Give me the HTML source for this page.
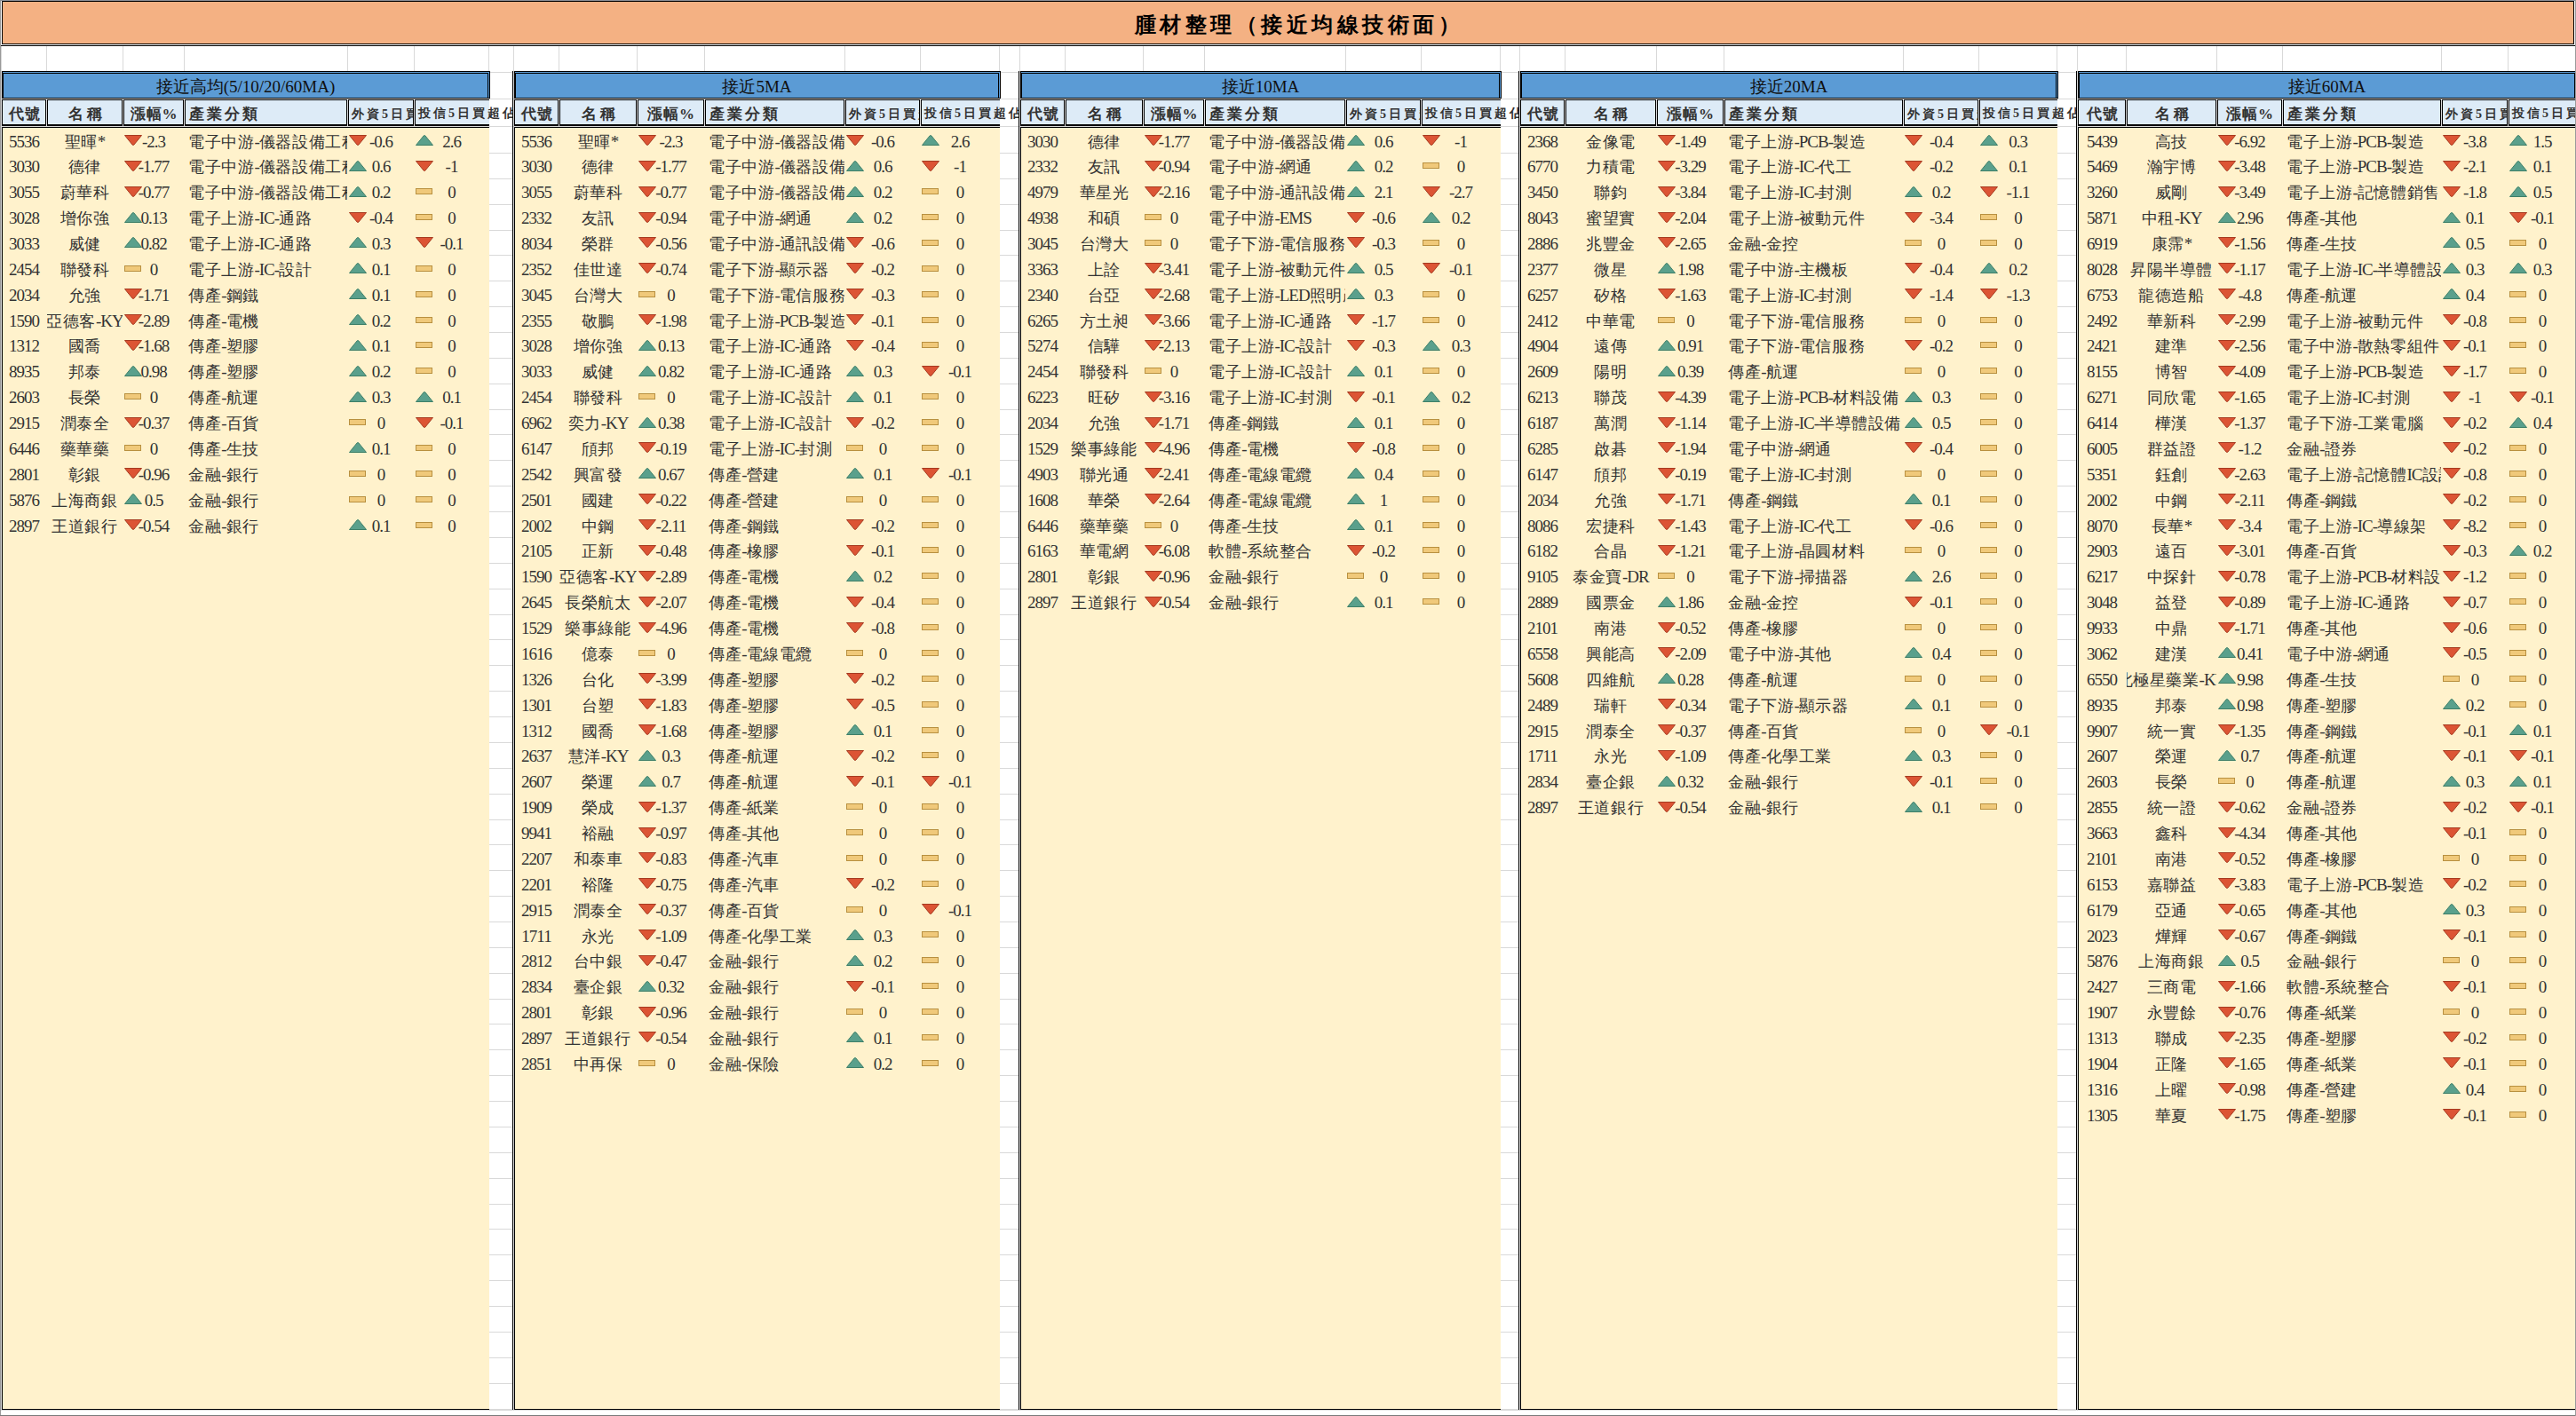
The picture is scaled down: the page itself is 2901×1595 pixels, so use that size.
<!DOCTYPE html><html><head><meta charset="utf-8"><style>

html,body{margin:0;padding:0;}
body{width:2901px;height:1595px;position:relative;overflow:hidden;background:#fff;font-family:"Liberation Serif",serif;color:#333;}
div{position:absolute;box-sizing:border-box;}
.g{background:#d9d9d9;}
.k{background:#000;}
.c{white-space:nowrap;overflow:hidden;display:flex;justify-content:center;font-size:19px;line-height:28px;height:28px;letter-spacing:-1px;}
.l{white-space:nowrap;overflow:hidden;font-size:19px;line-height:28px;height:28px;letter-spacing:-1px;padding-left:4px;}
.c span{flex:none;}
i{font-style:normal;font-size:18px;letter-spacing:0.6px;}
.hd{background:#ddebf7;border:1px solid #000;border-bottom-width:2px;font-weight:bold;font-size:17px;line-height:31px;white-space:nowrap;overflow:hidden;}
.bh{background:#5b9bd5;font-size:19px;line-height:29px;text-align:center;white-space:nowrap;color:#111;}
.body{background:#fff2cc;}
svg{position:absolute;}

</style></head><body>
<div class="g" style="left:1px;top:52px;width:1px;height:1537px"></div>
<div class="g" style="left:52px;top:52px;width:1px;height:1537px"></div>
<div class="g" style="left:138px;top:52px;width:1px;height:1537px"></div>
<div class="g" style="left:207px;top:52px;width:1px;height:1537px"></div>
<div class="g" style="left:391px;top:52px;width:1px;height:1537px"></div>
<div class="g" style="left:466px;top:52px;width:1px;height:1537px"></div>
<div class="g" style="left:550px;top:52px;width:1px;height:1537px"></div>
<div class="g" style="left:578px;top:52px;width:1px;height:1537px"></div>
<div class="g" style="left:629px;top:52px;width:1px;height:1537px"></div>
<div class="g" style="left:717px;top:52px;width:1px;height:1537px"></div>
<div class="g" style="left:793px;top:52px;width:1px;height:1537px"></div>
<div class="g" style="left:951px;top:52px;width:1px;height:1537px"></div>
<div class="g" style="left:1036px;top:52px;width:1px;height:1537px"></div>
<div class="g" style="left:1125px;top:52px;width:1px;height:1537px"></div>
<div class="g" style="left:1148px;top:52px;width:1px;height:1537px"></div>
<div class="g" style="left:1199px;top:52px;width:1px;height:1537px"></div>
<div class="g" style="left:1287px;top:52px;width:1px;height:1537px"></div>
<div class="g" style="left:1356px;top:52px;width:1px;height:1537px"></div>
<div class="g" style="left:1515px;top:52px;width:1px;height:1537px"></div>
<div class="g" style="left:1600px;top:52px;width:1px;height:1537px"></div>
<div class="g" style="left:1689px;top:52px;width:1px;height:1537px"></div>
<div class="g" style="left:1711px;top:52px;width:1px;height:1537px"></div>
<div class="g" style="left:1762px;top:52px;width:1px;height:1537px"></div>
<div class="g" style="left:1865px;top:52px;width:1px;height:1537px"></div>
<div class="g" style="left:1941px;top:52px;width:1px;height:1537px"></div>
<div class="g" style="left:2143px;top:52px;width:1px;height:1537px"></div>
<div class="g" style="left:2228px;top:52px;width:1px;height:1537px"></div>
<div class="g" style="left:2316px;top:52px;width:1px;height:1537px"></div>
<div class="g" style="left:2339px;top:52px;width:1px;height:1537px"></div>
<div class="g" style="left:2394px;top:52px;width:1px;height:1537px"></div>
<div class="g" style="left:2496px;top:52px;width:1px;height:1537px"></div>
<div class="g" style="left:2570px;top:52px;width:1px;height:1537px"></div>
<div class="g" style="left:2749px;top:52px;width:1px;height:1537px"></div>
<div class="g" style="left:2824px;top:52px;width:1px;height:1537px"></div>
<div class="g" style="left:1px;top:81px;width:2899px;height:1px"></div>
<div class="g" style="left:1px;top:111px;width:2899px;height:1px"></div>
<div class="g" style="left:1px;top:142px;width:2899px;height:1px"></div>
<div class="g" style="left:1px;top:172px;width:2899px;height:1px"></div>
<div class="g" style="left:1px;top:201px;width:2899px;height:1px"></div>
<div class="g" style="left:1px;top:230px;width:2899px;height:1px"></div>
<div class="g" style="left:1px;top:259px;width:2899px;height:1px"></div>
<div class="g" style="left:1px;top:287px;width:2899px;height:1px"></div>
<div class="g" style="left:1px;top:316px;width:2899px;height:1px"></div>
<div class="g" style="left:1px;top:345px;width:2899px;height:1px"></div>
<div class="g" style="left:1px;top:374px;width:2899px;height:1px"></div>
<div class="g" style="left:1px;top:403px;width:2899px;height:1px"></div>
<div class="g" style="left:1px;top:432px;width:2899px;height:1px"></div>
<div class="g" style="left:1px;top:461px;width:2899px;height:1px"></div>
<div class="g" style="left:1px;top:489px;width:2899px;height:1px"></div>
<div class="g" style="left:1px;top:518px;width:2899px;height:1px"></div>
<div class="g" style="left:1px;top:547px;width:2899px;height:1px"></div>
<div class="g" style="left:1px;top:576px;width:2899px;height:1px"></div>
<div class="g" style="left:1px;top:605px;width:2899px;height:1px"></div>
<div class="g" style="left:1px;top:634px;width:2899px;height:1px"></div>
<div class="g" style="left:1px;top:663px;width:2899px;height:1px"></div>
<div class="g" style="left:1px;top:692px;width:2899px;height:1px"></div>
<div class="g" style="left:1px;top:720px;width:2899px;height:1px"></div>
<div class="g" style="left:1px;top:749px;width:2899px;height:1px"></div>
<div class="g" style="left:1px;top:778px;width:2899px;height:1px"></div>
<div class="g" style="left:1px;top:807px;width:2899px;height:1px"></div>
<div class="g" style="left:1px;top:836px;width:2899px;height:1px"></div>
<div class="g" style="left:1px;top:865px;width:2899px;height:1px"></div>
<div class="g" style="left:1px;top:894px;width:2899px;height:1px"></div>
<div class="g" style="left:1px;top:923px;width:2899px;height:1px"></div>
<div class="g" style="left:1px;top:951px;width:2899px;height:1px"></div>
<div class="g" style="left:1px;top:980px;width:2899px;height:1px"></div>
<div class="g" style="left:1px;top:1009px;width:2899px;height:1px"></div>
<div class="g" style="left:1px;top:1038px;width:2899px;height:1px"></div>
<div class="g" style="left:1px;top:1067px;width:2899px;height:1px"></div>
<div class="g" style="left:1px;top:1096px;width:2899px;height:1px"></div>
<div class="g" style="left:1px;top:1125px;width:2899px;height:1px"></div>
<div class="g" style="left:1px;top:1153px;width:2899px;height:1px"></div>
<div class="g" style="left:1px;top:1182px;width:2899px;height:1px"></div>
<div class="g" style="left:1px;top:1211px;width:2899px;height:1px"></div>
<div class="g" style="left:1px;top:1240px;width:2899px;height:1px"></div>
<div class="g" style="left:1px;top:1269px;width:2899px;height:1px"></div>
<div class="g" style="left:1px;top:1298px;width:2899px;height:1px"></div>
<div class="g" style="left:1px;top:1327px;width:2899px;height:1px"></div>
<div class="g" style="left:1px;top:1356px;width:2899px;height:1px"></div>
<div class="g" style="left:1px;top:1384px;width:2899px;height:1px"></div>
<div class="g" style="left:1px;top:1413px;width:2899px;height:1px"></div>
<div class="g" style="left:1px;top:1442px;width:2899px;height:1px"></div>
<div class="g" style="left:1px;top:1471px;width:2899px;height:1px"></div>
<div class="g" style="left:1px;top:1500px;width:2899px;height:1px"></div>
<div class="g" style="left:1px;top:1529px;width:2899px;height:1px"></div>
<div class="g" style="left:1px;top:1558px;width:2899px;height:1px"></div>
<div class="g" style="left:1px;top:1587px;width:2899px;height:1px"></div>
<div class="g" style="left:1px;top:1588px;width:2899px;height:1px"></div>
<div style="left:2px;top:1px;width:2897px;height:49px;background:#f4b183;border:1px solid #000;"></div>
<div class="k" style="left:1px;top:51px;width:2899px;height:1px"></div>
<div style="left:0;top:8px;width:2901px;height:40px;text-align:center;font-weight:bold;font-size:24px;line-height:40px;letter-spacing:4.5px;padding-left:25px;color:#000;white-space:nowrap">腫材整理（接近均線技術面）</div>
<div class="bh" style="left:2px;top:80px;width:550px;height:31px;border-top:3px double #000;border-right:3px double #000;border-left:2px solid #000;border-bottom:1px solid #000">接近高均(5/10/20/60MA)</div>
<div class="hd" style="left:2px;top:112px;width:50px;height:30px;text-align:center;letter-spacing:1px;padding-left:2px;">代號</div>
<div class="hd" style="left:53px;top:112px;width:85px;height:30px;text-align:center;letter-spacing:4px;padding-left:4px;">名稱</div>
<div class="hd" style="left:139px;top:112px;width:68px;height:30px;text-align:center;letter-spacing:1px;padding-left:1px;">漲幅%</div>
<div class="hd" style="left:208px;top:112px;width:183px;height:30px;padding-left:4px;letter-spacing:3px;">產業分類</div>
<div class="hd" style="left:392px;top:112px;width:74px;height:30px;padding-left:3px;letter-spacing:3px;font-size:14px;">外資5日買超佔股本比</div>
<div class="hd" style="left:467px;top:112px;width:84px;height:30px;padding-left:3px;letter-spacing:3px;font-size:14px;border-right:none;"></div>
<div class="hd" style="left:467px;top:112px;width:110px;height:30px;border:none;background:none;padding-left:4px;letter-spacing:3px;font-size:14px;">投信5日買超佔股本比</div>
<div class="body" style="left:2px;top:143px;width:549px;height:1445px;border-left:1px solid #000;border-top:1px solid #000;border-bottom:1px solid #000"></div>
<div class="c" style="left:2px;top:145.5px;width:50px"><span>5536</span></div>
<div class="c" style="left:53px;top:145.5px;width:85px"><span><i>聖暉</i>*</span></div>
<div class="c" style="left:139px;top:145.5px;width:68px"><span>-2.3</span></div>
<svg style="left:139.5px;top:152.1px" width="20" height="12" viewBox="0 0 20 12"><polygon points="0.5,0.5 19.5,0.5 10.7,11.3 9.3,11.3" fill="#dc5434" stroke="#a63a20" stroke-width="1"/></svg>
<div class="l" style="left:208px;top:145.5px;width:183px"><span><i>電子中游</i>-<i>儀器設備工程</i></span></div>
<div class="c" style="left:392px;top:145.5px;width:74px"><span>-0.6</span></div>
<svg style="left:392.5px;top:152.1px" width="20" height="12" viewBox="0 0 20 12"><polygon points="0.5,0.5 19.5,0.5 10.7,11.3 9.3,11.3" fill="#dc5434" stroke="#a63a20" stroke-width="1"/></svg>
<div class="c" style="left:467px;top:145.5px;width:83px"><span>2.6</span></div>
<svg style="left:467.5px;top:152.1px" width="20" height="12" viewBox="0 0 20 12"><polygon points="0.5,11.5 19.5,11.5 10.7,0.7 9.3,0.7" fill="#5aa08c" stroke="#3d7f68" stroke-width="1"/></svg>
<div class="c" style="left:2px;top:174.4px;width:50px"><span>3030</span></div>
<div class="c" style="left:53px;top:174.4px;width:85px"><span><i>德律</i></span></div>
<div class="c" style="left:139px;top:174.4px;width:68px"><span>-1.77</span></div>
<svg style="left:139.5px;top:180.8px" width="20" height="12" viewBox="0 0 20 12"><polygon points="0.5,0.5 19.5,0.5 10.7,11.3 9.3,11.3" fill="#dc5434" stroke="#a63a20" stroke-width="1"/></svg>
<div class="l" style="left:208px;top:174.4px;width:183px"><span><i>電子中游</i>-<i>儀器設備工程</i></span></div>
<div class="c" style="left:392px;top:174.4px;width:74px"><span>0.6</span></div>
<svg style="left:392.5px;top:180.8px" width="20" height="12" viewBox="0 0 20 12"><polygon points="0.5,11.5 19.5,11.5 10.7,0.7 9.3,0.7" fill="#5aa08c" stroke="#3d7f68" stroke-width="1"/></svg>
<div class="c" style="left:467px;top:174.4px;width:83px"><span>-1</span></div>
<svg style="left:467.5px;top:180.8px" width="20" height="12" viewBox="0 0 20 12"><polygon points="0.5,0.5 19.5,0.5 10.7,11.3 9.3,11.3" fill="#dc5434" stroke="#a63a20" stroke-width="1"/></svg>
<div class="c" style="left:2px;top:203.2px;width:50px"><span>3055</span></div>
<div class="c" style="left:53px;top:203.2px;width:85px"><span><i>蔚華科</i></span></div>
<div class="c" style="left:139px;top:203.2px;width:68px"><span>-0.77</span></div>
<svg style="left:139.5px;top:209.7px" width="20" height="12" viewBox="0 0 20 12"><polygon points="0.5,0.5 19.5,0.5 10.7,11.3 9.3,11.3" fill="#dc5434" stroke="#a63a20" stroke-width="1"/></svg>
<div class="l" style="left:208px;top:203.2px;width:183px"><span><i>電子中游</i>-<i>儀器設備工程</i></span></div>
<div class="c" style="left:392px;top:203.2px;width:74px"><span>0.2</span></div>
<svg style="left:392.5px;top:209.7px" width="20" height="12" viewBox="0 0 20 12"><polygon points="0.5,11.5 19.5,11.5 10.7,0.7 9.3,0.7" fill="#5aa08c" stroke="#3d7f68" stroke-width="1"/></svg>
<div class="c" style="left:467px;top:203.2px;width:83px"><span>0</span></div>
<svg style="left:467.5px;top:212.2px" width="19" height="7" viewBox="0 0 19 7"><rect x="0.5" y="0.5" width="18" height="6" fill="#f0c97a" stroke="#b89040" stroke-width="1"/></svg>
<div class="c" style="left:2px;top:232.1px;width:50px"><span>3028</span></div>
<div class="c" style="left:53px;top:232.1px;width:85px"><span><i>增你強</i></span></div>
<div class="c" style="left:139px;top:232.1px;width:68px"><span>0.13</span></div>
<svg style="left:139.5px;top:238.6px" width="20" height="12" viewBox="0 0 20 12"><polygon points="0.5,11.5 19.5,11.5 10.7,0.7 9.3,0.7" fill="#5aa08c" stroke="#3d7f68" stroke-width="1"/></svg>
<div class="l" style="left:208px;top:232.1px;width:183px"><span><i>電子上游</i>-IC-<i>通路</i></span></div>
<div class="c" style="left:392px;top:232.1px;width:74px"><span>-0.4</span></div>
<svg style="left:392.5px;top:238.6px" width="20" height="12" viewBox="0 0 20 12"><polygon points="0.5,0.5 19.5,0.5 10.7,11.3 9.3,11.3" fill="#dc5434" stroke="#a63a20" stroke-width="1"/></svg>
<div class="c" style="left:467px;top:232.1px;width:83px"><span>0</span></div>
<svg style="left:467.5px;top:241.1px" width="19" height="7" viewBox="0 0 19 7"><rect x="0.5" y="0.5" width="18" height="6" fill="#f0c97a" stroke="#b89040" stroke-width="1"/></svg>
<div class="c" style="left:2px;top:261.0px;width:50px"><span>3033</span></div>
<div class="c" style="left:53px;top:261.0px;width:85px"><span><i>威健</i></span></div>
<div class="c" style="left:139px;top:261.0px;width:68px"><span>0.82</span></div>
<svg style="left:139.5px;top:267.4px" width="20" height="12" viewBox="0 0 20 12"><polygon points="0.5,11.5 19.5,11.5 10.7,0.7 9.3,0.7" fill="#5aa08c" stroke="#3d7f68" stroke-width="1"/></svg>
<div class="l" style="left:208px;top:261.0px;width:183px"><span><i>電子上游</i>-IC-<i>通路</i></span></div>
<div class="c" style="left:392px;top:261.0px;width:74px"><span>0.3</span></div>
<svg style="left:392.5px;top:267.4px" width="20" height="12" viewBox="0 0 20 12"><polygon points="0.5,11.5 19.5,11.5 10.7,0.7 9.3,0.7" fill="#5aa08c" stroke="#3d7f68" stroke-width="1"/></svg>
<div class="c" style="left:467px;top:261.0px;width:83px"><span>-0.1</span></div>
<svg style="left:467.5px;top:267.4px" width="20" height="12" viewBox="0 0 20 12"><polygon points="0.5,0.5 19.5,0.5 10.7,11.3 9.3,11.3" fill="#dc5434" stroke="#a63a20" stroke-width="1"/></svg>
<div class="c" style="left:2px;top:289.8px;width:50px"><span>2454</span></div>
<div class="c" style="left:53px;top:289.8px;width:85px"><span><i>聯發科</i></span></div>
<div class="c" style="left:139px;top:289.8px;width:68px"><span>0</span></div>
<svg style="left:139.5px;top:298.8px" width="19" height="7" viewBox="0 0 19 7"><rect x="0.5" y="0.5" width="18" height="6" fill="#f0c97a" stroke="#b89040" stroke-width="1"/></svg>
<div class="l" style="left:208px;top:289.8px;width:183px"><span><i>電子上游</i>-IC-<i>設計</i></span></div>
<div class="c" style="left:392px;top:289.8px;width:74px"><span>0.1</span></div>
<svg style="left:392.5px;top:296.3px" width="20" height="12" viewBox="0 0 20 12"><polygon points="0.5,11.5 19.5,11.5 10.7,0.7 9.3,0.7" fill="#5aa08c" stroke="#3d7f68" stroke-width="1"/></svg>
<div class="c" style="left:467px;top:289.8px;width:83px"><span>0</span></div>
<svg style="left:467.5px;top:298.8px" width="19" height="7" viewBox="0 0 19 7"><rect x="0.5" y="0.5" width="18" height="6" fill="#f0c97a" stroke="#b89040" stroke-width="1"/></svg>
<div class="c" style="left:2px;top:318.7px;width:50px"><span>2034</span></div>
<div class="c" style="left:53px;top:318.7px;width:85px"><span><i>允強</i></span></div>
<div class="c" style="left:139px;top:318.7px;width:68px"><span>-1.71</span></div>
<svg style="left:139.5px;top:325.2px" width="20" height="12" viewBox="0 0 20 12"><polygon points="0.5,0.5 19.5,0.5 10.7,11.3 9.3,11.3" fill="#dc5434" stroke="#a63a20" stroke-width="1"/></svg>
<div class="l" style="left:208px;top:318.7px;width:183px"><span><i>傳產</i>-<i>鋼鐵</i></span></div>
<div class="c" style="left:392px;top:318.7px;width:74px"><span>0.1</span></div>
<svg style="left:392.5px;top:325.2px" width="20" height="12" viewBox="0 0 20 12"><polygon points="0.5,11.5 19.5,11.5 10.7,0.7 9.3,0.7" fill="#5aa08c" stroke="#3d7f68" stroke-width="1"/></svg>
<div class="c" style="left:467px;top:318.7px;width:83px"><span>0</span></div>
<svg style="left:467.5px;top:327.7px" width="19" height="7" viewBox="0 0 19 7"><rect x="0.5" y="0.5" width="18" height="6" fill="#f0c97a" stroke="#b89040" stroke-width="1"/></svg>
<div class="c" style="left:2px;top:347.6px;width:50px"><span>1590</span></div>
<div class="c" style="left:53px;top:347.6px;width:85px"><span><i>亞德客</i>-KY</span></div>
<div class="c" style="left:139px;top:347.6px;width:68px"><span>-2.89</span></div>
<svg style="left:139.5px;top:354.1px" width="20" height="12" viewBox="0 0 20 12"><polygon points="0.5,0.5 19.5,0.5 10.7,11.3 9.3,11.3" fill="#dc5434" stroke="#a63a20" stroke-width="1"/></svg>
<div class="l" style="left:208px;top:347.6px;width:183px"><span><i>傳產</i>-<i>電機</i></span></div>
<div class="c" style="left:392px;top:347.6px;width:74px"><span>0.2</span></div>
<svg style="left:392.5px;top:354.1px" width="20" height="12" viewBox="0 0 20 12"><polygon points="0.5,11.5 19.5,11.5 10.7,0.7 9.3,0.7" fill="#5aa08c" stroke="#3d7f68" stroke-width="1"/></svg>
<div class="c" style="left:467px;top:347.6px;width:83px"><span>0</span></div>
<svg style="left:467.5px;top:356.6px" width="19" height="7" viewBox="0 0 19 7"><rect x="0.5" y="0.5" width="18" height="6" fill="#f0c97a" stroke="#b89040" stroke-width="1"/></svg>
<div class="c" style="left:2px;top:376.4px;width:50px"><span>1312</span></div>
<div class="c" style="left:53px;top:376.4px;width:85px"><span><i>國喬</i></span></div>
<div class="c" style="left:139px;top:376.4px;width:68px"><span>-1.68</span></div>
<svg style="left:139.5px;top:382.9px" width="20" height="12" viewBox="0 0 20 12"><polygon points="0.5,0.5 19.5,0.5 10.7,11.3 9.3,11.3" fill="#dc5434" stroke="#a63a20" stroke-width="1"/></svg>
<div class="l" style="left:208px;top:376.4px;width:183px"><span><i>傳產</i>-<i>塑膠</i></span></div>
<div class="c" style="left:392px;top:376.4px;width:74px"><span>0.1</span></div>
<svg style="left:392.5px;top:382.9px" width="20" height="12" viewBox="0 0 20 12"><polygon points="0.5,11.5 19.5,11.5 10.7,0.7 9.3,0.7" fill="#5aa08c" stroke="#3d7f68" stroke-width="1"/></svg>
<div class="c" style="left:467px;top:376.4px;width:83px"><span>0</span></div>
<svg style="left:467.5px;top:385.4px" width="19" height="7" viewBox="0 0 19 7"><rect x="0.5" y="0.5" width="18" height="6" fill="#f0c97a" stroke="#b89040" stroke-width="1"/></svg>
<div class="c" style="left:2px;top:405.3px;width:50px"><span>8935</span></div>
<div class="c" style="left:53px;top:405.3px;width:85px"><span><i>邦泰</i></span></div>
<div class="c" style="left:139px;top:405.3px;width:68px"><span>0.98</span></div>
<svg style="left:139.5px;top:411.8px" width="20" height="12" viewBox="0 0 20 12"><polygon points="0.5,11.5 19.5,11.5 10.7,0.7 9.3,0.7" fill="#5aa08c" stroke="#3d7f68" stroke-width="1"/></svg>
<div class="l" style="left:208px;top:405.3px;width:183px"><span><i>傳產</i>-<i>塑膠</i></span></div>
<div class="c" style="left:392px;top:405.3px;width:74px"><span>0.2</span></div>
<svg style="left:392.5px;top:411.8px" width="20" height="12" viewBox="0 0 20 12"><polygon points="0.5,11.5 19.5,11.5 10.7,0.7 9.3,0.7" fill="#5aa08c" stroke="#3d7f68" stroke-width="1"/></svg>
<div class="c" style="left:467px;top:405.3px;width:83px"><span>0</span></div>
<svg style="left:467.5px;top:414.3px" width="19" height="7" viewBox="0 0 19 7"><rect x="0.5" y="0.5" width="18" height="6" fill="#f0c97a" stroke="#b89040" stroke-width="1"/></svg>
<div class="c" style="left:2px;top:434.2px;width:50px"><span>2603</span></div>
<div class="c" style="left:53px;top:434.2px;width:85px"><span><i>長榮</i></span></div>
<div class="c" style="left:139px;top:434.2px;width:68px"><span>0</span></div>
<svg style="left:139.5px;top:443.2px" width="19" height="7" viewBox="0 0 19 7"><rect x="0.5" y="0.5" width="18" height="6" fill="#f0c97a" stroke="#b89040" stroke-width="1"/></svg>
<div class="l" style="left:208px;top:434.2px;width:183px"><span><i>傳產</i>-<i>航運</i></span></div>
<div class="c" style="left:392px;top:434.2px;width:74px"><span>0.3</span></div>
<svg style="left:392.5px;top:440.7px" width="20" height="12" viewBox="0 0 20 12"><polygon points="0.5,11.5 19.5,11.5 10.7,0.7 9.3,0.7" fill="#5aa08c" stroke="#3d7f68" stroke-width="1"/></svg>
<div class="c" style="left:467px;top:434.2px;width:83px"><span>0.1</span></div>
<svg style="left:467.5px;top:440.7px" width="20" height="12" viewBox="0 0 20 12"><polygon points="0.5,11.5 19.5,11.5 10.7,0.7 9.3,0.7" fill="#5aa08c" stroke="#3d7f68" stroke-width="1"/></svg>
<div class="c" style="left:2px;top:463.1px;width:50px"><span>2915</span></div>
<div class="c" style="left:53px;top:463.1px;width:85px"><span><i>潤泰全</i></span></div>
<div class="c" style="left:139px;top:463.1px;width:68px"><span>-0.37</span></div>
<svg style="left:139.5px;top:469.5px" width="20" height="12" viewBox="0 0 20 12"><polygon points="0.5,0.5 19.5,0.5 10.7,11.3 9.3,11.3" fill="#dc5434" stroke="#a63a20" stroke-width="1"/></svg>
<div class="l" style="left:208px;top:463.1px;width:183px"><span><i>傳產</i>-<i>百貨</i></span></div>
<div class="c" style="left:392px;top:463.1px;width:74px"><span>0</span></div>
<svg style="left:392.5px;top:472.0px" width="19" height="7" viewBox="0 0 19 7"><rect x="0.5" y="0.5" width="18" height="6" fill="#f0c97a" stroke="#b89040" stroke-width="1"/></svg>
<div class="c" style="left:467px;top:463.1px;width:83px"><span>-0.1</span></div>
<svg style="left:467.5px;top:469.5px" width="20" height="12" viewBox="0 0 20 12"><polygon points="0.5,0.5 19.5,0.5 10.7,11.3 9.3,11.3" fill="#dc5434" stroke="#a63a20" stroke-width="1"/></svg>
<div class="c" style="left:2px;top:491.9px;width:50px"><span>6446</span></div>
<div class="c" style="left:53px;top:491.9px;width:85px"><span><i>藥華藥</i></span></div>
<div class="c" style="left:139px;top:491.9px;width:68px"><span>0</span></div>
<svg style="left:139.5px;top:500.9px" width="19" height="7" viewBox="0 0 19 7"><rect x="0.5" y="0.5" width="18" height="6" fill="#f0c97a" stroke="#b89040" stroke-width="1"/></svg>
<div class="l" style="left:208px;top:491.9px;width:183px"><span><i>傳產</i>-<i>生技</i></span></div>
<div class="c" style="left:392px;top:491.9px;width:74px"><span>0.1</span></div>
<svg style="left:392.5px;top:498.4px" width="20" height="12" viewBox="0 0 20 12"><polygon points="0.5,11.5 19.5,11.5 10.7,0.7 9.3,0.7" fill="#5aa08c" stroke="#3d7f68" stroke-width="1"/></svg>
<div class="c" style="left:467px;top:491.9px;width:83px"><span>0</span></div>
<svg style="left:467.5px;top:500.9px" width="19" height="7" viewBox="0 0 19 7"><rect x="0.5" y="0.5" width="18" height="6" fill="#f0c97a" stroke="#b89040" stroke-width="1"/></svg>
<div class="c" style="left:2px;top:520.8px;width:50px"><span>2801</span></div>
<div class="c" style="left:53px;top:520.8px;width:85px"><span><i>彰銀</i></span></div>
<div class="c" style="left:139px;top:520.8px;width:68px"><span>-0.96</span></div>
<svg style="left:139.5px;top:527.3px" width="20" height="12" viewBox="0 0 20 12"><polygon points="0.5,0.5 19.5,0.5 10.7,11.3 9.3,11.3" fill="#dc5434" stroke="#a63a20" stroke-width="1"/></svg>
<div class="l" style="left:208px;top:520.8px;width:183px"><span><i>金融</i>-<i>銀行</i></span></div>
<div class="c" style="left:392px;top:520.8px;width:74px"><span>0</span></div>
<svg style="left:392.5px;top:529.8px" width="19" height="7" viewBox="0 0 19 7"><rect x="0.5" y="0.5" width="18" height="6" fill="#f0c97a" stroke="#b89040" stroke-width="1"/></svg>
<div class="c" style="left:467px;top:520.8px;width:83px"><span>0</span></div>
<svg style="left:467.5px;top:529.8px" width="19" height="7" viewBox="0 0 19 7"><rect x="0.5" y="0.5" width="18" height="6" fill="#f0c97a" stroke="#b89040" stroke-width="1"/></svg>
<div class="c" style="left:2px;top:549.7px;width:50px"><span>5876</span></div>
<div class="c" style="left:53px;top:549.7px;width:85px"><span><i>上海商銀</i></span></div>
<div class="c" style="left:139px;top:549.7px;width:68px"><span>0.5</span></div>
<svg style="left:139.5px;top:556.1px" width="20" height="12" viewBox="0 0 20 12"><polygon points="0.5,11.5 19.5,11.5 10.7,0.7 9.3,0.7" fill="#5aa08c" stroke="#3d7f68" stroke-width="1"/></svg>
<div class="l" style="left:208px;top:549.7px;width:183px"><span><i>金融</i>-<i>銀行</i></span></div>
<div class="c" style="left:392px;top:549.7px;width:74px"><span>0</span></div>
<svg style="left:392.5px;top:558.6px" width="19" height="7" viewBox="0 0 19 7"><rect x="0.5" y="0.5" width="18" height="6" fill="#f0c97a" stroke="#b89040" stroke-width="1"/></svg>
<div class="c" style="left:467px;top:549.7px;width:83px"><span>0</span></div>
<svg style="left:467.5px;top:558.6px" width="19" height="7" viewBox="0 0 19 7"><rect x="0.5" y="0.5" width="18" height="6" fill="#f0c97a" stroke="#b89040" stroke-width="1"/></svg>
<div class="c" style="left:2px;top:578.5px;width:50px"><span>2897</span></div>
<div class="c" style="left:53px;top:578.5px;width:85px"><span><i>王道銀行</i></span></div>
<div class="c" style="left:139px;top:578.5px;width:68px"><span>-0.54</span></div>
<svg style="left:139.5px;top:585.0px" width="20" height="12" viewBox="0 0 20 12"><polygon points="0.5,0.5 19.5,0.5 10.7,11.3 9.3,11.3" fill="#dc5434" stroke="#a63a20" stroke-width="1"/></svg>
<div class="l" style="left:208px;top:578.5px;width:183px"><span><i>金融</i>-<i>銀行</i></span></div>
<div class="c" style="left:392px;top:578.5px;width:74px"><span>0.1</span></div>
<svg style="left:392.5px;top:585.0px" width="20" height="12" viewBox="0 0 20 12"><polygon points="0.5,11.5 19.5,11.5 10.7,0.7 9.3,0.7" fill="#5aa08c" stroke="#3d7f68" stroke-width="1"/></svg>
<div class="c" style="left:467px;top:578.5px;width:83px"><span>0</span></div>
<svg style="left:467.5px;top:587.5px" width="19" height="7" viewBox="0 0 19 7"><rect x="0.5" y="0.5" width="18" height="6" fill="#f0c97a" stroke="#b89040" stroke-width="1"/></svg>
<div class="k" style="left:577px;top:80px;width:1px;height:1508px"></div>
<div class="bh" style="left:579px;top:80px;width:548px;height:31px;border-top:3px double #000;border-right:3px double #000;border-left:2px solid #000;border-bottom:1px solid #000">接近5MA</div>
<div class="hd" style="left:579px;top:112px;width:50px;height:30px;text-align:center;letter-spacing:1px;padding-left:2px;">代號</div>
<div class="hd" style="left:630px;top:112px;width:87px;height:30px;text-align:center;letter-spacing:4px;padding-left:4px;">名稱</div>
<div class="hd" style="left:718px;top:112px;width:75px;height:30px;text-align:center;letter-spacing:1px;padding-left:1px;">漲幅%</div>
<div class="hd" style="left:794px;top:112px;width:157px;height:30px;padding-left:4px;letter-spacing:3px;">產業分類</div>
<div class="hd" style="left:952px;top:112px;width:84px;height:30px;padding-left:3px;letter-spacing:3px;font-size:14px;">外資5日買超佔股本比</div>
<div class="hd" style="left:1037px;top:112px;width:89px;height:30px;padding-left:3px;letter-spacing:3px;font-size:14px;border-right:none;"></div>
<div class="hd" style="left:1037px;top:112px;width:110px;height:30px;border:none;background:none;padding-left:4px;letter-spacing:3px;font-size:14px;">投信5日買超佔股本比</div>
<div class="body" style="left:579px;top:143px;width:547px;height:1445px;border-left:1px solid #000;border-top:1px solid #000;border-bottom:1px solid #000"></div>
<div class="c" style="left:579px;top:145.5px;width:50px"><span>5536</span></div>
<div class="c" style="left:630px;top:145.5px;width:87px"><span><i>聖暉</i>*</span></div>
<div class="c" style="left:718px;top:145.5px;width:75px"><span>-2.3</span></div>
<svg style="left:718.5px;top:152.1px" width="20" height="12" viewBox="0 0 20 12"><polygon points="0.5,0.5 19.5,0.5 10.7,11.3 9.3,11.3" fill="#dc5434" stroke="#a63a20" stroke-width="1"/></svg>
<div class="l" style="left:794px;top:145.5px;width:157px"><span><i>電子中游</i>-<i>儀器設備工程</i></span></div>
<div class="c" style="left:952px;top:145.5px;width:84px"><span>-0.6</span></div>
<svg style="left:952.5px;top:152.1px" width="20" height="12" viewBox="0 0 20 12"><polygon points="0.5,0.5 19.5,0.5 10.7,11.3 9.3,11.3" fill="#dc5434" stroke="#a63a20" stroke-width="1"/></svg>
<div class="c" style="left:1037px;top:145.5px;width:88px"><span>2.6</span></div>
<svg style="left:1037.5px;top:152.1px" width="20" height="12" viewBox="0 0 20 12"><polygon points="0.5,11.5 19.5,11.5 10.7,0.7 9.3,0.7" fill="#5aa08c" stroke="#3d7f68" stroke-width="1"/></svg>
<div class="c" style="left:579px;top:174.4px;width:50px"><span>3030</span></div>
<div class="c" style="left:630px;top:174.4px;width:87px"><span><i>德律</i></span></div>
<div class="c" style="left:718px;top:174.4px;width:75px"><span>-1.77</span></div>
<svg style="left:718.5px;top:180.8px" width="20" height="12" viewBox="0 0 20 12"><polygon points="0.5,0.5 19.5,0.5 10.7,11.3 9.3,11.3" fill="#dc5434" stroke="#a63a20" stroke-width="1"/></svg>
<div class="l" style="left:794px;top:174.4px;width:157px"><span><i>電子中游</i>-<i>儀器設備工程</i></span></div>
<div class="c" style="left:952px;top:174.4px;width:84px"><span>0.6</span></div>
<svg style="left:952.5px;top:180.8px" width="20" height="12" viewBox="0 0 20 12"><polygon points="0.5,11.5 19.5,11.5 10.7,0.7 9.3,0.7" fill="#5aa08c" stroke="#3d7f68" stroke-width="1"/></svg>
<div class="c" style="left:1037px;top:174.4px;width:88px"><span>-1</span></div>
<svg style="left:1037.5px;top:180.8px" width="20" height="12" viewBox="0 0 20 12"><polygon points="0.5,0.5 19.5,0.5 10.7,11.3 9.3,11.3" fill="#dc5434" stroke="#a63a20" stroke-width="1"/></svg>
<div class="c" style="left:579px;top:203.2px;width:50px"><span>3055</span></div>
<div class="c" style="left:630px;top:203.2px;width:87px"><span><i>蔚華科</i></span></div>
<div class="c" style="left:718px;top:203.2px;width:75px"><span>-0.77</span></div>
<svg style="left:718.5px;top:209.7px" width="20" height="12" viewBox="0 0 20 12"><polygon points="0.5,0.5 19.5,0.5 10.7,11.3 9.3,11.3" fill="#dc5434" stroke="#a63a20" stroke-width="1"/></svg>
<div class="l" style="left:794px;top:203.2px;width:157px"><span><i>電子中游</i>-<i>儀器設備工程</i></span></div>
<div class="c" style="left:952px;top:203.2px;width:84px"><span>0.2</span></div>
<svg style="left:952.5px;top:209.7px" width="20" height="12" viewBox="0 0 20 12"><polygon points="0.5,11.5 19.5,11.5 10.7,0.7 9.3,0.7" fill="#5aa08c" stroke="#3d7f68" stroke-width="1"/></svg>
<div class="c" style="left:1037px;top:203.2px;width:88px"><span>0</span></div>
<svg style="left:1037.5px;top:212.2px" width="19" height="7" viewBox="0 0 19 7"><rect x="0.5" y="0.5" width="18" height="6" fill="#f0c97a" stroke="#b89040" stroke-width="1"/></svg>
<div class="c" style="left:579px;top:232.1px;width:50px"><span>2332</span></div>
<div class="c" style="left:630px;top:232.1px;width:87px"><span><i>友訊</i></span></div>
<div class="c" style="left:718px;top:232.1px;width:75px"><span>-0.94</span></div>
<svg style="left:718.5px;top:238.6px" width="20" height="12" viewBox="0 0 20 12"><polygon points="0.5,0.5 19.5,0.5 10.7,11.3 9.3,11.3" fill="#dc5434" stroke="#a63a20" stroke-width="1"/></svg>
<div class="l" style="left:794px;top:232.1px;width:157px"><span><i>電子中游</i>-<i>網通</i></span></div>
<div class="c" style="left:952px;top:232.1px;width:84px"><span>0.2</span></div>
<svg style="left:952.5px;top:238.6px" width="20" height="12" viewBox="0 0 20 12"><polygon points="0.5,11.5 19.5,11.5 10.7,0.7 9.3,0.7" fill="#5aa08c" stroke="#3d7f68" stroke-width="1"/></svg>
<div class="c" style="left:1037px;top:232.1px;width:88px"><span>0</span></div>
<svg style="left:1037.5px;top:241.1px" width="19" height="7" viewBox="0 0 19 7"><rect x="0.5" y="0.5" width="18" height="6" fill="#f0c97a" stroke="#b89040" stroke-width="1"/></svg>
<div class="c" style="left:579px;top:261.0px;width:50px"><span>8034</span></div>
<div class="c" style="left:630px;top:261.0px;width:87px"><span><i>榮群</i></span></div>
<div class="c" style="left:718px;top:261.0px;width:75px"><span>-0.56</span></div>
<svg style="left:718.5px;top:267.4px" width="20" height="12" viewBox="0 0 20 12"><polygon points="0.5,0.5 19.5,0.5 10.7,11.3 9.3,11.3" fill="#dc5434" stroke="#a63a20" stroke-width="1"/></svg>
<div class="l" style="left:794px;top:261.0px;width:157px"><span><i>電子中游</i>-<i>通訊設備</i></span></div>
<div class="c" style="left:952px;top:261.0px;width:84px"><span>-0.6</span></div>
<svg style="left:952.5px;top:267.4px" width="20" height="12" viewBox="0 0 20 12"><polygon points="0.5,0.5 19.5,0.5 10.7,11.3 9.3,11.3" fill="#dc5434" stroke="#a63a20" stroke-width="1"/></svg>
<div class="c" style="left:1037px;top:261.0px;width:88px"><span>0</span></div>
<svg style="left:1037.5px;top:269.9px" width="19" height="7" viewBox="0 0 19 7"><rect x="0.5" y="0.5" width="18" height="6" fill="#f0c97a" stroke="#b89040" stroke-width="1"/></svg>
<div class="c" style="left:579px;top:289.8px;width:50px"><span>2352</span></div>
<div class="c" style="left:630px;top:289.8px;width:87px"><span><i>佳世達</i></span></div>
<div class="c" style="left:718px;top:289.8px;width:75px"><span>-0.74</span></div>
<svg style="left:718.5px;top:296.3px" width="20" height="12" viewBox="0 0 20 12"><polygon points="0.5,0.5 19.5,0.5 10.7,11.3 9.3,11.3" fill="#dc5434" stroke="#a63a20" stroke-width="1"/></svg>
<div class="l" style="left:794px;top:289.8px;width:157px"><span><i>電子下游</i>-<i>顯示器</i></span></div>
<div class="c" style="left:952px;top:289.8px;width:84px"><span>-0.2</span></div>
<svg style="left:952.5px;top:296.3px" width="20" height="12" viewBox="0 0 20 12"><polygon points="0.5,0.5 19.5,0.5 10.7,11.3 9.3,11.3" fill="#dc5434" stroke="#a63a20" stroke-width="1"/></svg>
<div class="c" style="left:1037px;top:289.8px;width:88px"><span>0</span></div>
<svg style="left:1037.5px;top:298.8px" width="19" height="7" viewBox="0 0 19 7"><rect x="0.5" y="0.5" width="18" height="6" fill="#f0c97a" stroke="#b89040" stroke-width="1"/></svg>
<div class="c" style="left:579px;top:318.7px;width:50px"><span>3045</span></div>
<div class="c" style="left:630px;top:318.7px;width:87px"><span><i>台灣大</i></span></div>
<div class="c" style="left:718px;top:318.7px;width:75px"><span>0</span></div>
<svg style="left:718.5px;top:327.7px" width="19" height="7" viewBox="0 0 19 7"><rect x="0.5" y="0.5" width="18" height="6" fill="#f0c97a" stroke="#b89040" stroke-width="1"/></svg>
<div class="l" style="left:794px;top:318.7px;width:157px"><span><i>電子下游</i>-<i>電信服務</i></span></div>
<div class="c" style="left:952px;top:318.7px;width:84px"><span>-0.3</span></div>
<svg style="left:952.5px;top:325.2px" width="20" height="12" viewBox="0 0 20 12"><polygon points="0.5,0.5 19.5,0.5 10.7,11.3 9.3,11.3" fill="#dc5434" stroke="#a63a20" stroke-width="1"/></svg>
<div class="c" style="left:1037px;top:318.7px;width:88px"><span>0</span></div>
<svg style="left:1037.5px;top:327.7px" width="19" height="7" viewBox="0 0 19 7"><rect x="0.5" y="0.5" width="18" height="6" fill="#f0c97a" stroke="#b89040" stroke-width="1"/></svg>
<div class="c" style="left:579px;top:347.6px;width:50px"><span>2355</span></div>
<div class="c" style="left:630px;top:347.6px;width:87px"><span><i>敬鵬</i></span></div>
<div class="c" style="left:718px;top:347.6px;width:75px"><span>-1.98</span></div>
<svg style="left:718.5px;top:354.1px" width="20" height="12" viewBox="0 0 20 12"><polygon points="0.5,0.5 19.5,0.5 10.7,11.3 9.3,11.3" fill="#dc5434" stroke="#a63a20" stroke-width="1"/></svg>
<div class="l" style="left:794px;top:347.6px;width:157px"><span><i>電子上游</i>-PCB-<i>製造</i></span></div>
<div class="c" style="left:952px;top:347.6px;width:84px"><span>-0.1</span></div>
<svg style="left:952.5px;top:354.1px" width="20" height="12" viewBox="0 0 20 12"><polygon points="0.5,0.5 19.5,0.5 10.7,11.3 9.3,11.3" fill="#dc5434" stroke="#a63a20" stroke-width="1"/></svg>
<div class="c" style="left:1037px;top:347.6px;width:88px"><span>0</span></div>
<svg style="left:1037.5px;top:356.6px" width="19" height="7" viewBox="0 0 19 7"><rect x="0.5" y="0.5" width="18" height="6" fill="#f0c97a" stroke="#b89040" stroke-width="1"/></svg>
<div class="c" style="left:579px;top:376.4px;width:50px"><span>3028</span></div>
<div class="c" style="left:630px;top:376.4px;width:87px"><span><i>增你強</i></span></div>
<div class="c" style="left:718px;top:376.4px;width:75px"><span>0.13</span></div>
<svg style="left:718.5px;top:382.9px" width="20" height="12" viewBox="0 0 20 12"><polygon points="0.5,11.5 19.5,11.5 10.7,0.7 9.3,0.7" fill="#5aa08c" stroke="#3d7f68" stroke-width="1"/></svg>
<div class="l" style="left:794px;top:376.4px;width:157px"><span><i>電子上游</i>-IC-<i>通路</i></span></div>
<div class="c" style="left:952px;top:376.4px;width:84px"><span>-0.4</span></div>
<svg style="left:952.5px;top:382.9px" width="20" height="12" viewBox="0 0 20 12"><polygon points="0.5,0.5 19.5,0.5 10.7,11.3 9.3,11.3" fill="#dc5434" stroke="#a63a20" stroke-width="1"/></svg>
<div class="c" style="left:1037px;top:376.4px;width:88px"><span>0</span></div>
<svg style="left:1037.5px;top:385.4px" width="19" height="7" viewBox="0 0 19 7"><rect x="0.5" y="0.5" width="18" height="6" fill="#f0c97a" stroke="#b89040" stroke-width="1"/></svg>
<div class="c" style="left:579px;top:405.3px;width:50px"><span>3033</span></div>
<div class="c" style="left:630px;top:405.3px;width:87px"><span><i>威健</i></span></div>
<div class="c" style="left:718px;top:405.3px;width:75px"><span>0.82</span></div>
<svg style="left:718.5px;top:411.8px" width="20" height="12" viewBox="0 0 20 12"><polygon points="0.5,11.5 19.5,11.5 10.7,0.7 9.3,0.7" fill="#5aa08c" stroke="#3d7f68" stroke-width="1"/></svg>
<div class="l" style="left:794px;top:405.3px;width:157px"><span><i>電子上游</i>-IC-<i>通路</i></span></div>
<div class="c" style="left:952px;top:405.3px;width:84px"><span>0.3</span></div>
<svg style="left:952.5px;top:411.8px" width="20" height="12" viewBox="0 0 20 12"><polygon points="0.5,11.5 19.5,11.5 10.7,0.7 9.3,0.7" fill="#5aa08c" stroke="#3d7f68" stroke-width="1"/></svg>
<div class="c" style="left:1037px;top:405.3px;width:88px"><span>-0.1</span></div>
<svg style="left:1037.5px;top:411.8px" width="20" height="12" viewBox="0 0 20 12"><polygon points="0.5,0.5 19.5,0.5 10.7,11.3 9.3,11.3" fill="#dc5434" stroke="#a63a20" stroke-width="1"/></svg>
<div class="c" style="left:579px;top:434.2px;width:50px"><span>2454</span></div>
<div class="c" style="left:630px;top:434.2px;width:87px"><span><i>聯發科</i></span></div>
<div class="c" style="left:718px;top:434.2px;width:75px"><span>0</span></div>
<svg style="left:718.5px;top:443.2px" width="19" height="7" viewBox="0 0 19 7"><rect x="0.5" y="0.5" width="18" height="6" fill="#f0c97a" stroke="#b89040" stroke-width="1"/></svg>
<div class="l" style="left:794px;top:434.2px;width:157px"><span><i>電子上游</i>-IC-<i>設計</i></span></div>
<div class="c" style="left:952px;top:434.2px;width:84px"><span>0.1</span></div>
<svg style="left:952.5px;top:440.7px" width="20" height="12" viewBox="0 0 20 12"><polygon points="0.5,11.5 19.5,11.5 10.7,0.7 9.3,0.7" fill="#5aa08c" stroke="#3d7f68" stroke-width="1"/></svg>
<div class="c" style="left:1037px;top:434.2px;width:88px"><span>0</span></div>
<svg style="left:1037.5px;top:443.2px" width="19" height="7" viewBox="0 0 19 7"><rect x="0.5" y="0.5" width="18" height="6" fill="#f0c97a" stroke="#b89040" stroke-width="1"/></svg>
<div class="c" style="left:579px;top:463.1px;width:50px"><span>6962</span></div>
<div class="c" style="left:630px;top:463.1px;width:87px"><span><i>奕力</i>-KY</span></div>
<div class="c" style="left:718px;top:463.1px;width:75px"><span>0.38</span></div>
<svg style="left:718.5px;top:469.5px" width="20" height="12" viewBox="0 0 20 12"><polygon points="0.5,11.5 19.5,11.5 10.7,0.7 9.3,0.7" fill="#5aa08c" stroke="#3d7f68" stroke-width="1"/></svg>
<div class="l" style="left:794px;top:463.1px;width:157px"><span><i>電子上游</i>-IC-<i>設計</i></span></div>
<div class="c" style="left:952px;top:463.1px;width:84px"><span>-0.2</span></div>
<svg style="left:952.5px;top:469.5px" width="20" height="12" viewBox="0 0 20 12"><polygon points="0.5,0.5 19.5,0.5 10.7,11.3 9.3,11.3" fill="#dc5434" stroke="#a63a20" stroke-width="1"/></svg>
<div class="c" style="left:1037px;top:463.1px;width:88px"><span>0</span></div>
<svg style="left:1037.5px;top:472.0px" width="19" height="7" viewBox="0 0 19 7"><rect x="0.5" y="0.5" width="18" height="6" fill="#f0c97a" stroke="#b89040" stroke-width="1"/></svg>
<div class="c" style="left:579px;top:491.9px;width:50px"><span>6147</span></div>
<div class="c" style="left:630px;top:491.9px;width:87px"><span><i>頎邦</i></span></div>
<div class="c" style="left:718px;top:491.9px;width:75px"><span>-0.19</span></div>
<svg style="left:718.5px;top:498.4px" width="20" height="12" viewBox="0 0 20 12"><polygon points="0.5,0.5 19.5,0.5 10.7,11.3 9.3,11.3" fill="#dc5434" stroke="#a63a20" stroke-width="1"/></svg>
<div class="l" style="left:794px;top:491.9px;width:157px"><span><i>電子上游</i>-IC-<i>封測</i></span></div>
<div class="c" style="left:952px;top:491.9px;width:84px"><span>0</span></div>
<svg style="left:952.5px;top:500.9px" width="19" height="7" viewBox="0 0 19 7"><rect x="0.5" y="0.5" width="18" height="6" fill="#f0c97a" stroke="#b89040" stroke-width="1"/></svg>
<div class="c" style="left:1037px;top:491.9px;width:88px"><span>0</span></div>
<svg style="left:1037.5px;top:500.9px" width="19" height="7" viewBox="0 0 19 7"><rect x="0.5" y="0.5" width="18" height="6" fill="#f0c97a" stroke="#b89040" stroke-width="1"/></svg>
<div class="c" style="left:579px;top:520.8px;width:50px"><span>2542</span></div>
<div class="c" style="left:630px;top:520.8px;width:87px"><span><i>興富發</i></span></div>
<div class="c" style="left:718px;top:520.8px;width:75px"><span>0.67</span></div>
<svg style="left:718.5px;top:527.3px" width="20" height="12" viewBox="0 0 20 12"><polygon points="0.5,11.5 19.5,11.5 10.7,0.7 9.3,0.7" fill="#5aa08c" stroke="#3d7f68" stroke-width="1"/></svg>
<div class="l" style="left:794px;top:520.8px;width:157px"><span><i>傳產</i>-<i>營建</i></span></div>
<div class="c" style="left:952px;top:520.8px;width:84px"><span>0.1</span></div>
<svg style="left:952.5px;top:527.3px" width="20" height="12" viewBox="0 0 20 12"><polygon points="0.5,11.5 19.5,11.5 10.7,0.7 9.3,0.7" fill="#5aa08c" stroke="#3d7f68" stroke-width="1"/></svg>
<div class="c" style="left:1037px;top:520.8px;width:88px"><span>-0.1</span></div>
<svg style="left:1037.5px;top:527.3px" width="20" height="12" viewBox="0 0 20 12"><polygon points="0.5,0.5 19.5,0.5 10.7,11.3 9.3,11.3" fill="#dc5434" stroke="#a63a20" stroke-width="1"/></svg>
<div class="c" style="left:579px;top:549.7px;width:50px"><span>2501</span></div>
<div class="c" style="left:630px;top:549.7px;width:87px"><span><i>國建</i></span></div>
<div class="c" style="left:718px;top:549.7px;width:75px"><span>-0.22</span></div>
<svg style="left:718.5px;top:556.1px" width="20" height="12" viewBox="0 0 20 12"><polygon points="0.5,0.5 19.5,0.5 10.7,11.3 9.3,11.3" fill="#dc5434" stroke="#a63a20" stroke-width="1"/></svg>
<div class="l" style="left:794px;top:549.7px;width:157px"><span><i>傳產</i>-<i>營建</i></span></div>
<div class="c" style="left:952px;top:549.7px;width:84px"><span>0</span></div>
<svg style="left:952.5px;top:558.6px" width="19" height="7" viewBox="0 0 19 7"><rect x="0.5" y="0.5" width="18" height="6" fill="#f0c97a" stroke="#b89040" stroke-width="1"/></svg>
<div class="c" style="left:1037px;top:549.7px;width:88px"><span>0</span></div>
<svg style="left:1037.5px;top:558.6px" width="19" height="7" viewBox="0 0 19 7"><rect x="0.5" y="0.5" width="18" height="6" fill="#f0c97a" stroke="#b89040" stroke-width="1"/></svg>
<div class="c" style="left:579px;top:578.5px;width:50px"><span>2002</span></div>
<div class="c" style="left:630px;top:578.5px;width:87px"><span><i>中鋼</i></span></div>
<div class="c" style="left:718px;top:578.5px;width:75px"><span>-2.11</span></div>
<svg style="left:718.5px;top:585.0px" width="20" height="12" viewBox="0 0 20 12"><polygon points="0.5,0.5 19.5,0.5 10.7,11.3 9.3,11.3" fill="#dc5434" stroke="#a63a20" stroke-width="1"/></svg>
<div class="l" style="left:794px;top:578.5px;width:157px"><span><i>傳產</i>-<i>鋼鐵</i></span></div>
<div class="c" style="left:952px;top:578.5px;width:84px"><span>-0.2</span></div>
<svg style="left:952.5px;top:585.0px" width="20" height="12" viewBox="0 0 20 12"><polygon points="0.5,0.5 19.5,0.5 10.7,11.3 9.3,11.3" fill="#dc5434" stroke="#a63a20" stroke-width="1"/></svg>
<div class="c" style="left:1037px;top:578.5px;width:88px"><span>0</span></div>
<svg style="left:1037.5px;top:587.5px" width="19" height="7" viewBox="0 0 19 7"><rect x="0.5" y="0.5" width="18" height="6" fill="#f0c97a" stroke="#b89040" stroke-width="1"/></svg>
<div class="c" style="left:579px;top:607.4px;width:50px"><span>2105</span></div>
<div class="c" style="left:630px;top:607.4px;width:87px"><span><i>正新</i></span></div>
<div class="c" style="left:718px;top:607.4px;width:75px"><span>-0.48</span></div>
<svg style="left:718.5px;top:613.9px" width="20" height="12" viewBox="0 0 20 12"><polygon points="0.5,0.5 19.5,0.5 10.7,11.3 9.3,11.3" fill="#dc5434" stroke="#a63a20" stroke-width="1"/></svg>
<div class="l" style="left:794px;top:607.4px;width:157px"><span><i>傳產</i>-<i>橡膠</i></span></div>
<div class="c" style="left:952px;top:607.4px;width:84px"><span>-0.1</span></div>
<svg style="left:952.5px;top:613.9px" width="20" height="12" viewBox="0 0 20 12"><polygon points="0.5,0.5 19.5,0.5 10.7,11.3 9.3,11.3" fill="#dc5434" stroke="#a63a20" stroke-width="1"/></svg>
<div class="c" style="left:1037px;top:607.4px;width:88px"><span>0</span></div>
<svg style="left:1037.5px;top:616.4px" width="19" height="7" viewBox="0 0 19 7"><rect x="0.5" y="0.5" width="18" height="6" fill="#f0c97a" stroke="#b89040" stroke-width="1"/></svg>
<div class="c" style="left:579px;top:636.3px;width:50px"><span>1590</span></div>
<div class="c" style="left:630px;top:636.3px;width:87px"><span><i>亞德客</i>-KY</span></div>
<div class="c" style="left:718px;top:636.3px;width:75px"><span>-2.89</span></div>
<svg style="left:718.5px;top:642.8px" width="20" height="12" viewBox="0 0 20 12"><polygon points="0.5,0.5 19.5,0.5 10.7,11.3 9.3,11.3" fill="#dc5434" stroke="#a63a20" stroke-width="1"/></svg>
<div class="l" style="left:794px;top:636.3px;width:157px"><span><i>傳產</i>-<i>電機</i></span></div>
<div class="c" style="left:952px;top:636.3px;width:84px"><span>0.2</span></div>
<svg style="left:952.5px;top:642.8px" width="20" height="12" viewBox="0 0 20 12"><polygon points="0.5,11.5 19.5,11.5 10.7,0.7 9.3,0.7" fill="#5aa08c" stroke="#3d7f68" stroke-width="1"/></svg>
<div class="c" style="left:1037px;top:636.3px;width:88px"><span>0</span></div>
<svg style="left:1037.5px;top:645.3px" width="19" height="7" viewBox="0 0 19 7"><rect x="0.5" y="0.5" width="18" height="6" fill="#f0c97a" stroke="#b89040" stroke-width="1"/></svg>
<div class="c" style="left:579px;top:665.1px;width:50px"><span>2645</span></div>
<div class="c" style="left:630px;top:665.1px;width:87px"><span><i>長榮航太</i></span></div>
<div class="c" style="left:718px;top:665.1px;width:75px"><span>-2.07</span></div>
<svg style="left:718.5px;top:671.6px" width="20" height="12" viewBox="0 0 20 12"><polygon points="0.5,0.5 19.5,0.5 10.7,11.3 9.3,11.3" fill="#dc5434" stroke="#a63a20" stroke-width="1"/></svg>
<div class="l" style="left:794px;top:665.1px;width:157px"><span><i>傳產</i>-<i>電機</i></span></div>
<div class="c" style="left:952px;top:665.1px;width:84px"><span>-0.4</span></div>
<svg style="left:952.5px;top:671.6px" width="20" height="12" viewBox="0 0 20 12"><polygon points="0.5,0.5 19.5,0.5 10.7,11.3 9.3,11.3" fill="#dc5434" stroke="#a63a20" stroke-width="1"/></svg>
<div class="c" style="left:1037px;top:665.1px;width:88px"><span>0</span></div>
<svg style="left:1037.5px;top:674.1px" width="19" height="7" viewBox="0 0 19 7"><rect x="0.5" y="0.5" width="18" height="6" fill="#f0c97a" stroke="#b89040" stroke-width="1"/></svg>
<div class="c" style="left:579px;top:694.0px;width:50px"><span>1529</span></div>
<div class="c" style="left:630px;top:694.0px;width:87px"><span><i>樂事綠能</i></span></div>
<div class="c" style="left:718px;top:694.0px;width:75px"><span>-4.96</span></div>
<svg style="left:718.5px;top:700.5px" width="20" height="12" viewBox="0 0 20 12"><polygon points="0.5,0.5 19.5,0.5 10.7,11.3 9.3,11.3" fill="#dc5434" stroke="#a63a20" stroke-width="1"/></svg>
<div class="l" style="left:794px;top:694.0px;width:157px"><span><i>傳產</i>-<i>電機</i></span></div>
<div class="c" style="left:952px;top:694.0px;width:84px"><span>-0.8</span></div>
<svg style="left:952.5px;top:700.5px" width="20" height="12" viewBox="0 0 20 12"><polygon points="0.5,0.5 19.5,0.5 10.7,11.3 9.3,11.3" fill="#dc5434" stroke="#a63a20" stroke-width="1"/></svg>
<div class="c" style="left:1037px;top:694.0px;width:88px"><span>0</span></div>
<svg style="left:1037.5px;top:703.0px" width="19" height="7" viewBox="0 0 19 7"><rect x="0.5" y="0.5" width="18" height="6" fill="#f0c97a" stroke="#b89040" stroke-width="1"/></svg>
<div class="c" style="left:579px;top:722.9px;width:50px"><span>1616</span></div>
<div class="c" style="left:630px;top:722.9px;width:87px"><span><i>億泰</i></span></div>
<div class="c" style="left:718px;top:722.9px;width:75px"><span>0</span></div>
<svg style="left:718.5px;top:731.9px" width="19" height="7" viewBox="0 0 19 7"><rect x="0.5" y="0.5" width="18" height="6" fill="#f0c97a" stroke="#b89040" stroke-width="1"/></svg>
<div class="l" style="left:794px;top:722.9px;width:157px"><span><i>傳產</i>-<i>電線電纜</i></span></div>
<div class="c" style="left:952px;top:722.9px;width:84px"><span>0</span></div>
<svg style="left:952.5px;top:731.9px" width="19" height="7" viewBox="0 0 19 7"><rect x="0.5" y="0.5" width="18" height="6" fill="#f0c97a" stroke="#b89040" stroke-width="1"/></svg>
<div class="c" style="left:1037px;top:722.9px;width:88px"><span>0</span></div>
<svg style="left:1037.5px;top:731.9px" width="19" height="7" viewBox="0 0 19 7"><rect x="0.5" y="0.5" width="18" height="6" fill="#f0c97a" stroke="#b89040" stroke-width="1"/></svg>
<div class="c" style="left:579px;top:751.8px;width:50px"><span>1326</span></div>
<div class="c" style="left:630px;top:751.8px;width:87px"><span><i>台化</i></span></div>
<div class="c" style="left:718px;top:751.8px;width:75px"><span>-3.99</span></div>
<svg style="left:718.5px;top:758.2px" width="20" height="12" viewBox="0 0 20 12"><polygon points="0.5,0.5 19.5,0.5 10.7,11.3 9.3,11.3" fill="#dc5434" stroke="#a63a20" stroke-width="1"/></svg>
<div class="l" style="left:794px;top:751.8px;width:157px"><span><i>傳產</i>-<i>塑膠</i></span></div>
<div class="c" style="left:952px;top:751.8px;width:84px"><span>-0.2</span></div>
<svg style="left:952.5px;top:758.2px" width="20" height="12" viewBox="0 0 20 12"><polygon points="0.5,0.5 19.5,0.5 10.7,11.3 9.3,11.3" fill="#dc5434" stroke="#a63a20" stroke-width="1"/></svg>
<div class="c" style="left:1037px;top:751.8px;width:88px"><span>0</span></div>
<svg style="left:1037.5px;top:760.7px" width="19" height="7" viewBox="0 0 19 7"><rect x="0.5" y="0.5" width="18" height="6" fill="#f0c97a" stroke="#b89040" stroke-width="1"/></svg>
<div class="c" style="left:579px;top:780.6px;width:50px"><span>1301</span></div>
<div class="c" style="left:630px;top:780.6px;width:87px"><span><i>台塑</i></span></div>
<div class="c" style="left:718px;top:780.6px;width:75px"><span>-1.83</span></div>
<svg style="left:718.5px;top:787.1px" width="20" height="12" viewBox="0 0 20 12"><polygon points="0.5,0.5 19.5,0.5 10.7,11.3 9.3,11.3" fill="#dc5434" stroke="#a63a20" stroke-width="1"/></svg>
<div class="l" style="left:794px;top:780.6px;width:157px"><span><i>傳產</i>-<i>塑膠</i></span></div>
<div class="c" style="left:952px;top:780.6px;width:84px"><span>-0.5</span></div>
<svg style="left:952.5px;top:787.1px" width="20" height="12" viewBox="0 0 20 12"><polygon points="0.5,0.5 19.5,0.5 10.7,11.3 9.3,11.3" fill="#dc5434" stroke="#a63a20" stroke-width="1"/></svg>
<div class="c" style="left:1037px;top:780.6px;width:88px"><span>0</span></div>
<svg style="left:1037.5px;top:789.6px" width="19" height="7" viewBox="0 0 19 7"><rect x="0.5" y="0.5" width="18" height="6" fill="#f0c97a" stroke="#b89040" stroke-width="1"/></svg>
<div class="c" style="left:579px;top:809.5px;width:50px"><span>1312</span></div>
<div class="c" style="left:630px;top:809.5px;width:87px"><span><i>國喬</i></span></div>
<div class="c" style="left:718px;top:809.5px;width:75px"><span>-1.68</span></div>
<svg style="left:718.5px;top:816.0px" width="20" height="12" viewBox="0 0 20 12"><polygon points="0.5,0.5 19.5,0.5 10.7,11.3 9.3,11.3" fill="#dc5434" stroke="#a63a20" stroke-width="1"/></svg>
<div class="l" style="left:794px;top:809.5px;width:157px"><span><i>傳產</i>-<i>塑膠</i></span></div>
<div class="c" style="left:952px;top:809.5px;width:84px"><span>0.1</span></div>
<svg style="left:952.5px;top:816.0px" width="20" height="12" viewBox="0 0 20 12"><polygon points="0.5,11.5 19.5,11.5 10.7,0.7 9.3,0.7" fill="#5aa08c" stroke="#3d7f68" stroke-width="1"/></svg>
<div class="c" style="left:1037px;top:809.5px;width:88px"><span>0</span></div>
<svg style="left:1037.5px;top:818.5px" width="19" height="7" viewBox="0 0 19 7"><rect x="0.5" y="0.5" width="18" height="6" fill="#f0c97a" stroke="#b89040" stroke-width="1"/></svg>
<div class="c" style="left:579px;top:838.4px;width:50px"><span>2637</span></div>
<div class="c" style="left:630px;top:838.4px;width:87px"><span><i>慧洋</i>-KY</span></div>
<div class="c" style="left:718px;top:838.4px;width:75px"><span>0.3</span></div>
<svg style="left:718.5px;top:844.8px" width="20" height="12" viewBox="0 0 20 12"><polygon points="0.5,11.5 19.5,11.5 10.7,0.7 9.3,0.7" fill="#5aa08c" stroke="#3d7f68" stroke-width="1"/></svg>
<div class="l" style="left:794px;top:838.4px;width:157px"><span><i>傳產</i>-<i>航運</i></span></div>
<div class="c" style="left:952px;top:838.4px;width:84px"><span>-0.2</span></div>
<svg style="left:952.5px;top:844.8px" width="20" height="12" viewBox="0 0 20 12"><polygon points="0.5,0.5 19.5,0.5 10.7,11.3 9.3,11.3" fill="#dc5434" stroke="#a63a20" stroke-width="1"/></svg>
<div class="c" style="left:1037px;top:838.4px;width:88px"><span>0</span></div>
<svg style="left:1037.5px;top:847.3px" width="19" height="7" viewBox="0 0 19 7"><rect x="0.5" y="0.5" width="18" height="6" fill="#f0c97a" stroke="#b89040" stroke-width="1"/></svg>
<div class="c" style="left:579px;top:867.2px;width:50px"><span>2607</span></div>
<div class="c" style="left:630px;top:867.2px;width:87px"><span><i>榮運</i></span></div>
<div class="c" style="left:718px;top:867.2px;width:75px"><span>0.7</span></div>
<svg style="left:718.5px;top:873.7px" width="20" height="12" viewBox="0 0 20 12"><polygon points="0.5,11.5 19.5,11.5 10.7,0.7 9.3,0.7" fill="#5aa08c" stroke="#3d7f68" stroke-width="1"/></svg>
<div class="l" style="left:794px;top:867.2px;width:157px"><span><i>傳產</i>-<i>航運</i></span></div>
<div class="c" style="left:952px;top:867.2px;width:84px"><span>-0.1</span></div>
<svg style="left:952.5px;top:873.7px" width="20" height="12" viewBox="0 0 20 12"><polygon points="0.5,0.5 19.5,0.5 10.7,11.3 9.3,11.3" fill="#dc5434" stroke="#a63a20" stroke-width="1"/></svg>
<div class="c" style="left:1037px;top:867.2px;width:88px"><span>-0.1</span></div>
<svg style="left:1037.5px;top:873.7px" width="20" height="12" viewBox="0 0 20 12"><polygon points="0.5,0.5 19.5,0.5 10.7,11.3 9.3,11.3" fill="#dc5434" stroke="#a63a20" stroke-width="1"/></svg>
<div class="c" style="left:579px;top:896.1px;width:50px"><span>1909</span></div>
<div class="c" style="left:630px;top:896.1px;width:87px"><span><i>榮成</i></span></div>
<div class="c" style="left:718px;top:896.1px;width:75px"><span>-1.37</span></div>
<svg style="left:718.5px;top:902.6px" width="20" height="12" viewBox="0 0 20 12"><polygon points="0.5,0.5 19.5,0.5 10.7,11.3 9.3,11.3" fill="#dc5434" stroke="#a63a20" stroke-width="1"/></svg>
<div class="l" style="left:794px;top:896.1px;width:157px"><span><i>傳產</i>-<i>紙業</i></span></div>
<div class="c" style="left:952px;top:896.1px;width:84px"><span>0</span></div>
<svg style="left:952.5px;top:905.1px" width="19" height="7" viewBox="0 0 19 7"><rect x="0.5" y="0.5" width="18" height="6" fill="#f0c97a" stroke="#b89040" stroke-width="1"/></svg>
<div class="c" style="left:1037px;top:896.1px;width:88px"><span>0</span></div>
<svg style="left:1037.5px;top:905.1px" width="19" height="7" viewBox="0 0 19 7"><rect x="0.5" y="0.5" width="18" height="6" fill="#f0c97a" stroke="#b89040" stroke-width="1"/></svg>
<div class="c" style="left:579px;top:925.0px;width:50px"><span>9941</span></div>
<div class="c" style="left:630px;top:925.0px;width:87px"><span><i>裕融</i></span></div>
<div class="c" style="left:718px;top:925.0px;width:75px"><span>-0.97</span></div>
<svg style="left:718.5px;top:931.5px" width="20" height="12" viewBox="0 0 20 12"><polygon points="0.5,0.5 19.5,0.5 10.7,11.3 9.3,11.3" fill="#dc5434" stroke="#a63a20" stroke-width="1"/></svg>
<div class="l" style="left:794px;top:925.0px;width:157px"><span><i>傳產</i>-<i>其他</i></span></div>
<div class="c" style="left:952px;top:925.0px;width:84px"><span>0</span></div>
<svg style="left:952.5px;top:934.0px" width="19" height="7" viewBox="0 0 19 7"><rect x="0.5" y="0.5" width="18" height="6" fill="#f0c97a" stroke="#b89040" stroke-width="1"/></svg>
<div class="c" style="left:1037px;top:925.0px;width:88px"><span>0</span></div>
<svg style="left:1037.5px;top:934.0px" width="19" height="7" viewBox="0 0 19 7"><rect x="0.5" y="0.5" width="18" height="6" fill="#f0c97a" stroke="#b89040" stroke-width="1"/></svg>
<div class="c" style="left:579px;top:953.8px;width:50px"><span>2207</span></div>
<div class="c" style="left:630px;top:953.8px;width:87px"><span><i>和泰車</i></span></div>
<div class="c" style="left:718px;top:953.8px;width:75px"><span>-0.83</span></div>
<svg style="left:718.5px;top:960.3px" width="20" height="12" viewBox="0 0 20 12"><polygon points="0.5,0.5 19.5,0.5 10.7,11.3 9.3,11.3" fill="#dc5434" stroke="#a63a20" stroke-width="1"/></svg>
<div class="l" style="left:794px;top:953.8px;width:157px"><span><i>傳產</i>-<i>汽車</i></span></div>
<div class="c" style="left:952px;top:953.8px;width:84px"><span>0</span></div>
<svg style="left:952.5px;top:962.8px" width="19" height="7" viewBox="0 0 19 7"><rect x="0.5" y="0.5" width="18" height="6" fill="#f0c97a" stroke="#b89040" stroke-width="1"/></svg>
<div class="c" style="left:1037px;top:953.8px;width:88px"><span>0</span></div>
<svg style="left:1037.5px;top:962.8px" width="19" height="7" viewBox="0 0 19 7"><rect x="0.5" y="0.5" width="18" height="6" fill="#f0c97a" stroke="#b89040" stroke-width="1"/></svg>
<div class="c" style="left:579px;top:982.7px;width:50px"><span>2201</span></div>
<div class="c" style="left:630px;top:982.7px;width:87px"><span><i>裕隆</i></span></div>
<div class="c" style="left:718px;top:982.7px;width:75px"><span>-0.75</span></div>
<svg style="left:718.5px;top:989.2px" width="20" height="12" viewBox="0 0 20 12"><polygon points="0.5,0.5 19.5,0.5 10.7,11.3 9.3,11.3" fill="#dc5434" stroke="#a63a20" stroke-width="1"/></svg>
<div class="l" style="left:794px;top:982.7px;width:157px"><span><i>傳產</i>-<i>汽車</i></span></div>
<div class="c" style="left:952px;top:982.7px;width:84px"><span>-0.2</span></div>
<svg style="left:952.5px;top:989.2px" width="20" height="12" viewBox="0 0 20 12"><polygon points="0.5,0.5 19.5,0.5 10.7,11.3 9.3,11.3" fill="#dc5434" stroke="#a63a20" stroke-width="1"/></svg>
<div class="c" style="left:1037px;top:982.7px;width:88px"><span>0</span></div>
<svg style="left:1037.5px;top:991.7px" width="19" height="7" viewBox="0 0 19 7"><rect x="0.5" y="0.5" width="18" height="6" fill="#f0c97a" stroke="#b89040" stroke-width="1"/></svg>
<div class="c" style="left:579px;top:1011.6px;width:50px"><span>2915</span></div>
<div class="c" style="left:630px;top:1011.6px;width:87px"><span><i>潤泰全</i></span></div>
<div class="c" style="left:718px;top:1011.6px;width:75px"><span>-0.37</span></div>
<svg style="left:718.5px;top:1018.1px" width="20" height="12" viewBox="0 0 20 12"><polygon points="0.5,0.5 19.5,0.5 10.7,11.3 9.3,11.3" fill="#dc5434" stroke="#a63a20" stroke-width="1"/></svg>
<div class="l" style="left:794px;top:1011.6px;width:157px"><span><i>傳產</i>-<i>百貨</i></span></div>
<div class="c" style="left:952px;top:1011.6px;width:84px"><span>0</span></div>
<svg style="left:952.5px;top:1020.6px" width="19" height="7" viewBox="0 0 19 7"><rect x="0.5" y="0.5" width="18" height="6" fill="#f0c97a" stroke="#b89040" stroke-width="1"/></svg>
<div class="c" style="left:1037px;top:1011.6px;width:88px"><span>-0.1</span></div>
<svg style="left:1037.5px;top:1018.1px" width="20" height="12" viewBox="0 0 20 12"><polygon points="0.5,0.5 19.5,0.5 10.7,11.3 9.3,11.3" fill="#dc5434" stroke="#a63a20" stroke-width="1"/></svg>
<div class="c" style="left:579px;top:1040.5px;width:50px"><span>1711</span></div>
<div class="c" style="left:630px;top:1040.5px;width:87px"><span><i>永光</i></span></div>
<div class="c" style="left:718px;top:1040.5px;width:75px"><span>-1.09</span></div>
<svg style="left:718.5px;top:1046.9px" width="20" height="12" viewBox="0 0 20 12"><polygon points="0.5,0.5 19.5,0.5 10.7,11.3 9.3,11.3" fill="#dc5434" stroke="#a63a20" stroke-width="1"/></svg>
<div class="l" style="left:794px;top:1040.5px;width:157px"><span><i>傳產</i>-<i>化學工業</i></span></div>
<div class="c" style="left:952px;top:1040.5px;width:84px"><span>0.3</span></div>
<svg style="left:952.5px;top:1046.9px" width="20" height="12" viewBox="0 0 20 12"><polygon points="0.5,11.5 19.5,11.5 10.7,0.7 9.3,0.7" fill="#5aa08c" stroke="#3d7f68" stroke-width="1"/></svg>
<div class="c" style="left:1037px;top:1040.5px;width:88px"><span>0</span></div>
<svg style="left:1037.5px;top:1049.4px" width="19" height="7" viewBox="0 0 19 7"><rect x="0.5" y="0.5" width="18" height="6" fill="#f0c97a" stroke="#b89040" stroke-width="1"/></svg>
<div class="c" style="left:579px;top:1069.3px;width:50px"><span>2812</span></div>
<div class="c" style="left:630px;top:1069.3px;width:87px"><span><i>台中銀</i></span></div>
<div class="c" style="left:718px;top:1069.3px;width:75px"><span>-0.47</span></div>
<svg style="left:718.5px;top:1075.8px" width="20" height="12" viewBox="0 0 20 12"><polygon points="0.5,0.5 19.5,0.5 10.7,11.3 9.3,11.3" fill="#dc5434" stroke="#a63a20" stroke-width="1"/></svg>
<div class="l" style="left:794px;top:1069.3px;width:157px"><span><i>金融</i>-<i>銀行</i></span></div>
<div class="c" style="left:952px;top:1069.3px;width:84px"><span>0.2</span></div>
<svg style="left:952.5px;top:1075.8px" width="20" height="12" viewBox="0 0 20 12"><polygon points="0.5,11.5 19.5,11.5 10.7,0.7 9.3,0.7" fill="#5aa08c" stroke="#3d7f68" stroke-width="1"/></svg>
<div class="c" style="left:1037px;top:1069.3px;width:88px"><span>0</span></div>
<svg style="left:1037.5px;top:1078.3px" width="19" height="7" viewBox="0 0 19 7"><rect x="0.5" y="0.5" width="18" height="6" fill="#f0c97a" stroke="#b89040" stroke-width="1"/></svg>
<div class="c" style="left:579px;top:1098.2px;width:50px"><span>2834</span></div>
<div class="c" style="left:630px;top:1098.2px;width:87px"><span><i>臺企銀</i></span></div>
<div class="c" style="left:718px;top:1098.2px;width:75px"><span>0.32</span></div>
<svg style="left:718.5px;top:1104.7px" width="20" height="12" viewBox="0 0 20 12"><polygon points="0.5,11.5 19.5,11.5 10.7,0.7 9.3,0.7" fill="#5aa08c" stroke="#3d7f68" stroke-width="1"/></svg>
<div class="l" style="left:794px;top:1098.2px;width:157px"><span><i>金融</i>-<i>銀行</i></span></div>
<div class="c" style="left:952px;top:1098.2px;width:84px"><span>-0.1</span></div>
<svg style="left:952.5px;top:1104.7px" width="20" height="12" viewBox="0 0 20 12"><polygon points="0.5,0.5 19.5,0.5 10.7,11.3 9.3,11.3" fill="#dc5434" stroke="#a63a20" stroke-width="1"/></svg>
<div class="c" style="left:1037px;top:1098.2px;width:88px"><span>0</span></div>
<svg style="left:1037.5px;top:1107.2px" width="19" height="7" viewBox="0 0 19 7"><rect x="0.5" y="0.5" width="18" height="6" fill="#f0c97a" stroke="#b89040" stroke-width="1"/></svg>
<div class="c" style="left:579px;top:1127.1px;width:50px"><span>2801</span></div>
<div class="c" style="left:630px;top:1127.1px;width:87px"><span><i>彰銀</i></span></div>
<div class="c" style="left:718px;top:1127.1px;width:75px"><span>-0.96</span></div>
<svg style="left:718.5px;top:1133.5px" width="20" height="12" viewBox="0 0 20 12"><polygon points="0.5,0.5 19.5,0.5 10.7,11.3 9.3,11.3" fill="#dc5434" stroke="#a63a20" stroke-width="1"/></svg>
<div class="l" style="left:794px;top:1127.1px;width:157px"><span><i>金融</i>-<i>銀行</i></span></div>
<div class="c" style="left:952px;top:1127.1px;width:84px"><span>0</span></div>
<svg style="left:952.5px;top:1136.0px" width="19" height="7" viewBox="0 0 19 7"><rect x="0.5" y="0.5" width="18" height="6" fill="#f0c97a" stroke="#b89040" stroke-width="1"/></svg>
<div class="c" style="left:1037px;top:1127.1px;width:88px"><span>0</span></div>
<svg style="left:1037.5px;top:1136.0px" width="19" height="7" viewBox="0 0 19 7"><rect x="0.5" y="0.5" width="18" height="6" fill="#f0c97a" stroke="#b89040" stroke-width="1"/></svg>
<div class="c" style="left:579px;top:1155.9px;width:50px"><span>2897</span></div>
<div class="c" style="left:630px;top:1155.9px;width:87px"><span><i>王道銀行</i></span></div>
<div class="c" style="left:718px;top:1155.9px;width:75px"><span>-0.54</span></div>
<svg style="left:718.5px;top:1162.4px" width="20" height="12" viewBox="0 0 20 12"><polygon points="0.5,0.5 19.5,0.5 10.7,11.3 9.3,11.3" fill="#dc5434" stroke="#a63a20" stroke-width="1"/></svg>
<div class="l" style="left:794px;top:1155.9px;width:157px"><span><i>金融</i>-<i>銀行</i></span></div>
<div class="c" style="left:952px;top:1155.9px;width:84px"><span>0.1</span></div>
<svg style="left:952.5px;top:1162.4px" width="20" height="12" viewBox="0 0 20 12"><polygon points="0.5,11.5 19.5,11.5 10.7,0.7 9.3,0.7" fill="#5aa08c" stroke="#3d7f68" stroke-width="1"/></svg>
<div class="c" style="left:1037px;top:1155.9px;width:88px"><span>0</span></div>
<svg style="left:1037.5px;top:1164.9px" width="19" height="7" viewBox="0 0 19 7"><rect x="0.5" y="0.5" width="18" height="6" fill="#f0c97a" stroke="#b89040" stroke-width="1"/></svg>
<div class="c" style="left:579px;top:1184.8px;width:50px"><span>2851</span></div>
<div class="c" style="left:630px;top:1184.8px;width:87px"><span><i>中再保</i></span></div>
<div class="c" style="left:718px;top:1184.8px;width:75px"><span>0</span></div>
<svg style="left:718.5px;top:1193.8px" width="19" height="7" viewBox="0 0 19 7"><rect x="0.5" y="0.5" width="18" height="6" fill="#f0c97a" stroke="#b89040" stroke-width="1"/></svg>
<div class="l" style="left:794px;top:1184.8px;width:157px"><span><i>金融</i>-<i>保險</i></span></div>
<div class="c" style="left:952px;top:1184.8px;width:84px"><span>0.2</span></div>
<svg style="left:952.5px;top:1191.3px" width="20" height="12" viewBox="0 0 20 12"><polygon points="0.5,11.5 19.5,11.5 10.7,0.7 9.3,0.7" fill="#5aa08c" stroke="#3d7f68" stroke-width="1"/></svg>
<div class="c" style="left:1037px;top:1184.8px;width:88px"><span>0</span></div>
<svg style="left:1037.5px;top:1193.8px" width="19" height="7" viewBox="0 0 19 7"><rect x="0.5" y="0.5" width="18" height="6" fill="#f0c97a" stroke="#b89040" stroke-width="1"/></svg>
<div class="k" style="left:1147px;top:80px;width:1px;height:1508px"></div>
<div class="bh" style="left:1149px;top:80px;width:542px;height:31px;border-top:3px double #000;border-right:3px double #000;border-left:2px solid #000;border-bottom:1px solid #000">接近10MA</div>
<div class="hd" style="left:1149px;top:112px;width:50px;height:30px;text-align:center;letter-spacing:1px;padding-left:2px;">代號</div>
<div class="hd" style="left:1200px;top:112px;width:87px;height:30px;text-align:center;letter-spacing:4px;padding-left:4px;">名稱</div>
<div class="hd" style="left:1288px;top:112px;width:68px;height:30px;text-align:center;letter-spacing:1px;padding-left:1px;">漲幅%</div>
<div class="hd" style="left:1357px;top:112px;width:158px;height:30px;padding-left:4px;letter-spacing:3px;">產業分類</div>
<div class="hd" style="left:1516px;top:112px;width:84px;height:30px;padding-left:3px;letter-spacing:3px;font-size:14px;">外資5日買超佔股本比</div>
<div class="hd" style="left:1601px;top:112px;width:89px;height:30px;padding-left:3px;letter-spacing:3px;font-size:14px;border-right:none;"></div>
<div class="hd" style="left:1601px;top:112px;width:109px;height:30px;border:none;background:none;padding-left:4px;letter-spacing:3px;font-size:14px;">投信5日買超佔股本比</div>
<div class="body" style="left:1149px;top:143px;width:541px;height:1445px;border-left:1px solid #000;border-top:1px solid #000;border-bottom:1px solid #000"></div>
<div class="c" style="left:1149px;top:145.5px;width:50px"><span>3030</span></div>
<div class="c" style="left:1200px;top:145.5px;width:87px"><span><i>德律</i></span></div>
<div class="c" style="left:1288px;top:145.5px;width:68px"><span>-1.77</span></div>
<svg style="left:1288.5px;top:152.1px" width="20" height="12" viewBox="0 0 20 12"><polygon points="0.5,0.5 19.5,0.5 10.7,11.3 9.3,11.3" fill="#dc5434" stroke="#a63a20" stroke-width="1"/></svg>
<div class="l" style="left:1357px;top:145.5px;width:158px"><span><i>電子中游</i>-<i>儀器設備工程</i></span></div>
<div class="c" style="left:1516px;top:145.5px;width:84px"><span>0.6</span></div>
<svg style="left:1516.5px;top:152.1px" width="20" height="12" viewBox="0 0 20 12"><polygon points="0.5,11.5 19.5,11.5 10.7,0.7 9.3,0.7" fill="#5aa08c" stroke="#3d7f68" stroke-width="1"/></svg>
<div class="c" style="left:1601px;top:145.5px;width:88px"><span>-1</span></div>
<svg style="left:1601.5px;top:152.1px" width="20" height="12" viewBox="0 0 20 12"><polygon points="0.5,0.5 19.5,0.5 10.7,11.3 9.3,11.3" fill="#dc5434" stroke="#a63a20" stroke-width="1"/></svg>
<div class="c" style="left:1149px;top:174.4px;width:50px"><span>2332</span></div>
<div class="c" style="left:1200px;top:174.4px;width:87px"><span><i>友訊</i></span></div>
<div class="c" style="left:1288px;top:174.4px;width:68px"><span>-0.94</span></div>
<svg style="left:1288.5px;top:180.8px" width="20" height="12" viewBox="0 0 20 12"><polygon points="0.5,0.5 19.5,0.5 10.7,11.3 9.3,11.3" fill="#dc5434" stroke="#a63a20" stroke-width="1"/></svg>
<div class="l" style="left:1357px;top:174.4px;width:158px"><span><i>電子中游</i>-<i>網通</i></span></div>
<div class="c" style="left:1516px;top:174.4px;width:84px"><span>0.2</span></div>
<svg style="left:1516.5px;top:180.8px" width="20" height="12" viewBox="0 0 20 12"><polygon points="0.5,11.5 19.5,11.5 10.7,0.7 9.3,0.7" fill="#5aa08c" stroke="#3d7f68" stroke-width="1"/></svg>
<div class="c" style="left:1601px;top:174.4px;width:88px"><span>0</span></div>
<svg style="left:1601.5px;top:183.3px" width="19" height="7" viewBox="0 0 19 7"><rect x="0.5" y="0.5" width="18" height="6" fill="#f0c97a" stroke="#b89040" stroke-width="1"/></svg>
<div class="c" style="left:1149px;top:203.2px;width:50px"><span>4979</span></div>
<div class="c" style="left:1200px;top:203.2px;width:87px"><span><i>華星光</i></span></div>
<div class="c" style="left:1288px;top:203.2px;width:68px"><span>-2.16</span></div>
<svg style="left:1288.5px;top:209.7px" width="20" height="12" viewBox="0 0 20 12"><polygon points="0.5,0.5 19.5,0.5 10.7,11.3 9.3,11.3" fill="#dc5434" stroke="#a63a20" stroke-width="1"/></svg>
<div class="l" style="left:1357px;top:203.2px;width:158px"><span><i>電子中游</i>-<i>通訊設備</i></span></div>
<div class="c" style="left:1516px;top:203.2px;width:84px"><span>2.1</span></div>
<svg style="left:1516.5px;top:209.7px" width="20" height="12" viewBox="0 0 20 12"><polygon points="0.5,11.5 19.5,11.5 10.7,0.7 9.3,0.7" fill="#5aa08c" stroke="#3d7f68" stroke-width="1"/></svg>
<div class="c" style="left:1601px;top:203.2px;width:88px"><span>-2.7</span></div>
<svg style="left:1601.5px;top:209.7px" width="20" height="12" viewBox="0 0 20 12"><polygon points="0.5,0.5 19.5,0.5 10.7,11.3 9.3,11.3" fill="#dc5434" stroke="#a63a20" stroke-width="1"/></svg>
<div class="c" style="left:1149px;top:232.1px;width:50px"><span>4938</span></div>
<div class="c" style="left:1200px;top:232.1px;width:87px"><span><i>和碩</i></span></div>
<div class="c" style="left:1288px;top:232.1px;width:68px"><span>0</span></div>
<svg style="left:1288.5px;top:241.1px" width="19" height="7" viewBox="0 0 19 7"><rect x="0.5" y="0.5" width="18" height="6" fill="#f0c97a" stroke="#b89040" stroke-width="1"/></svg>
<div class="l" style="left:1357px;top:232.1px;width:158px"><span><i>電子中游</i>-EMS</span></div>
<div class="c" style="left:1516px;top:232.1px;width:84px"><span>-0.6</span></div>
<svg style="left:1516.5px;top:238.6px" width="20" height="12" viewBox="0 0 20 12"><polygon points="0.5,0.5 19.5,0.5 10.7,11.3 9.3,11.3" fill="#dc5434" stroke="#a63a20" stroke-width="1"/></svg>
<div class="c" style="left:1601px;top:232.1px;width:88px"><span>0.2</span></div>
<svg style="left:1601.5px;top:238.6px" width="20" height="12" viewBox="0 0 20 12"><polygon points="0.5,11.5 19.5,11.5 10.7,0.7 9.3,0.7" fill="#5aa08c" stroke="#3d7f68" stroke-width="1"/></svg>
<div class="c" style="left:1149px;top:261.0px;width:50px"><span>3045</span></div>
<div class="c" style="left:1200px;top:261.0px;width:87px"><span><i>台灣大</i></span></div>
<div class="c" style="left:1288px;top:261.0px;width:68px"><span>0</span></div>
<svg style="left:1288.5px;top:269.9px" width="19" height="7" viewBox="0 0 19 7"><rect x="0.5" y="0.5" width="18" height="6" fill="#f0c97a" stroke="#b89040" stroke-width="1"/></svg>
<div class="l" style="left:1357px;top:261.0px;width:158px"><span><i>電子下游</i>-<i>電信服務</i></span></div>
<div class="c" style="left:1516px;top:261.0px;width:84px"><span>-0.3</span></div>
<svg style="left:1516.5px;top:267.4px" width="20" height="12" viewBox="0 0 20 12"><polygon points="0.5,0.5 19.5,0.5 10.7,11.3 9.3,11.3" fill="#dc5434" stroke="#a63a20" stroke-width="1"/></svg>
<div class="c" style="left:1601px;top:261.0px;width:88px"><span>0</span></div>
<svg style="left:1601.5px;top:269.9px" width="19" height="7" viewBox="0 0 19 7"><rect x="0.5" y="0.5" width="18" height="6" fill="#f0c97a" stroke="#b89040" stroke-width="1"/></svg>
<div class="c" style="left:1149px;top:289.8px;width:50px"><span>3363</span></div>
<div class="c" style="left:1200px;top:289.8px;width:87px"><span><i>上詮</i></span></div>
<div class="c" style="left:1288px;top:289.8px;width:68px"><span>-3.41</span></div>
<svg style="left:1288.5px;top:296.3px" width="20" height="12" viewBox="0 0 20 12"><polygon points="0.5,0.5 19.5,0.5 10.7,11.3 9.3,11.3" fill="#dc5434" stroke="#a63a20" stroke-width="1"/></svg>
<div class="l" style="left:1357px;top:289.8px;width:158px"><span><i>電子上游</i>-<i>被動元件</i></span></div>
<div class="c" style="left:1516px;top:289.8px;width:84px"><span>0.5</span></div>
<svg style="left:1516.5px;top:296.3px" width="20" height="12" viewBox="0 0 20 12"><polygon points="0.5,11.5 19.5,11.5 10.7,0.7 9.3,0.7" fill="#5aa08c" stroke="#3d7f68" stroke-width="1"/></svg>
<div class="c" style="left:1601px;top:289.8px;width:88px"><span>-0.1</span></div>
<svg style="left:1601.5px;top:296.3px" width="20" height="12" viewBox="0 0 20 12"><polygon points="0.5,0.5 19.5,0.5 10.7,11.3 9.3,11.3" fill="#dc5434" stroke="#a63a20" stroke-width="1"/></svg>
<div class="c" style="left:1149px;top:318.7px;width:50px"><span>2340</span></div>
<div class="c" style="left:1200px;top:318.7px;width:87px"><span><i>台亞</i></span></div>
<div class="c" style="left:1288px;top:318.7px;width:68px"><span>-2.68</span></div>
<svg style="left:1288.5px;top:325.2px" width="20" height="12" viewBox="0 0 20 12"><polygon points="0.5,0.5 19.5,0.5 10.7,11.3 9.3,11.3" fill="#dc5434" stroke="#a63a20" stroke-width="1"/></svg>
<div class="l" style="left:1357px;top:318.7px;width:158px"><span><i>電子上游</i>-LED<i>照明產業</i></span></div>
<div class="c" style="left:1516px;top:318.7px;width:84px"><span>0.3</span></div>
<svg style="left:1516.5px;top:325.2px" width="20" height="12" viewBox="0 0 20 12"><polygon points="0.5,11.5 19.5,11.5 10.7,0.7 9.3,0.7" fill="#5aa08c" stroke="#3d7f68" stroke-width="1"/></svg>
<div class="c" style="left:1601px;top:318.7px;width:88px"><span>0</span></div>
<svg style="left:1601.5px;top:327.7px" width="19" height="7" viewBox="0 0 19 7"><rect x="0.5" y="0.5" width="18" height="6" fill="#f0c97a" stroke="#b89040" stroke-width="1"/></svg>
<div class="c" style="left:1149px;top:347.6px;width:50px"><span>6265</span></div>
<div class="c" style="left:1200px;top:347.6px;width:87px"><span><i>方土昶</i></span></div>
<div class="c" style="left:1288px;top:347.6px;width:68px"><span>-3.66</span></div>
<svg style="left:1288.5px;top:354.1px" width="20" height="12" viewBox="0 0 20 12"><polygon points="0.5,0.5 19.5,0.5 10.7,11.3 9.3,11.3" fill="#dc5434" stroke="#a63a20" stroke-width="1"/></svg>
<div class="l" style="left:1357px;top:347.6px;width:158px"><span><i>電子上游</i>-IC-<i>通路</i></span></div>
<div class="c" style="left:1516px;top:347.6px;width:84px"><span>-1.7</span></div>
<svg style="left:1516.5px;top:354.1px" width="20" height="12" viewBox="0 0 20 12"><polygon points="0.5,0.5 19.5,0.5 10.7,11.3 9.3,11.3" fill="#dc5434" stroke="#a63a20" stroke-width="1"/></svg>
<div class="c" style="left:1601px;top:347.6px;width:88px"><span>0</span></div>
<svg style="left:1601.5px;top:356.6px" width="19" height="7" viewBox="0 0 19 7"><rect x="0.5" y="0.5" width="18" height="6" fill="#f0c97a" stroke="#b89040" stroke-width="1"/></svg>
<div class="c" style="left:1149px;top:376.4px;width:50px"><span>5274</span></div>
<div class="c" style="left:1200px;top:376.4px;width:87px"><span><i>信驊</i></span></div>
<div class="c" style="left:1288px;top:376.4px;width:68px"><span>-2.13</span></div>
<svg style="left:1288.5px;top:382.9px" width="20" height="12" viewBox="0 0 20 12"><polygon points="0.5,0.5 19.5,0.5 10.7,11.3 9.3,11.3" fill="#dc5434" stroke="#a63a20" stroke-width="1"/></svg>
<div class="l" style="left:1357px;top:376.4px;width:158px"><span><i>電子上游</i>-IC-<i>設計</i></span></div>
<div class="c" style="left:1516px;top:376.4px;width:84px"><span>-0.3</span></div>
<svg style="left:1516.5px;top:382.9px" width="20" height="12" viewBox="0 0 20 12"><polygon points="0.5,0.5 19.5,0.5 10.7,11.3 9.3,11.3" fill="#dc5434" stroke="#a63a20" stroke-width="1"/></svg>
<div class="c" style="left:1601px;top:376.4px;width:88px"><span>0.3</span></div>
<svg style="left:1601.5px;top:382.9px" width="20" height="12" viewBox="0 0 20 12"><polygon points="0.5,11.5 19.5,11.5 10.7,0.7 9.3,0.7" fill="#5aa08c" stroke="#3d7f68" stroke-width="1"/></svg>
<div class="c" style="left:1149px;top:405.3px;width:50px"><span>2454</span></div>
<div class="c" style="left:1200px;top:405.3px;width:87px"><span><i>聯發科</i></span></div>
<div class="c" style="left:1288px;top:405.3px;width:68px"><span>0</span></div>
<svg style="left:1288.5px;top:414.3px" width="19" height="7" viewBox="0 0 19 7"><rect x="0.5" y="0.5" width="18" height="6" fill="#f0c97a" stroke="#b89040" stroke-width="1"/></svg>
<div class="l" style="left:1357px;top:405.3px;width:158px"><span><i>電子上游</i>-IC-<i>設計</i></span></div>
<div class="c" style="left:1516px;top:405.3px;width:84px"><span>0.1</span></div>
<svg style="left:1516.5px;top:411.8px" width="20" height="12" viewBox="0 0 20 12"><polygon points="0.5,11.5 19.5,11.5 10.7,0.7 9.3,0.7" fill="#5aa08c" stroke="#3d7f68" stroke-width="1"/></svg>
<div class="c" style="left:1601px;top:405.3px;width:88px"><span>0</span></div>
<svg style="left:1601.5px;top:414.3px" width="19" height="7" viewBox="0 0 19 7"><rect x="0.5" y="0.5" width="18" height="6" fill="#f0c97a" stroke="#b89040" stroke-width="1"/></svg>
<div class="c" style="left:1149px;top:434.2px;width:50px"><span>6223</span></div>
<div class="c" style="left:1200px;top:434.2px;width:87px"><span><i>旺矽</i></span></div>
<div class="c" style="left:1288px;top:434.2px;width:68px"><span>-3.16</span></div>
<svg style="left:1288.5px;top:440.7px" width="20" height="12" viewBox="0 0 20 12"><polygon points="0.5,0.5 19.5,0.5 10.7,11.3 9.3,11.3" fill="#dc5434" stroke="#a63a20" stroke-width="1"/></svg>
<div class="l" style="left:1357px;top:434.2px;width:158px"><span><i>電子上游</i>-IC-<i>封測</i></span></div>
<div class="c" style="left:1516px;top:434.2px;width:84px"><span>-0.1</span></div>
<svg style="left:1516.5px;top:440.7px" width="20" height="12" viewBox="0 0 20 12"><polygon points="0.5,0.5 19.5,0.5 10.7,11.3 9.3,11.3" fill="#dc5434" stroke="#a63a20" stroke-width="1"/></svg>
<div class="c" style="left:1601px;top:434.2px;width:88px"><span>0.2</span></div>
<svg style="left:1601.5px;top:440.7px" width="20" height="12" viewBox="0 0 20 12"><polygon points="0.5,11.5 19.5,11.5 10.7,0.7 9.3,0.7" fill="#5aa08c" stroke="#3d7f68" stroke-width="1"/></svg>
<div class="c" style="left:1149px;top:463.1px;width:50px"><span>2034</span></div>
<div class="c" style="left:1200px;top:463.1px;width:87px"><span><i>允強</i></span></div>
<div class="c" style="left:1288px;top:463.1px;width:68px"><span>-1.71</span></div>
<svg style="left:1288.5px;top:469.5px" width="20" height="12" viewBox="0 0 20 12"><polygon points="0.5,0.5 19.5,0.5 10.7,11.3 9.3,11.3" fill="#dc5434" stroke="#a63a20" stroke-width="1"/></svg>
<div class="l" style="left:1357px;top:463.1px;width:158px"><span><i>傳產</i>-<i>鋼鐵</i></span></div>
<div class="c" style="left:1516px;top:463.1px;width:84px"><span>0.1</span></div>
<svg style="left:1516.5px;top:469.5px" width="20" height="12" viewBox="0 0 20 12"><polygon points="0.5,11.5 19.5,11.5 10.7,0.7 9.3,0.7" fill="#5aa08c" stroke="#3d7f68" stroke-width="1"/></svg>
<div class="c" style="left:1601px;top:463.1px;width:88px"><span>0</span></div>
<svg style="left:1601.5px;top:472.0px" width="19" height="7" viewBox="0 0 19 7"><rect x="0.5" y="0.5" width="18" height="6" fill="#f0c97a" stroke="#b89040" stroke-width="1"/></svg>
<div class="c" style="left:1149px;top:491.9px;width:50px"><span>1529</span></div>
<div class="c" style="left:1200px;top:491.9px;width:87px"><span><i>樂事綠能</i></span></div>
<div class="c" style="left:1288px;top:491.9px;width:68px"><span>-4.96</span></div>
<svg style="left:1288.5px;top:498.4px" width="20" height="12" viewBox="0 0 20 12"><polygon points="0.5,0.5 19.5,0.5 10.7,11.3 9.3,11.3" fill="#dc5434" stroke="#a63a20" stroke-width="1"/></svg>
<div class="l" style="left:1357px;top:491.9px;width:158px"><span><i>傳產</i>-<i>電機</i></span></div>
<div class="c" style="left:1516px;top:491.9px;width:84px"><span>-0.8</span></div>
<svg style="left:1516.5px;top:498.4px" width="20" height="12" viewBox="0 0 20 12"><polygon points="0.5,0.5 19.5,0.5 10.7,11.3 9.3,11.3" fill="#dc5434" stroke="#a63a20" stroke-width="1"/></svg>
<div class="c" style="left:1601px;top:491.9px;width:88px"><span>0</span></div>
<svg style="left:1601.5px;top:500.9px" width="19" height="7" viewBox="0 0 19 7"><rect x="0.5" y="0.5" width="18" height="6" fill="#f0c97a" stroke="#b89040" stroke-width="1"/></svg>
<div class="c" style="left:1149px;top:520.8px;width:50px"><span>4903</span></div>
<div class="c" style="left:1200px;top:520.8px;width:87px"><span><i>聯光通</i></span></div>
<div class="c" style="left:1288px;top:520.8px;width:68px"><span>-2.41</span></div>
<svg style="left:1288.5px;top:527.3px" width="20" height="12" viewBox="0 0 20 12"><polygon points="0.5,0.5 19.5,0.5 10.7,11.3 9.3,11.3" fill="#dc5434" stroke="#a63a20" stroke-width="1"/></svg>
<div class="l" style="left:1357px;top:520.8px;width:158px"><span><i>傳產</i>-<i>電線電纜</i></span></div>
<div class="c" style="left:1516px;top:520.8px;width:84px"><span>0.4</span></div>
<svg style="left:1516.5px;top:527.3px" width="20" height="12" viewBox="0 0 20 12"><polygon points="0.5,11.5 19.5,11.5 10.7,0.7 9.3,0.7" fill="#5aa08c" stroke="#3d7f68" stroke-width="1"/></svg>
<div class="c" style="left:1601px;top:520.8px;width:88px"><span>0</span></div>
<svg style="left:1601.5px;top:529.8px" width="19" height="7" viewBox="0 0 19 7"><rect x="0.5" y="0.5" width="18" height="6" fill="#f0c97a" stroke="#b89040" stroke-width="1"/></svg>
<div class="c" style="left:1149px;top:549.7px;width:50px"><span>1608</span></div>
<div class="c" style="left:1200px;top:549.7px;width:87px"><span><i>華榮</i></span></div>
<div class="c" style="left:1288px;top:549.7px;width:68px"><span>-2.64</span></div>
<svg style="left:1288.5px;top:556.1px" width="20" height="12" viewBox="0 0 20 12"><polygon points="0.5,0.5 19.5,0.5 10.7,11.3 9.3,11.3" fill="#dc5434" stroke="#a63a20" stroke-width="1"/></svg>
<div class="l" style="left:1357px;top:549.7px;width:158px"><span><i>傳產</i>-<i>電線電纜</i></span></div>
<div class="c" style="left:1516px;top:549.7px;width:84px"><span>1</span></div>
<svg style="left:1516.5px;top:556.1px" width="20" height="12" viewBox="0 0 20 12"><polygon points="0.5,11.5 19.5,11.5 10.7,0.7 9.3,0.7" fill="#5aa08c" stroke="#3d7f68" stroke-width="1"/></svg>
<div class="c" style="left:1601px;top:549.7px;width:88px"><span>0</span></div>
<svg style="left:1601.5px;top:558.6px" width="19" height="7" viewBox="0 0 19 7"><rect x="0.5" y="0.5" width="18" height="6" fill="#f0c97a" stroke="#b89040" stroke-width="1"/></svg>
<div class="c" style="left:1149px;top:578.5px;width:50px"><span>6446</span></div>
<div class="c" style="left:1200px;top:578.5px;width:87px"><span><i>藥華藥</i></span></div>
<div class="c" style="left:1288px;top:578.5px;width:68px"><span>0</span></div>
<svg style="left:1288.5px;top:587.5px" width="19" height="7" viewBox="0 0 19 7"><rect x="0.5" y="0.5" width="18" height="6" fill="#f0c97a" stroke="#b89040" stroke-width="1"/></svg>
<div class="l" style="left:1357px;top:578.5px;width:158px"><span><i>傳產</i>-<i>生技</i></span></div>
<div class="c" style="left:1516px;top:578.5px;width:84px"><span>0.1</span></div>
<svg style="left:1516.5px;top:585.0px" width="20" height="12" viewBox="0 0 20 12"><polygon points="0.5,11.5 19.5,11.5 10.7,0.7 9.3,0.7" fill="#5aa08c" stroke="#3d7f68" stroke-width="1"/></svg>
<div class="c" style="left:1601px;top:578.5px;width:88px"><span>0</span></div>
<svg style="left:1601.5px;top:587.5px" width="19" height="7" viewBox="0 0 19 7"><rect x="0.5" y="0.5" width="18" height="6" fill="#f0c97a" stroke="#b89040" stroke-width="1"/></svg>
<div class="c" style="left:1149px;top:607.4px;width:50px"><span>6163</span></div>
<div class="c" style="left:1200px;top:607.4px;width:87px"><span><i>華電網</i></span></div>
<div class="c" style="left:1288px;top:607.4px;width:68px"><span>-6.08</span></div>
<svg style="left:1288.5px;top:613.9px" width="20" height="12" viewBox="0 0 20 12"><polygon points="0.5,0.5 19.5,0.5 10.7,11.3 9.3,11.3" fill="#dc5434" stroke="#a63a20" stroke-width="1"/></svg>
<div class="l" style="left:1357px;top:607.4px;width:158px"><span><i>軟體</i>-<i>系統整合</i></span></div>
<div class="c" style="left:1516px;top:607.4px;width:84px"><span>-0.2</span></div>
<svg style="left:1516.5px;top:613.9px" width="20" height="12" viewBox="0 0 20 12"><polygon points="0.5,0.5 19.5,0.5 10.7,11.3 9.3,11.3" fill="#dc5434" stroke="#a63a20" stroke-width="1"/></svg>
<div class="c" style="left:1601px;top:607.4px;width:88px"><span>0</span></div>
<svg style="left:1601.5px;top:616.4px" width="19" height="7" viewBox="0 0 19 7"><rect x="0.5" y="0.5" width="18" height="6" fill="#f0c97a" stroke="#b89040" stroke-width="1"/></svg>
<div class="c" style="left:1149px;top:636.3px;width:50px"><span>2801</span></div>
<div class="c" style="left:1200px;top:636.3px;width:87px"><span><i>彰銀</i></span></div>
<div class="c" style="left:1288px;top:636.3px;width:68px"><span>-0.96</span></div>
<svg style="left:1288.5px;top:642.8px" width="20" height="12" viewBox="0 0 20 12"><polygon points="0.5,0.5 19.5,0.5 10.7,11.3 9.3,11.3" fill="#dc5434" stroke="#a63a20" stroke-width="1"/></svg>
<div class="l" style="left:1357px;top:636.3px;width:158px"><span><i>金融</i>-<i>銀行</i></span></div>
<div class="c" style="left:1516px;top:636.3px;width:84px"><span>0</span></div>
<svg style="left:1516.5px;top:645.3px" width="19" height="7" viewBox="0 0 19 7"><rect x="0.5" y="0.5" width="18" height="6" fill="#f0c97a" stroke="#b89040" stroke-width="1"/></svg>
<div class="c" style="left:1601px;top:636.3px;width:88px"><span>0</span></div>
<svg style="left:1601.5px;top:645.3px" width="19" height="7" viewBox="0 0 19 7"><rect x="0.5" y="0.5" width="18" height="6" fill="#f0c97a" stroke="#b89040" stroke-width="1"/></svg>
<div class="c" style="left:1149px;top:665.1px;width:50px"><span>2897</span></div>
<div class="c" style="left:1200px;top:665.1px;width:87px"><span><i>王道銀行</i></span></div>
<div class="c" style="left:1288px;top:665.1px;width:68px"><span>-0.54</span></div>
<svg style="left:1288.5px;top:671.6px" width="20" height="12" viewBox="0 0 20 12"><polygon points="0.5,0.5 19.5,0.5 10.7,11.3 9.3,11.3" fill="#dc5434" stroke="#a63a20" stroke-width="1"/></svg>
<div class="l" style="left:1357px;top:665.1px;width:158px"><span><i>金融</i>-<i>銀行</i></span></div>
<div class="c" style="left:1516px;top:665.1px;width:84px"><span>0.1</span></div>
<svg style="left:1516.5px;top:671.6px" width="20" height="12" viewBox="0 0 20 12"><polygon points="0.5,11.5 19.5,11.5 10.7,0.7 9.3,0.7" fill="#5aa08c" stroke="#3d7f68" stroke-width="1"/></svg>
<div class="c" style="left:1601px;top:665.1px;width:88px"><span>0</span></div>
<svg style="left:1601.5px;top:674.1px" width="19" height="7" viewBox="0 0 19 7"><rect x="0.5" y="0.5" width="18" height="6" fill="#f0c97a" stroke="#b89040" stroke-width="1"/></svg>
<div class="k" style="left:1710px;top:80px;width:1px;height:1508px"></div>
<div class="bh" style="left:1712px;top:80px;width:606px;height:31px;border-top:3px double #000;border-right:3px double #000;border-left:2px solid #000;border-bottom:1px solid #000">接近20MA</div>
<div class="hd" style="left:1712px;top:112px;width:50px;height:30px;text-align:center;letter-spacing:1px;padding-left:2px;">代號</div>
<div class="hd" style="left:1763px;top:112px;width:102px;height:30px;text-align:center;letter-spacing:4px;padding-left:4px;">名稱</div>
<div class="hd" style="left:1866px;top:112px;width:75px;height:30px;text-align:center;letter-spacing:1px;padding-left:1px;">漲幅%</div>
<div class="hd" style="left:1942px;top:112px;width:201px;height:30px;padding-left:4px;letter-spacing:3px;">產業分類</div>
<div class="hd" style="left:2144px;top:112px;width:84px;height:30px;padding-left:3px;letter-spacing:3px;font-size:14px;">外資5日買超佔股本比</div>
<div class="hd" style="left:2229px;top:112px;width:88px;height:30px;padding-left:3px;letter-spacing:3px;font-size:14px;border-right:none;"></div>
<div class="hd" style="left:2229px;top:112px;width:109px;height:30px;border:none;background:none;padding-left:4px;letter-spacing:3px;font-size:14px;">投信5日買超佔股本比</div>
<div class="body" style="left:1712px;top:143px;width:605px;height:1445px;border-left:1px solid #000;border-top:1px solid #000;border-bottom:1px solid #000"></div>
<div class="c" style="left:1712px;top:145.5px;width:50px"><span>2368</span></div>
<div class="c" style="left:1763px;top:145.5px;width:102px"><span><i>金像電</i></span></div>
<div class="c" style="left:1866px;top:145.5px;width:75px"><span>-1.49</span></div>
<svg style="left:1866.5px;top:152.1px" width="20" height="12" viewBox="0 0 20 12"><polygon points="0.5,0.5 19.5,0.5 10.7,11.3 9.3,11.3" fill="#dc5434" stroke="#a63a20" stroke-width="1"/></svg>
<div class="l" style="left:1942px;top:145.5px;width:201px"><span><i>電子上游</i>-PCB-<i>製造</i></span></div>
<div class="c" style="left:2144px;top:145.5px;width:84px"><span>-0.4</span></div>
<svg style="left:2144.5px;top:152.1px" width="20" height="12" viewBox="0 0 20 12"><polygon points="0.5,0.5 19.5,0.5 10.7,11.3 9.3,11.3" fill="#dc5434" stroke="#a63a20" stroke-width="1"/></svg>
<div class="c" style="left:2229px;top:145.5px;width:87px"><span>0.3</span></div>
<svg style="left:2229.5px;top:152.1px" width="20" height="12" viewBox="0 0 20 12"><polygon points="0.5,11.5 19.5,11.5 10.7,0.7 9.3,0.7" fill="#5aa08c" stroke="#3d7f68" stroke-width="1"/></svg>
<div class="c" style="left:1712px;top:174.4px;width:50px"><span>6770</span></div>
<div class="c" style="left:1763px;top:174.4px;width:102px"><span><i>力積電</i></span></div>
<div class="c" style="left:1866px;top:174.4px;width:75px"><span>-3.29</span></div>
<svg style="left:1866.5px;top:180.8px" width="20" height="12" viewBox="0 0 20 12"><polygon points="0.5,0.5 19.5,0.5 10.7,11.3 9.3,11.3" fill="#dc5434" stroke="#a63a20" stroke-width="1"/></svg>
<div class="l" style="left:1942px;top:174.4px;width:201px"><span><i>電子上游</i>-IC-<i>代工</i></span></div>
<div class="c" style="left:2144px;top:174.4px;width:84px"><span>-0.2</span></div>
<svg style="left:2144.5px;top:180.8px" width="20" height="12" viewBox="0 0 20 12"><polygon points="0.5,0.5 19.5,0.5 10.7,11.3 9.3,11.3" fill="#dc5434" stroke="#a63a20" stroke-width="1"/></svg>
<div class="c" style="left:2229px;top:174.4px;width:87px"><span>0.1</span></div>
<svg style="left:2229.5px;top:180.8px" width="20" height="12" viewBox="0 0 20 12"><polygon points="0.5,11.5 19.5,11.5 10.7,0.7 9.3,0.7" fill="#5aa08c" stroke="#3d7f68" stroke-width="1"/></svg>
<div class="c" style="left:1712px;top:203.2px;width:50px"><span>3450</span></div>
<div class="c" style="left:1763px;top:203.2px;width:102px"><span><i>聯鈞</i></span></div>
<div class="c" style="left:1866px;top:203.2px;width:75px"><span>-3.84</span></div>
<svg style="left:1866.5px;top:209.7px" width="20" height="12" viewBox="0 0 20 12"><polygon points="0.5,0.5 19.5,0.5 10.7,11.3 9.3,11.3" fill="#dc5434" stroke="#a63a20" stroke-width="1"/></svg>
<div class="l" style="left:1942px;top:203.2px;width:201px"><span><i>電子上游</i>-IC-<i>封測</i></span></div>
<div class="c" style="left:2144px;top:203.2px;width:84px"><span>0.2</span></div>
<svg style="left:2144.5px;top:209.7px" width="20" height="12" viewBox="0 0 20 12"><polygon points="0.5,11.5 19.5,11.5 10.7,0.7 9.3,0.7" fill="#5aa08c" stroke="#3d7f68" stroke-width="1"/></svg>
<div class="c" style="left:2229px;top:203.2px;width:87px"><span>-1.1</span></div>
<svg style="left:2229.5px;top:209.7px" width="20" height="12" viewBox="0 0 20 12"><polygon points="0.5,0.5 19.5,0.5 10.7,11.3 9.3,11.3" fill="#dc5434" stroke="#a63a20" stroke-width="1"/></svg>
<div class="c" style="left:1712px;top:232.1px;width:50px"><span>8043</span></div>
<div class="c" style="left:1763px;top:232.1px;width:102px"><span><i>蜜望實</i></span></div>
<div class="c" style="left:1866px;top:232.1px;width:75px"><span>-2.04</span></div>
<svg style="left:1866.5px;top:238.6px" width="20" height="12" viewBox="0 0 20 12"><polygon points="0.5,0.5 19.5,0.5 10.7,11.3 9.3,11.3" fill="#dc5434" stroke="#a63a20" stroke-width="1"/></svg>
<div class="l" style="left:1942px;top:232.1px;width:201px"><span><i>電子上游</i>-<i>被動元件</i></span></div>
<div class="c" style="left:2144px;top:232.1px;width:84px"><span>-3.4</span></div>
<svg style="left:2144.5px;top:238.6px" width="20" height="12" viewBox="0 0 20 12"><polygon points="0.5,0.5 19.5,0.5 10.7,11.3 9.3,11.3" fill="#dc5434" stroke="#a63a20" stroke-width="1"/></svg>
<div class="c" style="left:2229px;top:232.1px;width:87px"><span>0</span></div>
<svg style="left:2229.5px;top:241.1px" width="19" height="7" viewBox="0 0 19 7"><rect x="0.5" y="0.5" width="18" height="6" fill="#f0c97a" stroke="#b89040" stroke-width="1"/></svg>
<div class="c" style="left:1712px;top:261.0px;width:50px"><span>2886</span></div>
<div class="c" style="left:1763px;top:261.0px;width:102px"><span><i>兆豐金</i></span></div>
<div class="c" style="left:1866px;top:261.0px;width:75px"><span>-2.65</span></div>
<svg style="left:1866.5px;top:267.4px" width="20" height="12" viewBox="0 0 20 12"><polygon points="0.5,0.5 19.5,0.5 10.7,11.3 9.3,11.3" fill="#dc5434" stroke="#a63a20" stroke-width="1"/></svg>
<div class="l" style="left:1942px;top:261.0px;width:201px"><span><i>金融</i>-<i>金控</i></span></div>
<div class="c" style="left:2144px;top:261.0px;width:84px"><span>0</span></div>
<svg style="left:2144.5px;top:269.9px" width="19" height="7" viewBox="0 0 19 7"><rect x="0.5" y="0.5" width="18" height="6" fill="#f0c97a" stroke="#b89040" stroke-width="1"/></svg>
<div class="c" style="left:2229px;top:261.0px;width:87px"><span>0</span></div>
<svg style="left:2229.5px;top:269.9px" width="19" height="7" viewBox="0 0 19 7"><rect x="0.5" y="0.5" width="18" height="6" fill="#f0c97a" stroke="#b89040" stroke-width="1"/></svg>
<div class="c" style="left:1712px;top:289.8px;width:50px"><span>2377</span></div>
<div class="c" style="left:1763px;top:289.8px;width:102px"><span><i>微星</i></span></div>
<div class="c" style="left:1866px;top:289.8px;width:75px"><span>1.98</span></div>
<svg style="left:1866.5px;top:296.3px" width="20" height="12" viewBox="0 0 20 12"><polygon points="0.5,11.5 19.5,11.5 10.7,0.7 9.3,0.7" fill="#5aa08c" stroke="#3d7f68" stroke-width="1"/></svg>
<div class="l" style="left:1942px;top:289.8px;width:201px"><span><i>電子中游</i>-<i>主機板</i></span></div>
<div class="c" style="left:2144px;top:289.8px;width:84px"><span>-0.4</span></div>
<svg style="left:2144.5px;top:296.3px" width="20" height="12" viewBox="0 0 20 12"><polygon points="0.5,0.5 19.5,0.5 10.7,11.3 9.3,11.3" fill="#dc5434" stroke="#a63a20" stroke-width="1"/></svg>
<div class="c" style="left:2229px;top:289.8px;width:87px"><span>0.2</span></div>
<svg style="left:2229.5px;top:296.3px" width="20" height="12" viewBox="0 0 20 12"><polygon points="0.5,11.5 19.5,11.5 10.7,0.7 9.3,0.7" fill="#5aa08c" stroke="#3d7f68" stroke-width="1"/></svg>
<div class="c" style="left:1712px;top:318.7px;width:50px"><span>6257</span></div>
<div class="c" style="left:1763px;top:318.7px;width:102px"><span><i>矽格</i></span></div>
<div class="c" style="left:1866px;top:318.7px;width:75px"><span>-1.63</span></div>
<svg style="left:1866.5px;top:325.2px" width="20" height="12" viewBox="0 0 20 12"><polygon points="0.5,0.5 19.5,0.5 10.7,11.3 9.3,11.3" fill="#dc5434" stroke="#a63a20" stroke-width="1"/></svg>
<div class="l" style="left:1942px;top:318.7px;width:201px"><span><i>電子上游</i>-IC-<i>封測</i></span></div>
<div class="c" style="left:2144px;top:318.7px;width:84px"><span>-1.4</span></div>
<svg style="left:2144.5px;top:325.2px" width="20" height="12" viewBox="0 0 20 12"><polygon points="0.5,0.5 19.5,0.5 10.7,11.3 9.3,11.3" fill="#dc5434" stroke="#a63a20" stroke-width="1"/></svg>
<div class="c" style="left:2229px;top:318.7px;width:87px"><span>-1.3</span></div>
<svg style="left:2229.5px;top:325.2px" width="20" height="12" viewBox="0 0 20 12"><polygon points="0.5,0.5 19.5,0.5 10.7,11.3 9.3,11.3" fill="#dc5434" stroke="#a63a20" stroke-width="1"/></svg>
<div class="c" style="left:1712px;top:347.6px;width:50px"><span>2412</span></div>
<div class="c" style="left:1763px;top:347.6px;width:102px"><span><i>中華電</i></span></div>
<div class="c" style="left:1866px;top:347.6px;width:75px"><span>0</span></div>
<svg style="left:1866.5px;top:356.6px" width="19" height="7" viewBox="0 0 19 7"><rect x="0.5" y="0.5" width="18" height="6" fill="#f0c97a" stroke="#b89040" stroke-width="1"/></svg>
<div class="l" style="left:1942px;top:347.6px;width:201px"><span><i>電子下游</i>-<i>電信服務</i></span></div>
<div class="c" style="left:2144px;top:347.6px;width:84px"><span>0</span></div>
<svg style="left:2144.5px;top:356.6px" width="19" height="7" viewBox="0 0 19 7"><rect x="0.5" y="0.5" width="18" height="6" fill="#f0c97a" stroke="#b89040" stroke-width="1"/></svg>
<div class="c" style="left:2229px;top:347.6px;width:87px"><span>0</span></div>
<svg style="left:2229.5px;top:356.6px" width="19" height="7" viewBox="0 0 19 7"><rect x="0.5" y="0.5" width="18" height="6" fill="#f0c97a" stroke="#b89040" stroke-width="1"/></svg>
<div class="c" style="left:1712px;top:376.4px;width:50px"><span>4904</span></div>
<div class="c" style="left:1763px;top:376.4px;width:102px"><span><i>遠傳</i></span></div>
<div class="c" style="left:1866px;top:376.4px;width:75px"><span>0.91</span></div>
<svg style="left:1866.5px;top:382.9px" width="20" height="12" viewBox="0 0 20 12"><polygon points="0.5,11.5 19.5,11.5 10.7,0.7 9.3,0.7" fill="#5aa08c" stroke="#3d7f68" stroke-width="1"/></svg>
<div class="l" style="left:1942px;top:376.4px;width:201px"><span><i>電子下游</i>-<i>電信服務</i></span></div>
<div class="c" style="left:2144px;top:376.4px;width:84px"><span>-0.2</span></div>
<svg style="left:2144.5px;top:382.9px" width="20" height="12" viewBox="0 0 20 12"><polygon points="0.5,0.5 19.5,0.5 10.7,11.3 9.3,11.3" fill="#dc5434" stroke="#a63a20" stroke-width="1"/></svg>
<div class="c" style="left:2229px;top:376.4px;width:87px"><span>0</span></div>
<svg style="left:2229.5px;top:385.4px" width="19" height="7" viewBox="0 0 19 7"><rect x="0.5" y="0.5" width="18" height="6" fill="#f0c97a" stroke="#b89040" stroke-width="1"/></svg>
<div class="c" style="left:1712px;top:405.3px;width:50px"><span>2609</span></div>
<div class="c" style="left:1763px;top:405.3px;width:102px"><span><i>陽明</i></span></div>
<div class="c" style="left:1866px;top:405.3px;width:75px"><span>0.39</span></div>
<svg style="left:1866.5px;top:411.8px" width="20" height="12" viewBox="0 0 20 12"><polygon points="0.5,11.5 19.5,11.5 10.7,0.7 9.3,0.7" fill="#5aa08c" stroke="#3d7f68" stroke-width="1"/></svg>
<div class="l" style="left:1942px;top:405.3px;width:201px"><span><i>傳產</i>-<i>航運</i></span></div>
<div class="c" style="left:2144px;top:405.3px;width:84px"><span>0</span></div>
<svg style="left:2144.5px;top:414.3px" width="19" height="7" viewBox="0 0 19 7"><rect x="0.5" y="0.5" width="18" height="6" fill="#f0c97a" stroke="#b89040" stroke-width="1"/></svg>
<div class="c" style="left:2229px;top:405.3px;width:87px"><span>0</span></div>
<svg style="left:2229.5px;top:414.3px" width="19" height="7" viewBox="0 0 19 7"><rect x="0.5" y="0.5" width="18" height="6" fill="#f0c97a" stroke="#b89040" stroke-width="1"/></svg>
<div class="c" style="left:1712px;top:434.2px;width:50px"><span>6213</span></div>
<div class="c" style="left:1763px;top:434.2px;width:102px"><span><i>聯茂</i></span></div>
<div class="c" style="left:1866px;top:434.2px;width:75px"><span>-4.39</span></div>
<svg style="left:1866.5px;top:440.7px" width="20" height="12" viewBox="0 0 20 12"><polygon points="0.5,0.5 19.5,0.5 10.7,11.3 9.3,11.3" fill="#dc5434" stroke="#a63a20" stroke-width="1"/></svg>
<div class="l" style="left:1942px;top:434.2px;width:201px"><span><i>電子上游</i>-PCB-<i>材料設備</i></span></div>
<div class="c" style="left:2144px;top:434.2px;width:84px"><span>0.3</span></div>
<svg style="left:2144.5px;top:440.7px" width="20" height="12" viewBox="0 0 20 12"><polygon points="0.5,11.5 19.5,11.5 10.7,0.7 9.3,0.7" fill="#5aa08c" stroke="#3d7f68" stroke-width="1"/></svg>
<div class="c" style="left:2229px;top:434.2px;width:87px"><span>0</span></div>
<svg style="left:2229.5px;top:443.2px" width="19" height="7" viewBox="0 0 19 7"><rect x="0.5" y="0.5" width="18" height="6" fill="#f0c97a" stroke="#b89040" stroke-width="1"/></svg>
<div class="c" style="left:1712px;top:463.1px;width:50px"><span>6187</span></div>
<div class="c" style="left:1763px;top:463.1px;width:102px"><span><i>萬潤</i></span></div>
<div class="c" style="left:1866px;top:463.1px;width:75px"><span>-1.14</span></div>
<svg style="left:1866.5px;top:469.5px" width="20" height="12" viewBox="0 0 20 12"><polygon points="0.5,0.5 19.5,0.5 10.7,11.3 9.3,11.3" fill="#dc5434" stroke="#a63a20" stroke-width="1"/></svg>
<div class="l" style="left:1942px;top:463.1px;width:201px"><span><i>電子上游</i>-IC-<i>半導體設備</i></span></div>
<div class="c" style="left:2144px;top:463.1px;width:84px"><span>0.5</span></div>
<svg style="left:2144.5px;top:469.5px" width="20" height="12" viewBox="0 0 20 12"><polygon points="0.5,11.5 19.5,11.5 10.7,0.7 9.3,0.7" fill="#5aa08c" stroke="#3d7f68" stroke-width="1"/></svg>
<div class="c" style="left:2229px;top:463.1px;width:87px"><span>0</span></div>
<svg style="left:2229.5px;top:472.0px" width="19" height="7" viewBox="0 0 19 7"><rect x="0.5" y="0.5" width="18" height="6" fill="#f0c97a" stroke="#b89040" stroke-width="1"/></svg>
<div class="c" style="left:1712px;top:491.9px;width:50px"><span>6285</span></div>
<div class="c" style="left:1763px;top:491.9px;width:102px"><span><i>啟碁</i></span></div>
<div class="c" style="left:1866px;top:491.9px;width:75px"><span>-1.94</span></div>
<svg style="left:1866.5px;top:498.4px" width="20" height="12" viewBox="0 0 20 12"><polygon points="0.5,0.5 19.5,0.5 10.7,11.3 9.3,11.3" fill="#dc5434" stroke="#a63a20" stroke-width="1"/></svg>
<div class="l" style="left:1942px;top:491.9px;width:201px"><span><i>電子中游</i>-<i>網通</i></span></div>
<div class="c" style="left:2144px;top:491.9px;width:84px"><span>-0.4</span></div>
<svg style="left:2144.5px;top:498.4px" width="20" height="12" viewBox="0 0 20 12"><polygon points="0.5,0.5 19.5,0.5 10.7,11.3 9.3,11.3" fill="#dc5434" stroke="#a63a20" stroke-width="1"/></svg>
<div class="c" style="left:2229px;top:491.9px;width:87px"><span>0</span></div>
<svg style="left:2229.5px;top:500.9px" width="19" height="7" viewBox="0 0 19 7"><rect x="0.5" y="0.5" width="18" height="6" fill="#f0c97a" stroke="#b89040" stroke-width="1"/></svg>
<div class="c" style="left:1712px;top:520.8px;width:50px"><span>6147</span></div>
<div class="c" style="left:1763px;top:520.8px;width:102px"><span><i>頎邦</i></span></div>
<div class="c" style="left:1866px;top:520.8px;width:75px"><span>-0.19</span></div>
<svg style="left:1866.5px;top:527.3px" width="20" height="12" viewBox="0 0 20 12"><polygon points="0.5,0.5 19.5,0.5 10.7,11.3 9.3,11.3" fill="#dc5434" stroke="#a63a20" stroke-width="1"/></svg>
<div class="l" style="left:1942px;top:520.8px;width:201px"><span><i>電子上游</i>-IC-<i>封測</i></span></div>
<div class="c" style="left:2144px;top:520.8px;width:84px"><span>0</span></div>
<svg style="left:2144.5px;top:529.8px" width="19" height="7" viewBox="0 0 19 7"><rect x="0.5" y="0.5" width="18" height="6" fill="#f0c97a" stroke="#b89040" stroke-width="1"/></svg>
<div class="c" style="left:2229px;top:520.8px;width:87px"><span>0</span></div>
<svg style="left:2229.5px;top:529.8px" width="19" height="7" viewBox="0 0 19 7"><rect x="0.5" y="0.5" width="18" height="6" fill="#f0c97a" stroke="#b89040" stroke-width="1"/></svg>
<div class="c" style="left:1712px;top:549.7px;width:50px"><span>2034</span></div>
<div class="c" style="left:1763px;top:549.7px;width:102px"><span><i>允強</i></span></div>
<div class="c" style="left:1866px;top:549.7px;width:75px"><span>-1.71</span></div>
<svg style="left:1866.5px;top:556.1px" width="20" height="12" viewBox="0 0 20 12"><polygon points="0.5,0.5 19.5,0.5 10.7,11.3 9.3,11.3" fill="#dc5434" stroke="#a63a20" stroke-width="1"/></svg>
<div class="l" style="left:1942px;top:549.7px;width:201px"><span><i>傳產</i>-<i>鋼鐵</i></span></div>
<div class="c" style="left:2144px;top:549.7px;width:84px"><span>0.1</span></div>
<svg style="left:2144.5px;top:556.1px" width="20" height="12" viewBox="0 0 20 12"><polygon points="0.5,11.5 19.5,11.5 10.7,0.7 9.3,0.7" fill="#5aa08c" stroke="#3d7f68" stroke-width="1"/></svg>
<div class="c" style="left:2229px;top:549.7px;width:87px"><span>0</span></div>
<svg style="left:2229.5px;top:558.6px" width="19" height="7" viewBox="0 0 19 7"><rect x="0.5" y="0.5" width="18" height="6" fill="#f0c97a" stroke="#b89040" stroke-width="1"/></svg>
<div class="c" style="left:1712px;top:578.5px;width:50px"><span>8086</span></div>
<div class="c" style="left:1763px;top:578.5px;width:102px"><span><i>宏捷科</i></span></div>
<div class="c" style="left:1866px;top:578.5px;width:75px"><span>-1.43</span></div>
<svg style="left:1866.5px;top:585.0px" width="20" height="12" viewBox="0 0 20 12"><polygon points="0.5,0.5 19.5,0.5 10.7,11.3 9.3,11.3" fill="#dc5434" stroke="#a63a20" stroke-width="1"/></svg>
<div class="l" style="left:1942px;top:578.5px;width:201px"><span><i>電子上游</i>-IC-<i>代工</i></span></div>
<div class="c" style="left:2144px;top:578.5px;width:84px"><span>-0.6</span></div>
<svg style="left:2144.5px;top:585.0px" width="20" height="12" viewBox="0 0 20 12"><polygon points="0.5,0.5 19.5,0.5 10.7,11.3 9.3,11.3" fill="#dc5434" stroke="#a63a20" stroke-width="1"/></svg>
<div class="c" style="left:2229px;top:578.5px;width:87px"><span>0</span></div>
<svg style="left:2229.5px;top:587.5px" width="19" height="7" viewBox="0 0 19 7"><rect x="0.5" y="0.5" width="18" height="6" fill="#f0c97a" stroke="#b89040" stroke-width="1"/></svg>
<div class="c" style="left:1712px;top:607.4px;width:50px"><span>6182</span></div>
<div class="c" style="left:1763px;top:607.4px;width:102px"><span><i>合晶</i></span></div>
<div class="c" style="left:1866px;top:607.4px;width:75px"><span>-1.21</span></div>
<svg style="left:1866.5px;top:613.9px" width="20" height="12" viewBox="0 0 20 12"><polygon points="0.5,0.5 19.5,0.5 10.7,11.3 9.3,11.3" fill="#dc5434" stroke="#a63a20" stroke-width="1"/></svg>
<div class="l" style="left:1942px;top:607.4px;width:201px"><span><i>電子上游</i>-<i>晶圓材料</i></span></div>
<div class="c" style="left:2144px;top:607.4px;width:84px"><span>0</span></div>
<svg style="left:2144.5px;top:616.4px" width="19" height="7" viewBox="0 0 19 7"><rect x="0.5" y="0.5" width="18" height="6" fill="#f0c97a" stroke="#b89040" stroke-width="1"/></svg>
<div class="c" style="left:2229px;top:607.4px;width:87px"><span>0</span></div>
<svg style="left:2229.5px;top:616.4px" width="19" height="7" viewBox="0 0 19 7"><rect x="0.5" y="0.5" width="18" height="6" fill="#f0c97a" stroke="#b89040" stroke-width="1"/></svg>
<div class="c" style="left:1712px;top:636.3px;width:50px"><span>9105</span></div>
<div class="c" style="left:1763px;top:636.3px;width:102px"><span><i>泰金寶</i>-DR</span></div>
<div class="c" style="left:1866px;top:636.3px;width:75px"><span>0</span></div>
<svg style="left:1866.5px;top:645.3px" width="19" height="7" viewBox="0 0 19 7"><rect x="0.5" y="0.5" width="18" height="6" fill="#f0c97a" stroke="#b89040" stroke-width="1"/></svg>
<div class="l" style="left:1942px;top:636.3px;width:201px"><span><i>電子下游</i>-<i>掃描器</i></span></div>
<div class="c" style="left:2144px;top:636.3px;width:84px"><span>2.6</span></div>
<svg style="left:2144.5px;top:642.8px" width="20" height="12" viewBox="0 0 20 12"><polygon points="0.5,11.5 19.5,11.5 10.7,0.7 9.3,0.7" fill="#5aa08c" stroke="#3d7f68" stroke-width="1"/></svg>
<div class="c" style="left:2229px;top:636.3px;width:87px"><span>0</span></div>
<svg style="left:2229.5px;top:645.3px" width="19" height="7" viewBox="0 0 19 7"><rect x="0.5" y="0.5" width="18" height="6" fill="#f0c97a" stroke="#b89040" stroke-width="1"/></svg>
<div class="c" style="left:1712px;top:665.1px;width:50px"><span>2889</span></div>
<div class="c" style="left:1763px;top:665.1px;width:102px"><span><i>國票金</i></span></div>
<div class="c" style="left:1866px;top:665.1px;width:75px"><span>1.86</span></div>
<svg style="left:1866.5px;top:671.6px" width="20" height="12" viewBox="0 0 20 12"><polygon points="0.5,11.5 19.5,11.5 10.7,0.7 9.3,0.7" fill="#5aa08c" stroke="#3d7f68" stroke-width="1"/></svg>
<div class="l" style="left:1942px;top:665.1px;width:201px"><span><i>金融</i>-<i>金控</i></span></div>
<div class="c" style="left:2144px;top:665.1px;width:84px"><span>-0.1</span></div>
<svg style="left:2144.5px;top:671.6px" width="20" height="12" viewBox="0 0 20 12"><polygon points="0.5,0.5 19.5,0.5 10.7,11.3 9.3,11.3" fill="#dc5434" stroke="#a63a20" stroke-width="1"/></svg>
<div class="c" style="left:2229px;top:665.1px;width:87px"><span>0</span></div>
<svg style="left:2229.5px;top:674.1px" width="19" height="7" viewBox="0 0 19 7"><rect x="0.5" y="0.5" width="18" height="6" fill="#f0c97a" stroke="#b89040" stroke-width="1"/></svg>
<div class="c" style="left:1712px;top:694.0px;width:50px"><span>2101</span></div>
<div class="c" style="left:1763px;top:694.0px;width:102px"><span><i>南港</i></span></div>
<div class="c" style="left:1866px;top:694.0px;width:75px"><span>-0.52</span></div>
<svg style="left:1866.5px;top:700.5px" width="20" height="12" viewBox="0 0 20 12"><polygon points="0.5,0.5 19.5,0.5 10.7,11.3 9.3,11.3" fill="#dc5434" stroke="#a63a20" stroke-width="1"/></svg>
<div class="l" style="left:1942px;top:694.0px;width:201px"><span><i>傳產</i>-<i>橡膠</i></span></div>
<div class="c" style="left:2144px;top:694.0px;width:84px"><span>0</span></div>
<svg style="left:2144.5px;top:703.0px" width="19" height="7" viewBox="0 0 19 7"><rect x="0.5" y="0.5" width="18" height="6" fill="#f0c97a" stroke="#b89040" stroke-width="1"/></svg>
<div class="c" style="left:2229px;top:694.0px;width:87px"><span>0</span></div>
<svg style="left:2229.5px;top:703.0px" width="19" height="7" viewBox="0 0 19 7"><rect x="0.5" y="0.5" width="18" height="6" fill="#f0c97a" stroke="#b89040" stroke-width="1"/></svg>
<div class="c" style="left:1712px;top:722.9px;width:50px"><span>6558</span></div>
<div class="c" style="left:1763px;top:722.9px;width:102px"><span><i>興能高</i></span></div>
<div class="c" style="left:1866px;top:722.9px;width:75px"><span>-2.09</span></div>
<svg style="left:1866.5px;top:729.4px" width="20" height="12" viewBox="0 0 20 12"><polygon points="0.5,0.5 19.5,0.5 10.7,11.3 9.3,11.3" fill="#dc5434" stroke="#a63a20" stroke-width="1"/></svg>
<div class="l" style="left:1942px;top:722.9px;width:201px"><span><i>電子中游</i>-<i>其他</i></span></div>
<div class="c" style="left:2144px;top:722.9px;width:84px"><span>0.4</span></div>
<svg style="left:2144.5px;top:729.4px" width="20" height="12" viewBox="0 0 20 12"><polygon points="0.5,11.5 19.5,11.5 10.7,0.7 9.3,0.7" fill="#5aa08c" stroke="#3d7f68" stroke-width="1"/></svg>
<div class="c" style="left:2229px;top:722.9px;width:87px"><span>0</span></div>
<svg style="left:2229.5px;top:731.9px" width="19" height="7" viewBox="0 0 19 7"><rect x="0.5" y="0.5" width="18" height="6" fill="#f0c97a" stroke="#b89040" stroke-width="1"/></svg>
<div class="c" style="left:1712px;top:751.8px;width:50px"><span>5608</span></div>
<div class="c" style="left:1763px;top:751.8px;width:102px"><span><i>四維航</i></span></div>
<div class="c" style="left:1866px;top:751.8px;width:75px"><span>0.28</span></div>
<svg style="left:1866.5px;top:758.2px" width="20" height="12" viewBox="0 0 20 12"><polygon points="0.5,11.5 19.5,11.5 10.7,0.7 9.3,0.7" fill="#5aa08c" stroke="#3d7f68" stroke-width="1"/></svg>
<div class="l" style="left:1942px;top:751.8px;width:201px"><span><i>傳產</i>-<i>航運</i></span></div>
<div class="c" style="left:2144px;top:751.8px;width:84px"><span>0</span></div>
<svg style="left:2144.5px;top:760.7px" width="19" height="7" viewBox="0 0 19 7"><rect x="0.5" y="0.5" width="18" height="6" fill="#f0c97a" stroke="#b89040" stroke-width="1"/></svg>
<div class="c" style="left:2229px;top:751.8px;width:87px"><span>0</span></div>
<svg style="left:2229.5px;top:760.7px" width="19" height="7" viewBox="0 0 19 7"><rect x="0.5" y="0.5" width="18" height="6" fill="#f0c97a" stroke="#b89040" stroke-width="1"/></svg>
<div class="c" style="left:1712px;top:780.6px;width:50px"><span>2489</span></div>
<div class="c" style="left:1763px;top:780.6px;width:102px"><span><i>瑞軒</i></span></div>
<div class="c" style="left:1866px;top:780.6px;width:75px"><span>-0.34</span></div>
<svg style="left:1866.5px;top:787.1px" width="20" height="12" viewBox="0 0 20 12"><polygon points="0.5,0.5 19.5,0.5 10.7,11.3 9.3,11.3" fill="#dc5434" stroke="#a63a20" stroke-width="1"/></svg>
<div class="l" style="left:1942px;top:780.6px;width:201px"><span><i>電子下游</i>-<i>顯示器</i></span></div>
<div class="c" style="left:2144px;top:780.6px;width:84px"><span>0.1</span></div>
<svg style="left:2144.5px;top:787.1px" width="20" height="12" viewBox="0 0 20 12"><polygon points="0.5,11.5 19.5,11.5 10.7,0.7 9.3,0.7" fill="#5aa08c" stroke="#3d7f68" stroke-width="1"/></svg>
<div class="c" style="left:2229px;top:780.6px;width:87px"><span>0</span></div>
<svg style="left:2229.5px;top:789.6px" width="19" height="7" viewBox="0 0 19 7"><rect x="0.5" y="0.5" width="18" height="6" fill="#f0c97a" stroke="#b89040" stroke-width="1"/></svg>
<div class="c" style="left:1712px;top:809.5px;width:50px"><span>2915</span></div>
<div class="c" style="left:1763px;top:809.5px;width:102px"><span><i>潤泰全</i></span></div>
<div class="c" style="left:1866px;top:809.5px;width:75px"><span>-0.37</span></div>
<svg style="left:1866.5px;top:816.0px" width="20" height="12" viewBox="0 0 20 12"><polygon points="0.5,0.5 19.5,0.5 10.7,11.3 9.3,11.3" fill="#dc5434" stroke="#a63a20" stroke-width="1"/></svg>
<div class="l" style="left:1942px;top:809.5px;width:201px"><span><i>傳產</i>-<i>百貨</i></span></div>
<div class="c" style="left:2144px;top:809.5px;width:84px"><span>0</span></div>
<svg style="left:2144.5px;top:818.5px" width="19" height="7" viewBox="0 0 19 7"><rect x="0.5" y="0.5" width="18" height="6" fill="#f0c97a" stroke="#b89040" stroke-width="1"/></svg>
<div class="c" style="left:2229px;top:809.5px;width:87px"><span>-0.1</span></div>
<svg style="left:2229.5px;top:816.0px" width="20" height="12" viewBox="0 0 20 12"><polygon points="0.5,0.5 19.5,0.5 10.7,11.3 9.3,11.3" fill="#dc5434" stroke="#a63a20" stroke-width="1"/></svg>
<div class="c" style="left:1712px;top:838.4px;width:50px"><span>1711</span></div>
<div class="c" style="left:1763px;top:838.4px;width:102px"><span><i>永光</i></span></div>
<div class="c" style="left:1866px;top:838.4px;width:75px"><span>-1.09</span></div>
<svg style="left:1866.5px;top:844.8px" width="20" height="12" viewBox="0 0 20 12"><polygon points="0.5,0.5 19.5,0.5 10.7,11.3 9.3,11.3" fill="#dc5434" stroke="#a63a20" stroke-width="1"/></svg>
<div class="l" style="left:1942px;top:838.4px;width:201px"><span><i>傳產</i>-<i>化學工業</i></span></div>
<div class="c" style="left:2144px;top:838.4px;width:84px"><span>0.3</span></div>
<svg style="left:2144.5px;top:844.8px" width="20" height="12" viewBox="0 0 20 12"><polygon points="0.5,11.5 19.5,11.5 10.7,0.7 9.3,0.7" fill="#5aa08c" stroke="#3d7f68" stroke-width="1"/></svg>
<div class="c" style="left:2229px;top:838.4px;width:87px"><span>0</span></div>
<svg style="left:2229.5px;top:847.3px" width="19" height="7" viewBox="0 0 19 7"><rect x="0.5" y="0.5" width="18" height="6" fill="#f0c97a" stroke="#b89040" stroke-width="1"/></svg>
<div class="c" style="left:1712px;top:867.2px;width:50px"><span>2834</span></div>
<div class="c" style="left:1763px;top:867.2px;width:102px"><span><i>臺企銀</i></span></div>
<div class="c" style="left:1866px;top:867.2px;width:75px"><span>0.32</span></div>
<svg style="left:1866.5px;top:873.7px" width="20" height="12" viewBox="0 0 20 12"><polygon points="0.5,11.5 19.5,11.5 10.7,0.7 9.3,0.7" fill="#5aa08c" stroke="#3d7f68" stroke-width="1"/></svg>
<div class="l" style="left:1942px;top:867.2px;width:201px"><span><i>金融</i>-<i>銀行</i></span></div>
<div class="c" style="left:2144px;top:867.2px;width:84px"><span>-0.1</span></div>
<svg style="left:2144.5px;top:873.7px" width="20" height="12" viewBox="0 0 20 12"><polygon points="0.5,0.5 19.5,0.5 10.7,11.3 9.3,11.3" fill="#dc5434" stroke="#a63a20" stroke-width="1"/></svg>
<div class="c" style="left:2229px;top:867.2px;width:87px"><span>0</span></div>
<svg style="left:2229.5px;top:876.2px" width="19" height="7" viewBox="0 0 19 7"><rect x="0.5" y="0.5" width="18" height="6" fill="#f0c97a" stroke="#b89040" stroke-width="1"/></svg>
<div class="c" style="left:1712px;top:896.1px;width:50px"><span>2897</span></div>
<div class="c" style="left:1763px;top:896.1px;width:102px"><span><i>王道銀行</i></span></div>
<div class="c" style="left:1866px;top:896.1px;width:75px"><span>-0.54</span></div>
<svg style="left:1866.5px;top:902.6px" width="20" height="12" viewBox="0 0 20 12"><polygon points="0.5,0.5 19.5,0.5 10.7,11.3 9.3,11.3" fill="#dc5434" stroke="#a63a20" stroke-width="1"/></svg>
<div class="l" style="left:1942px;top:896.1px;width:201px"><span><i>金融</i>-<i>銀行</i></span></div>
<div class="c" style="left:2144px;top:896.1px;width:84px"><span>0.1</span></div>
<svg style="left:2144.5px;top:902.6px" width="20" height="12" viewBox="0 0 20 12"><polygon points="0.5,11.5 19.5,11.5 10.7,0.7 9.3,0.7" fill="#5aa08c" stroke="#3d7f68" stroke-width="1"/></svg>
<div class="c" style="left:2229px;top:896.1px;width:87px"><span>0</span></div>
<svg style="left:2229.5px;top:905.1px" width="19" height="7" viewBox="0 0 19 7"><rect x="0.5" y="0.5" width="18" height="6" fill="#f0c97a" stroke="#b89040" stroke-width="1"/></svg>
<div class="k" style="left:2338px;top:80px;width:1px;height:1508px"></div>
<div class="bh" style="left:2340px;top:80px;width:562px;height:31px;border-top:3px double #000;border-right:3px double #000;border-left:2px solid #000;border-bottom:1px solid #000">接近60MA</div>
<div class="hd" style="left:2340px;top:112px;width:54px;height:30px;text-align:center;letter-spacing:1px;padding-left:2px;">代號</div>
<div class="hd" style="left:2395px;top:112px;width:101px;height:30px;text-align:center;letter-spacing:4px;padding-left:4px;">名稱</div>
<div class="hd" style="left:2497px;top:112px;width:73px;height:30px;text-align:center;letter-spacing:1px;padding-left:1px;">漲幅%</div>
<div class="hd" style="left:2571px;top:112px;width:178px;height:30px;padding-left:4px;letter-spacing:3px;">產業分類</div>
<div class="hd" style="left:2750px;top:112px;width:74px;height:30px;padding-left:3px;letter-spacing:3px;font-size:14px;">外資5日買超佔股本比</div>
<div class="hd" style="left:2825px;top:112px;width:76px;height:30px;padding-left:3px;letter-spacing:3px;font-size:14px;border-right:none;"></div>
<div class="hd" style="left:2825px;top:112px;width:76px;height:30px;border:none;background:none;padding-left:4px;letter-spacing:3px;font-size:14px;">投信5日買超佔股本比</div>
<div class="body" style="left:2340px;top:143px;width:561px;height:1445px;border-left:1px solid #000;border-top:1px solid #000;border-bottom:1px solid #000"></div>
<div class="c" style="left:2340px;top:145.5px;width:54px"><span>5439</span></div>
<div class="c" style="left:2395px;top:145.5px;width:101px"><span><i>高技</i></span></div>
<div class="c" style="left:2497px;top:145.5px;width:73px"><span>-6.92</span></div>
<svg style="left:2497.5px;top:152.1px" width="20" height="12" viewBox="0 0 20 12"><polygon points="0.5,0.5 19.5,0.5 10.7,11.3 9.3,11.3" fill="#dc5434" stroke="#a63a20" stroke-width="1"/></svg>
<div class="l" style="left:2571px;top:145.5px;width:178px"><span><i>電子上游</i>-PCB-<i>製造</i></span></div>
<div class="c" style="left:2750px;top:145.5px;width:74px"><span>-3.8</span></div>
<svg style="left:2750.5px;top:152.1px" width="20" height="12" viewBox="0 0 20 12"><polygon points="0.5,0.5 19.5,0.5 10.7,11.3 9.3,11.3" fill="#dc5434" stroke="#a63a20" stroke-width="1"/></svg>
<div class="c" style="left:2825px;top:145.5px;width:76px"><span>1.5</span></div>
<svg style="left:2825.5px;top:152.1px" width="20" height="12" viewBox="0 0 20 12"><polygon points="0.5,11.5 19.5,11.5 10.7,0.7 9.3,0.7" fill="#5aa08c" stroke="#3d7f68" stroke-width="1"/></svg>
<div class="c" style="left:2340px;top:174.4px;width:54px"><span>5469</span></div>
<div class="c" style="left:2395px;top:174.4px;width:101px"><span><i>瀚宇博</i></span></div>
<div class="c" style="left:2497px;top:174.4px;width:73px"><span>-3.48</span></div>
<svg style="left:2497.5px;top:180.8px" width="20" height="12" viewBox="0 0 20 12"><polygon points="0.5,0.5 19.5,0.5 10.7,11.3 9.3,11.3" fill="#dc5434" stroke="#a63a20" stroke-width="1"/></svg>
<div class="l" style="left:2571px;top:174.4px;width:178px"><span><i>電子上游</i>-PCB-<i>製造</i></span></div>
<div class="c" style="left:2750px;top:174.4px;width:74px"><span>-2.1</span></div>
<svg style="left:2750.5px;top:180.8px" width="20" height="12" viewBox="0 0 20 12"><polygon points="0.5,0.5 19.5,0.5 10.7,11.3 9.3,11.3" fill="#dc5434" stroke="#a63a20" stroke-width="1"/></svg>
<div class="c" style="left:2825px;top:174.4px;width:76px"><span>0.1</span></div>
<svg style="left:2825.5px;top:180.8px" width="20" height="12" viewBox="0 0 20 12"><polygon points="0.5,11.5 19.5,11.5 10.7,0.7 9.3,0.7" fill="#5aa08c" stroke="#3d7f68" stroke-width="1"/></svg>
<div class="c" style="left:2340px;top:203.2px;width:54px"><span>3260</span></div>
<div class="c" style="left:2395px;top:203.2px;width:101px"><span><i>威剛</i></span></div>
<div class="c" style="left:2497px;top:203.2px;width:73px"><span>-3.49</span></div>
<svg style="left:2497.5px;top:209.7px" width="20" height="12" viewBox="0 0 20 12"><polygon points="0.5,0.5 19.5,0.5 10.7,11.3 9.3,11.3" fill="#dc5434" stroke="#a63a20" stroke-width="1"/></svg>
<div class="l" style="left:2571px;top:203.2px;width:178px"><span><i>電子上游</i>-<i>記憶體銷售</i></span></div>
<div class="c" style="left:2750px;top:203.2px;width:74px"><span>-1.8</span></div>
<svg style="left:2750.5px;top:209.7px" width="20" height="12" viewBox="0 0 20 12"><polygon points="0.5,0.5 19.5,0.5 10.7,11.3 9.3,11.3" fill="#dc5434" stroke="#a63a20" stroke-width="1"/></svg>
<div class="c" style="left:2825px;top:203.2px;width:76px"><span>0.5</span></div>
<svg style="left:2825.5px;top:209.7px" width="20" height="12" viewBox="0 0 20 12"><polygon points="0.5,11.5 19.5,11.5 10.7,0.7 9.3,0.7" fill="#5aa08c" stroke="#3d7f68" stroke-width="1"/></svg>
<div class="c" style="left:2340px;top:232.1px;width:54px"><span>5871</span></div>
<div class="c" style="left:2395px;top:232.1px;width:101px"><span><i>中租</i>-KY</span></div>
<div class="c" style="left:2497px;top:232.1px;width:73px"><span>2.96</span></div>
<svg style="left:2497.5px;top:238.6px" width="20" height="12" viewBox="0 0 20 12"><polygon points="0.5,11.5 19.5,11.5 10.7,0.7 9.3,0.7" fill="#5aa08c" stroke="#3d7f68" stroke-width="1"/></svg>
<div class="l" style="left:2571px;top:232.1px;width:178px"><span><i>傳產</i>-<i>其他</i></span></div>
<div class="c" style="left:2750px;top:232.1px;width:74px"><span>0.1</span></div>
<svg style="left:2750.5px;top:238.6px" width="20" height="12" viewBox="0 0 20 12"><polygon points="0.5,11.5 19.5,11.5 10.7,0.7 9.3,0.7" fill="#5aa08c" stroke="#3d7f68" stroke-width="1"/></svg>
<div class="c" style="left:2825px;top:232.1px;width:76px"><span>-0.1</span></div>
<svg style="left:2825.5px;top:238.6px" width="20" height="12" viewBox="0 0 20 12"><polygon points="0.5,0.5 19.5,0.5 10.7,11.3 9.3,11.3" fill="#dc5434" stroke="#a63a20" stroke-width="1"/></svg>
<div class="c" style="left:2340px;top:261.0px;width:54px"><span>6919</span></div>
<div class="c" style="left:2395px;top:261.0px;width:101px"><span><i>康霈</i>*</span></div>
<div class="c" style="left:2497px;top:261.0px;width:73px"><span>-1.56</span></div>
<svg style="left:2497.5px;top:267.4px" width="20" height="12" viewBox="0 0 20 12"><polygon points="0.5,0.5 19.5,0.5 10.7,11.3 9.3,11.3" fill="#dc5434" stroke="#a63a20" stroke-width="1"/></svg>
<div class="l" style="left:2571px;top:261.0px;width:178px"><span><i>傳產</i>-<i>生技</i></span></div>
<div class="c" style="left:2750px;top:261.0px;width:74px"><span>0.5</span></div>
<svg style="left:2750.5px;top:267.4px" width="20" height="12" viewBox="0 0 20 12"><polygon points="0.5,11.5 19.5,11.5 10.7,0.7 9.3,0.7" fill="#5aa08c" stroke="#3d7f68" stroke-width="1"/></svg>
<div class="c" style="left:2825px;top:261.0px;width:76px"><span>0</span></div>
<svg style="left:2825.5px;top:269.9px" width="19" height="7" viewBox="0 0 19 7"><rect x="0.5" y="0.5" width="18" height="6" fill="#f0c97a" stroke="#b89040" stroke-width="1"/></svg>
<div class="c" style="left:2340px;top:289.8px;width:54px"><span>8028</span></div>
<div class="c" style="left:2395px;top:289.8px;width:101px"><span><i>昇陽半導體</i></span></div>
<div class="c" style="left:2497px;top:289.8px;width:73px"><span>-1.17</span></div>
<svg style="left:2497.5px;top:296.3px" width="20" height="12" viewBox="0 0 20 12"><polygon points="0.5,0.5 19.5,0.5 10.7,11.3 9.3,11.3" fill="#dc5434" stroke="#a63a20" stroke-width="1"/></svg>
<div class="l" style="left:2571px;top:289.8px;width:178px"><span><i>電子上游</i>-IC-<i>半導體設備</i></span></div>
<div class="c" style="left:2750px;top:289.8px;width:74px"><span>0.3</span></div>
<svg style="left:2750.5px;top:296.3px" width="20" height="12" viewBox="0 0 20 12"><polygon points="0.5,11.5 19.5,11.5 10.7,0.7 9.3,0.7" fill="#5aa08c" stroke="#3d7f68" stroke-width="1"/></svg>
<div class="c" style="left:2825px;top:289.8px;width:76px"><span>0.3</span></div>
<svg style="left:2825.5px;top:296.3px" width="20" height="12" viewBox="0 0 20 12"><polygon points="0.5,11.5 19.5,11.5 10.7,0.7 9.3,0.7" fill="#5aa08c" stroke="#3d7f68" stroke-width="1"/></svg>
<div class="c" style="left:2340px;top:318.7px;width:54px"><span>6753</span></div>
<div class="c" style="left:2395px;top:318.7px;width:101px"><span><i>龍德造船</i></span></div>
<div class="c" style="left:2497px;top:318.7px;width:73px"><span>-4.8</span></div>
<svg style="left:2497.5px;top:325.2px" width="20" height="12" viewBox="0 0 20 12"><polygon points="0.5,0.5 19.5,0.5 10.7,11.3 9.3,11.3" fill="#dc5434" stroke="#a63a20" stroke-width="1"/></svg>
<div class="l" style="left:2571px;top:318.7px;width:178px"><span><i>傳產</i>-<i>航運</i></span></div>
<div class="c" style="left:2750px;top:318.7px;width:74px"><span>0.4</span></div>
<svg style="left:2750.5px;top:325.2px" width="20" height="12" viewBox="0 0 20 12"><polygon points="0.5,11.5 19.5,11.5 10.7,0.7 9.3,0.7" fill="#5aa08c" stroke="#3d7f68" stroke-width="1"/></svg>
<div class="c" style="left:2825px;top:318.7px;width:76px"><span>0</span></div>
<svg style="left:2825.5px;top:327.7px" width="19" height="7" viewBox="0 0 19 7"><rect x="0.5" y="0.5" width="18" height="6" fill="#f0c97a" stroke="#b89040" stroke-width="1"/></svg>
<div class="c" style="left:2340px;top:347.6px;width:54px"><span>2492</span></div>
<div class="c" style="left:2395px;top:347.6px;width:101px"><span><i>華新科</i></span></div>
<div class="c" style="left:2497px;top:347.6px;width:73px"><span>-2.99</span></div>
<svg style="left:2497.5px;top:354.1px" width="20" height="12" viewBox="0 0 20 12"><polygon points="0.5,0.5 19.5,0.5 10.7,11.3 9.3,11.3" fill="#dc5434" stroke="#a63a20" stroke-width="1"/></svg>
<div class="l" style="left:2571px;top:347.6px;width:178px"><span><i>電子上游</i>-<i>被動元件</i></span></div>
<div class="c" style="left:2750px;top:347.6px;width:74px"><span>-0.8</span></div>
<svg style="left:2750.5px;top:354.1px" width="20" height="12" viewBox="0 0 20 12"><polygon points="0.5,0.5 19.5,0.5 10.7,11.3 9.3,11.3" fill="#dc5434" stroke="#a63a20" stroke-width="1"/></svg>
<div class="c" style="left:2825px;top:347.6px;width:76px"><span>0</span></div>
<svg style="left:2825.5px;top:356.6px" width="19" height="7" viewBox="0 0 19 7"><rect x="0.5" y="0.5" width="18" height="6" fill="#f0c97a" stroke="#b89040" stroke-width="1"/></svg>
<div class="c" style="left:2340px;top:376.4px;width:54px"><span>2421</span></div>
<div class="c" style="left:2395px;top:376.4px;width:101px"><span><i>建準</i></span></div>
<div class="c" style="left:2497px;top:376.4px;width:73px"><span>-2.56</span></div>
<svg style="left:2497.5px;top:382.9px" width="20" height="12" viewBox="0 0 20 12"><polygon points="0.5,0.5 19.5,0.5 10.7,11.3 9.3,11.3" fill="#dc5434" stroke="#a63a20" stroke-width="1"/></svg>
<div class="l" style="left:2571px;top:376.4px;width:178px"><span><i>電子中游</i>-<i>散熱零組件</i></span></div>
<div class="c" style="left:2750px;top:376.4px;width:74px"><span>-0.1</span></div>
<svg style="left:2750.5px;top:382.9px" width="20" height="12" viewBox="0 0 20 12"><polygon points="0.5,0.5 19.5,0.5 10.7,11.3 9.3,11.3" fill="#dc5434" stroke="#a63a20" stroke-width="1"/></svg>
<div class="c" style="left:2825px;top:376.4px;width:76px"><span>0</span></div>
<svg style="left:2825.5px;top:385.4px" width="19" height="7" viewBox="0 0 19 7"><rect x="0.5" y="0.5" width="18" height="6" fill="#f0c97a" stroke="#b89040" stroke-width="1"/></svg>
<div class="c" style="left:2340px;top:405.3px;width:54px"><span>8155</span></div>
<div class="c" style="left:2395px;top:405.3px;width:101px"><span><i>博智</i></span></div>
<div class="c" style="left:2497px;top:405.3px;width:73px"><span>-4.09</span></div>
<svg style="left:2497.5px;top:411.8px" width="20" height="12" viewBox="0 0 20 12"><polygon points="0.5,0.5 19.5,0.5 10.7,11.3 9.3,11.3" fill="#dc5434" stroke="#a63a20" stroke-width="1"/></svg>
<div class="l" style="left:2571px;top:405.3px;width:178px"><span><i>電子上游</i>-PCB-<i>製造</i></span></div>
<div class="c" style="left:2750px;top:405.3px;width:74px"><span>-1.7</span></div>
<svg style="left:2750.5px;top:411.8px" width="20" height="12" viewBox="0 0 20 12"><polygon points="0.5,0.5 19.5,0.5 10.7,11.3 9.3,11.3" fill="#dc5434" stroke="#a63a20" stroke-width="1"/></svg>
<div class="c" style="left:2825px;top:405.3px;width:76px"><span>0</span></div>
<svg style="left:2825.5px;top:414.3px" width="19" height="7" viewBox="0 0 19 7"><rect x="0.5" y="0.5" width="18" height="6" fill="#f0c97a" stroke="#b89040" stroke-width="1"/></svg>
<div class="c" style="left:2340px;top:434.2px;width:54px"><span>6271</span></div>
<div class="c" style="left:2395px;top:434.2px;width:101px"><span><i>同欣電</i></span></div>
<div class="c" style="left:2497px;top:434.2px;width:73px"><span>-1.65</span></div>
<svg style="left:2497.5px;top:440.7px" width="20" height="12" viewBox="0 0 20 12"><polygon points="0.5,0.5 19.5,0.5 10.7,11.3 9.3,11.3" fill="#dc5434" stroke="#a63a20" stroke-width="1"/></svg>
<div class="l" style="left:2571px;top:434.2px;width:178px"><span><i>電子上游</i>-IC-<i>封測</i></span></div>
<div class="c" style="left:2750px;top:434.2px;width:74px"><span>-1</span></div>
<svg style="left:2750.5px;top:440.7px" width="20" height="12" viewBox="0 0 20 12"><polygon points="0.5,0.5 19.5,0.5 10.7,11.3 9.3,11.3" fill="#dc5434" stroke="#a63a20" stroke-width="1"/></svg>
<div class="c" style="left:2825px;top:434.2px;width:76px"><span>-0.1</span></div>
<svg style="left:2825.5px;top:440.7px" width="20" height="12" viewBox="0 0 20 12"><polygon points="0.5,0.5 19.5,0.5 10.7,11.3 9.3,11.3" fill="#dc5434" stroke="#a63a20" stroke-width="1"/></svg>
<div class="c" style="left:2340px;top:463.1px;width:54px"><span>6414</span></div>
<div class="c" style="left:2395px;top:463.1px;width:101px"><span><i>樺漢</i></span></div>
<div class="c" style="left:2497px;top:463.1px;width:73px"><span>-1.37</span></div>
<svg style="left:2497.5px;top:469.5px" width="20" height="12" viewBox="0 0 20 12"><polygon points="0.5,0.5 19.5,0.5 10.7,11.3 9.3,11.3" fill="#dc5434" stroke="#a63a20" stroke-width="1"/></svg>
<div class="l" style="left:2571px;top:463.1px;width:178px"><span><i>電子下游</i>-<i>工業電腦</i></span></div>
<div class="c" style="left:2750px;top:463.1px;width:74px"><span>-0.2</span></div>
<svg style="left:2750.5px;top:469.5px" width="20" height="12" viewBox="0 0 20 12"><polygon points="0.5,0.5 19.5,0.5 10.7,11.3 9.3,11.3" fill="#dc5434" stroke="#a63a20" stroke-width="1"/></svg>
<div class="c" style="left:2825px;top:463.1px;width:76px"><span>0.4</span></div>
<svg style="left:2825.5px;top:469.5px" width="20" height="12" viewBox="0 0 20 12"><polygon points="0.5,11.5 19.5,11.5 10.7,0.7 9.3,0.7" fill="#5aa08c" stroke="#3d7f68" stroke-width="1"/></svg>
<div class="c" style="left:2340px;top:491.9px;width:54px"><span>6005</span></div>
<div class="c" style="left:2395px;top:491.9px;width:101px"><span><i>群益證</i></span></div>
<div class="c" style="left:2497px;top:491.9px;width:73px"><span>-1.2</span></div>
<svg style="left:2497.5px;top:498.4px" width="20" height="12" viewBox="0 0 20 12"><polygon points="0.5,0.5 19.5,0.5 10.7,11.3 9.3,11.3" fill="#dc5434" stroke="#a63a20" stroke-width="1"/></svg>
<div class="l" style="left:2571px;top:491.9px;width:178px"><span><i>金融</i>-<i>證券</i></span></div>
<div class="c" style="left:2750px;top:491.9px;width:74px"><span>-0.2</span></div>
<svg style="left:2750.5px;top:498.4px" width="20" height="12" viewBox="0 0 20 12"><polygon points="0.5,0.5 19.5,0.5 10.7,11.3 9.3,11.3" fill="#dc5434" stroke="#a63a20" stroke-width="1"/></svg>
<div class="c" style="left:2825px;top:491.9px;width:76px"><span>0</span></div>
<svg style="left:2825.5px;top:500.9px" width="19" height="7" viewBox="0 0 19 7"><rect x="0.5" y="0.5" width="18" height="6" fill="#f0c97a" stroke="#b89040" stroke-width="1"/></svg>
<div class="c" style="left:2340px;top:520.8px;width:54px"><span>5351</span></div>
<div class="c" style="left:2395px;top:520.8px;width:101px"><span><i>鈺創</i></span></div>
<div class="c" style="left:2497px;top:520.8px;width:73px"><span>-2.63</span></div>
<svg style="left:2497.5px;top:527.3px" width="20" height="12" viewBox="0 0 20 12"><polygon points="0.5,0.5 19.5,0.5 10.7,11.3 9.3,11.3" fill="#dc5434" stroke="#a63a20" stroke-width="1"/></svg>
<div class="l" style="left:2571px;top:520.8px;width:178px"><span><i>電子上游</i>-<i>記憶體</i>IC<i>設計</i></span></div>
<div class="c" style="left:2750px;top:520.8px;width:74px"><span>-0.8</span></div>
<svg style="left:2750.5px;top:527.3px" width="20" height="12" viewBox="0 0 20 12"><polygon points="0.5,0.5 19.5,0.5 10.7,11.3 9.3,11.3" fill="#dc5434" stroke="#a63a20" stroke-width="1"/></svg>
<div class="c" style="left:2825px;top:520.8px;width:76px"><span>0</span></div>
<svg style="left:2825.5px;top:529.8px" width="19" height="7" viewBox="0 0 19 7"><rect x="0.5" y="0.5" width="18" height="6" fill="#f0c97a" stroke="#b89040" stroke-width="1"/></svg>
<div class="c" style="left:2340px;top:549.7px;width:54px"><span>2002</span></div>
<div class="c" style="left:2395px;top:549.7px;width:101px"><span><i>中鋼</i></span></div>
<div class="c" style="left:2497px;top:549.7px;width:73px"><span>-2.11</span></div>
<svg style="left:2497.5px;top:556.1px" width="20" height="12" viewBox="0 0 20 12"><polygon points="0.5,0.5 19.5,0.5 10.7,11.3 9.3,11.3" fill="#dc5434" stroke="#a63a20" stroke-width="1"/></svg>
<div class="l" style="left:2571px;top:549.7px;width:178px"><span><i>傳產</i>-<i>鋼鐵</i></span></div>
<div class="c" style="left:2750px;top:549.7px;width:74px"><span>-0.2</span></div>
<svg style="left:2750.5px;top:556.1px" width="20" height="12" viewBox="0 0 20 12"><polygon points="0.5,0.5 19.5,0.5 10.7,11.3 9.3,11.3" fill="#dc5434" stroke="#a63a20" stroke-width="1"/></svg>
<div class="c" style="left:2825px;top:549.7px;width:76px"><span>0</span></div>
<svg style="left:2825.5px;top:558.6px" width="19" height="7" viewBox="0 0 19 7"><rect x="0.5" y="0.5" width="18" height="6" fill="#f0c97a" stroke="#b89040" stroke-width="1"/></svg>
<div class="c" style="left:2340px;top:578.5px;width:54px"><span>8070</span></div>
<div class="c" style="left:2395px;top:578.5px;width:101px"><span><i>長華</i>*</span></div>
<div class="c" style="left:2497px;top:578.5px;width:73px"><span>-3.4</span></div>
<svg style="left:2497.5px;top:585.0px" width="20" height="12" viewBox="0 0 20 12"><polygon points="0.5,0.5 19.5,0.5 10.7,11.3 9.3,11.3" fill="#dc5434" stroke="#a63a20" stroke-width="1"/></svg>
<div class="l" style="left:2571px;top:578.5px;width:178px"><span><i>電子上游</i>-IC-<i>導線架</i></span></div>
<div class="c" style="left:2750px;top:578.5px;width:74px"><span>-8.2</span></div>
<svg style="left:2750.5px;top:585.0px" width="20" height="12" viewBox="0 0 20 12"><polygon points="0.5,0.5 19.5,0.5 10.7,11.3 9.3,11.3" fill="#dc5434" stroke="#a63a20" stroke-width="1"/></svg>
<div class="c" style="left:2825px;top:578.5px;width:76px"><span>0</span></div>
<svg style="left:2825.5px;top:587.5px" width="19" height="7" viewBox="0 0 19 7"><rect x="0.5" y="0.5" width="18" height="6" fill="#f0c97a" stroke="#b89040" stroke-width="1"/></svg>
<div class="c" style="left:2340px;top:607.4px;width:54px"><span>2903</span></div>
<div class="c" style="left:2395px;top:607.4px;width:101px"><span><i>遠百</i></span></div>
<div class="c" style="left:2497px;top:607.4px;width:73px"><span>-3.01</span></div>
<svg style="left:2497.5px;top:613.9px" width="20" height="12" viewBox="0 0 20 12"><polygon points="0.5,0.5 19.5,0.5 10.7,11.3 9.3,11.3" fill="#dc5434" stroke="#a63a20" stroke-width="1"/></svg>
<div class="l" style="left:2571px;top:607.4px;width:178px"><span><i>傳產</i>-<i>百貨</i></span></div>
<div class="c" style="left:2750px;top:607.4px;width:74px"><span>-0.3</span></div>
<svg style="left:2750.5px;top:613.9px" width="20" height="12" viewBox="0 0 20 12"><polygon points="0.5,0.5 19.5,0.5 10.7,11.3 9.3,11.3" fill="#dc5434" stroke="#a63a20" stroke-width="1"/></svg>
<div class="c" style="left:2825px;top:607.4px;width:76px"><span>0.2</span></div>
<svg style="left:2825.5px;top:613.9px" width="20" height="12" viewBox="0 0 20 12"><polygon points="0.5,11.5 19.5,11.5 10.7,0.7 9.3,0.7" fill="#5aa08c" stroke="#3d7f68" stroke-width="1"/></svg>
<div class="c" style="left:2340px;top:636.3px;width:54px"><span>6217</span></div>
<div class="c" style="left:2395px;top:636.3px;width:101px"><span><i>中探針</i></span></div>
<div class="c" style="left:2497px;top:636.3px;width:73px"><span>-0.78</span></div>
<svg style="left:2497.5px;top:642.8px" width="20" height="12" viewBox="0 0 20 12"><polygon points="0.5,0.5 19.5,0.5 10.7,11.3 9.3,11.3" fill="#dc5434" stroke="#a63a20" stroke-width="1"/></svg>
<div class="l" style="left:2571px;top:636.3px;width:178px"><span><i>電子上游</i>-PCB-<i>材料設備</i></span></div>
<div class="c" style="left:2750px;top:636.3px;width:74px"><span>-1.2</span></div>
<svg style="left:2750.5px;top:642.8px" width="20" height="12" viewBox="0 0 20 12"><polygon points="0.5,0.5 19.5,0.5 10.7,11.3 9.3,11.3" fill="#dc5434" stroke="#a63a20" stroke-width="1"/></svg>
<div class="c" style="left:2825px;top:636.3px;width:76px"><span>0</span></div>
<svg style="left:2825.5px;top:645.3px" width="19" height="7" viewBox="0 0 19 7"><rect x="0.5" y="0.5" width="18" height="6" fill="#f0c97a" stroke="#b89040" stroke-width="1"/></svg>
<div class="c" style="left:2340px;top:665.1px;width:54px"><span>3048</span></div>
<div class="c" style="left:2395px;top:665.1px;width:101px"><span><i>益登</i></span></div>
<div class="c" style="left:2497px;top:665.1px;width:73px"><span>-0.89</span></div>
<svg style="left:2497.5px;top:671.6px" width="20" height="12" viewBox="0 0 20 12"><polygon points="0.5,0.5 19.5,0.5 10.7,11.3 9.3,11.3" fill="#dc5434" stroke="#a63a20" stroke-width="1"/></svg>
<div class="l" style="left:2571px;top:665.1px;width:178px"><span><i>電子上游</i>-IC-<i>通路</i></span></div>
<div class="c" style="left:2750px;top:665.1px;width:74px"><span>-0.7</span></div>
<svg style="left:2750.5px;top:671.6px" width="20" height="12" viewBox="0 0 20 12"><polygon points="0.5,0.5 19.5,0.5 10.7,11.3 9.3,11.3" fill="#dc5434" stroke="#a63a20" stroke-width="1"/></svg>
<div class="c" style="left:2825px;top:665.1px;width:76px"><span>0</span></div>
<svg style="left:2825.5px;top:674.1px" width="19" height="7" viewBox="0 0 19 7"><rect x="0.5" y="0.5" width="18" height="6" fill="#f0c97a" stroke="#b89040" stroke-width="1"/></svg>
<div class="c" style="left:2340px;top:694.0px;width:54px"><span>9933</span></div>
<div class="c" style="left:2395px;top:694.0px;width:101px"><span><i>中鼎</i></span></div>
<div class="c" style="left:2497px;top:694.0px;width:73px"><span>-1.71</span></div>
<svg style="left:2497.5px;top:700.5px" width="20" height="12" viewBox="0 0 20 12"><polygon points="0.5,0.5 19.5,0.5 10.7,11.3 9.3,11.3" fill="#dc5434" stroke="#a63a20" stroke-width="1"/></svg>
<div class="l" style="left:2571px;top:694.0px;width:178px"><span><i>傳產</i>-<i>其他</i></span></div>
<div class="c" style="left:2750px;top:694.0px;width:74px"><span>-0.6</span></div>
<svg style="left:2750.5px;top:700.5px" width="20" height="12" viewBox="0 0 20 12"><polygon points="0.5,0.5 19.5,0.5 10.7,11.3 9.3,11.3" fill="#dc5434" stroke="#a63a20" stroke-width="1"/></svg>
<div class="c" style="left:2825px;top:694.0px;width:76px"><span>0</span></div>
<svg style="left:2825.5px;top:703.0px" width="19" height="7" viewBox="0 0 19 7"><rect x="0.5" y="0.5" width="18" height="6" fill="#f0c97a" stroke="#b89040" stroke-width="1"/></svg>
<div class="c" style="left:2340px;top:722.9px;width:54px"><span>3062</span></div>
<div class="c" style="left:2395px;top:722.9px;width:101px"><span><i>建漢</i></span></div>
<div class="c" style="left:2497px;top:722.9px;width:73px"><span>0.41</span></div>
<svg style="left:2497.5px;top:729.4px" width="20" height="12" viewBox="0 0 20 12"><polygon points="0.5,11.5 19.5,11.5 10.7,0.7 9.3,0.7" fill="#5aa08c" stroke="#3d7f68" stroke-width="1"/></svg>
<div class="l" style="left:2571px;top:722.9px;width:178px"><span><i>電子中游</i>-<i>網通</i></span></div>
<div class="c" style="left:2750px;top:722.9px;width:74px"><span>-0.5</span></div>
<svg style="left:2750.5px;top:729.4px" width="20" height="12" viewBox="0 0 20 12"><polygon points="0.5,0.5 19.5,0.5 10.7,11.3 9.3,11.3" fill="#dc5434" stroke="#a63a20" stroke-width="1"/></svg>
<div class="c" style="left:2825px;top:722.9px;width:76px"><span>0</span></div>
<svg style="left:2825.5px;top:731.9px" width="19" height="7" viewBox="0 0 19 7"><rect x="0.5" y="0.5" width="18" height="6" fill="#f0c97a" stroke="#b89040" stroke-width="1"/></svg>
<div class="c" style="left:2340px;top:751.8px;width:54px"><span>6550</span></div>
<div class="c" style="left:2395px;top:751.8px;width:101px"><span><i>北極星藥業</i>-KY</span></div>
<div class="c" style="left:2497px;top:751.8px;width:73px"><span>9.98</span></div>
<svg style="left:2497.5px;top:758.2px" width="20" height="12" viewBox="0 0 20 12"><polygon points="0.5,11.5 19.5,11.5 10.7,0.7 9.3,0.7" fill="#5aa08c" stroke="#3d7f68" stroke-width="1"/></svg>
<div class="l" style="left:2571px;top:751.8px;width:178px"><span><i>傳產</i>-<i>生技</i></span></div>
<div class="c" style="left:2750px;top:751.8px;width:74px"><span>0</span></div>
<svg style="left:2750.5px;top:760.7px" width="19" height="7" viewBox="0 0 19 7"><rect x="0.5" y="0.5" width="18" height="6" fill="#f0c97a" stroke="#b89040" stroke-width="1"/></svg>
<div class="c" style="left:2825px;top:751.8px;width:76px"><span>0</span></div>
<svg style="left:2825.5px;top:760.7px" width="19" height="7" viewBox="0 0 19 7"><rect x="0.5" y="0.5" width="18" height="6" fill="#f0c97a" stroke="#b89040" stroke-width="1"/></svg>
<div class="c" style="left:2340px;top:780.6px;width:54px"><span>8935</span></div>
<div class="c" style="left:2395px;top:780.6px;width:101px"><span><i>邦泰</i></span></div>
<div class="c" style="left:2497px;top:780.6px;width:73px"><span>0.98</span></div>
<svg style="left:2497.5px;top:787.1px" width="20" height="12" viewBox="0 0 20 12"><polygon points="0.5,11.5 19.5,11.5 10.7,0.7 9.3,0.7" fill="#5aa08c" stroke="#3d7f68" stroke-width="1"/></svg>
<div class="l" style="left:2571px;top:780.6px;width:178px"><span><i>傳產</i>-<i>塑膠</i></span></div>
<div class="c" style="left:2750px;top:780.6px;width:74px"><span>0.2</span></div>
<svg style="left:2750.5px;top:787.1px" width="20" height="12" viewBox="0 0 20 12"><polygon points="0.5,11.5 19.5,11.5 10.7,0.7 9.3,0.7" fill="#5aa08c" stroke="#3d7f68" stroke-width="1"/></svg>
<div class="c" style="left:2825px;top:780.6px;width:76px"><span>0</span></div>
<svg style="left:2825.5px;top:789.6px" width="19" height="7" viewBox="0 0 19 7"><rect x="0.5" y="0.5" width="18" height="6" fill="#f0c97a" stroke="#b89040" stroke-width="1"/></svg>
<div class="c" style="left:2340px;top:809.5px;width:54px"><span>9907</span></div>
<div class="c" style="left:2395px;top:809.5px;width:101px"><span><i>統一實</i></span></div>
<div class="c" style="left:2497px;top:809.5px;width:73px"><span>-1.35</span></div>
<svg style="left:2497.5px;top:816.0px" width="20" height="12" viewBox="0 0 20 12"><polygon points="0.5,0.5 19.5,0.5 10.7,11.3 9.3,11.3" fill="#dc5434" stroke="#a63a20" stroke-width="1"/></svg>
<div class="l" style="left:2571px;top:809.5px;width:178px"><span><i>傳產</i>-<i>鋼鐵</i></span></div>
<div class="c" style="left:2750px;top:809.5px;width:74px"><span>-0.1</span></div>
<svg style="left:2750.5px;top:816.0px" width="20" height="12" viewBox="0 0 20 12"><polygon points="0.5,0.5 19.5,0.5 10.7,11.3 9.3,11.3" fill="#dc5434" stroke="#a63a20" stroke-width="1"/></svg>
<div class="c" style="left:2825px;top:809.5px;width:76px"><span>0.1</span></div>
<svg style="left:2825.5px;top:816.0px" width="20" height="12" viewBox="0 0 20 12"><polygon points="0.5,11.5 19.5,11.5 10.7,0.7 9.3,0.7" fill="#5aa08c" stroke="#3d7f68" stroke-width="1"/></svg>
<div class="c" style="left:2340px;top:838.4px;width:54px"><span>2607</span></div>
<div class="c" style="left:2395px;top:838.4px;width:101px"><span><i>榮運</i></span></div>
<div class="c" style="left:2497px;top:838.4px;width:73px"><span>0.7</span></div>
<svg style="left:2497.5px;top:844.8px" width="20" height="12" viewBox="0 0 20 12"><polygon points="0.5,11.5 19.5,11.5 10.7,0.7 9.3,0.7" fill="#5aa08c" stroke="#3d7f68" stroke-width="1"/></svg>
<div class="l" style="left:2571px;top:838.4px;width:178px"><span><i>傳產</i>-<i>航運</i></span></div>
<div class="c" style="left:2750px;top:838.4px;width:74px"><span>-0.1</span></div>
<svg style="left:2750.5px;top:844.8px" width="20" height="12" viewBox="0 0 20 12"><polygon points="0.5,0.5 19.5,0.5 10.7,11.3 9.3,11.3" fill="#dc5434" stroke="#a63a20" stroke-width="1"/></svg>
<div class="c" style="left:2825px;top:838.4px;width:76px"><span>-0.1</span></div>
<svg style="left:2825.5px;top:844.8px" width="20" height="12" viewBox="0 0 20 12"><polygon points="0.5,0.5 19.5,0.5 10.7,11.3 9.3,11.3" fill="#dc5434" stroke="#a63a20" stroke-width="1"/></svg>
<div class="c" style="left:2340px;top:867.2px;width:54px"><span>2603</span></div>
<div class="c" style="left:2395px;top:867.2px;width:101px"><span><i>長榮</i></span></div>
<div class="c" style="left:2497px;top:867.2px;width:73px"><span>0</span></div>
<svg style="left:2497.5px;top:876.2px" width="19" height="7" viewBox="0 0 19 7"><rect x="0.5" y="0.5" width="18" height="6" fill="#f0c97a" stroke="#b89040" stroke-width="1"/></svg>
<div class="l" style="left:2571px;top:867.2px;width:178px"><span><i>傳產</i>-<i>航運</i></span></div>
<div class="c" style="left:2750px;top:867.2px;width:74px"><span>0.3</span></div>
<svg style="left:2750.5px;top:873.7px" width="20" height="12" viewBox="0 0 20 12"><polygon points="0.5,11.5 19.5,11.5 10.7,0.7 9.3,0.7" fill="#5aa08c" stroke="#3d7f68" stroke-width="1"/></svg>
<div class="c" style="left:2825px;top:867.2px;width:76px"><span>0.1</span></div>
<svg style="left:2825.5px;top:873.7px" width="20" height="12" viewBox="0 0 20 12"><polygon points="0.5,11.5 19.5,11.5 10.7,0.7 9.3,0.7" fill="#5aa08c" stroke="#3d7f68" stroke-width="1"/></svg>
<div class="c" style="left:2340px;top:896.1px;width:54px"><span>2855</span></div>
<div class="c" style="left:2395px;top:896.1px;width:101px"><span><i>統一證</i></span></div>
<div class="c" style="left:2497px;top:896.1px;width:73px"><span>-0.62</span></div>
<svg style="left:2497.5px;top:902.6px" width="20" height="12" viewBox="0 0 20 12"><polygon points="0.5,0.5 19.5,0.5 10.7,11.3 9.3,11.3" fill="#dc5434" stroke="#a63a20" stroke-width="1"/></svg>
<div class="l" style="left:2571px;top:896.1px;width:178px"><span><i>金融</i>-<i>證券</i></span></div>
<div class="c" style="left:2750px;top:896.1px;width:74px"><span>-0.2</span></div>
<svg style="left:2750.5px;top:902.6px" width="20" height="12" viewBox="0 0 20 12"><polygon points="0.5,0.5 19.5,0.5 10.7,11.3 9.3,11.3" fill="#dc5434" stroke="#a63a20" stroke-width="1"/></svg>
<div class="c" style="left:2825px;top:896.1px;width:76px"><span>-0.1</span></div>
<svg style="left:2825.5px;top:902.6px" width="20" height="12" viewBox="0 0 20 12"><polygon points="0.5,0.5 19.5,0.5 10.7,11.3 9.3,11.3" fill="#dc5434" stroke="#a63a20" stroke-width="1"/></svg>
<div class="c" style="left:2340px;top:925.0px;width:54px"><span>3663</span></div>
<div class="c" style="left:2395px;top:925.0px;width:101px"><span><i>鑫科</i></span></div>
<div class="c" style="left:2497px;top:925.0px;width:73px"><span>-4.34</span></div>
<svg style="left:2497.5px;top:931.5px" width="20" height="12" viewBox="0 0 20 12"><polygon points="0.5,0.5 19.5,0.5 10.7,11.3 9.3,11.3" fill="#dc5434" stroke="#a63a20" stroke-width="1"/></svg>
<div class="l" style="left:2571px;top:925.0px;width:178px"><span><i>傳產</i>-<i>其他</i></span></div>
<div class="c" style="left:2750px;top:925.0px;width:74px"><span>-0.1</span></div>
<svg style="left:2750.5px;top:931.5px" width="20" height="12" viewBox="0 0 20 12"><polygon points="0.5,0.5 19.5,0.5 10.7,11.3 9.3,11.3" fill="#dc5434" stroke="#a63a20" stroke-width="1"/></svg>
<div class="c" style="left:2825px;top:925.0px;width:76px"><span>0</span></div>
<svg style="left:2825.5px;top:934.0px" width="19" height="7" viewBox="0 0 19 7"><rect x="0.5" y="0.5" width="18" height="6" fill="#f0c97a" stroke="#b89040" stroke-width="1"/></svg>
<div class="c" style="left:2340px;top:953.8px;width:54px"><span>2101</span></div>
<div class="c" style="left:2395px;top:953.8px;width:101px"><span><i>南港</i></span></div>
<div class="c" style="left:2497px;top:953.8px;width:73px"><span>-0.52</span></div>
<svg style="left:2497.5px;top:960.3px" width="20" height="12" viewBox="0 0 20 12"><polygon points="0.5,0.5 19.5,0.5 10.7,11.3 9.3,11.3" fill="#dc5434" stroke="#a63a20" stroke-width="1"/></svg>
<div class="l" style="left:2571px;top:953.8px;width:178px"><span><i>傳產</i>-<i>橡膠</i></span></div>
<div class="c" style="left:2750px;top:953.8px;width:74px"><span>0</span></div>
<svg style="left:2750.5px;top:962.8px" width="19" height="7" viewBox="0 0 19 7"><rect x="0.5" y="0.5" width="18" height="6" fill="#f0c97a" stroke="#b89040" stroke-width="1"/></svg>
<div class="c" style="left:2825px;top:953.8px;width:76px"><span>0</span></div>
<svg style="left:2825.5px;top:962.8px" width="19" height="7" viewBox="0 0 19 7"><rect x="0.5" y="0.5" width="18" height="6" fill="#f0c97a" stroke="#b89040" stroke-width="1"/></svg>
<div class="c" style="left:2340px;top:982.7px;width:54px"><span>6153</span></div>
<div class="c" style="left:2395px;top:982.7px;width:101px"><span><i>嘉聯益</i></span></div>
<div class="c" style="left:2497px;top:982.7px;width:73px"><span>-3.83</span></div>
<svg style="left:2497.5px;top:989.2px" width="20" height="12" viewBox="0 0 20 12"><polygon points="0.5,0.5 19.5,0.5 10.7,11.3 9.3,11.3" fill="#dc5434" stroke="#a63a20" stroke-width="1"/></svg>
<div class="l" style="left:2571px;top:982.7px;width:178px"><span><i>電子上游</i>-PCB-<i>製造</i></span></div>
<div class="c" style="left:2750px;top:982.7px;width:74px"><span>-0.2</span></div>
<svg style="left:2750.5px;top:989.2px" width="20" height="12" viewBox="0 0 20 12"><polygon points="0.5,0.5 19.5,0.5 10.7,11.3 9.3,11.3" fill="#dc5434" stroke="#a63a20" stroke-width="1"/></svg>
<div class="c" style="left:2825px;top:982.7px;width:76px"><span>0</span></div>
<svg style="left:2825.5px;top:991.7px" width="19" height="7" viewBox="0 0 19 7"><rect x="0.5" y="0.5" width="18" height="6" fill="#f0c97a" stroke="#b89040" stroke-width="1"/></svg>
<div class="c" style="left:2340px;top:1011.6px;width:54px"><span>6179</span></div>
<div class="c" style="left:2395px;top:1011.6px;width:101px"><span><i>亞通</i></span></div>
<div class="c" style="left:2497px;top:1011.6px;width:73px"><span>-0.65</span></div>
<svg style="left:2497.5px;top:1018.1px" width="20" height="12" viewBox="0 0 20 12"><polygon points="0.5,0.5 19.5,0.5 10.7,11.3 9.3,11.3" fill="#dc5434" stroke="#a63a20" stroke-width="1"/></svg>
<div class="l" style="left:2571px;top:1011.6px;width:178px"><span><i>傳產</i>-<i>其他</i></span></div>
<div class="c" style="left:2750px;top:1011.6px;width:74px"><span>0.3</span></div>
<svg style="left:2750.5px;top:1018.1px" width="20" height="12" viewBox="0 0 20 12"><polygon points="0.5,11.5 19.5,11.5 10.7,0.7 9.3,0.7" fill="#5aa08c" stroke="#3d7f68" stroke-width="1"/></svg>
<div class="c" style="left:2825px;top:1011.6px;width:76px"><span>0</span></div>
<svg style="left:2825.5px;top:1020.6px" width="19" height="7" viewBox="0 0 19 7"><rect x="0.5" y="0.5" width="18" height="6" fill="#f0c97a" stroke="#b89040" stroke-width="1"/></svg>
<div class="c" style="left:2340px;top:1040.5px;width:54px"><span>2023</span></div>
<div class="c" style="left:2395px;top:1040.5px;width:101px"><span><i>燁輝</i></span></div>
<div class="c" style="left:2497px;top:1040.5px;width:73px"><span>-0.67</span></div>
<svg style="left:2497.5px;top:1046.9px" width="20" height="12" viewBox="0 0 20 12"><polygon points="0.5,0.5 19.5,0.5 10.7,11.3 9.3,11.3" fill="#dc5434" stroke="#a63a20" stroke-width="1"/></svg>
<div class="l" style="left:2571px;top:1040.5px;width:178px"><span><i>傳產</i>-<i>鋼鐵</i></span></div>
<div class="c" style="left:2750px;top:1040.5px;width:74px"><span>-0.1</span></div>
<svg style="left:2750.5px;top:1046.9px" width="20" height="12" viewBox="0 0 20 12"><polygon points="0.5,0.5 19.5,0.5 10.7,11.3 9.3,11.3" fill="#dc5434" stroke="#a63a20" stroke-width="1"/></svg>
<div class="c" style="left:2825px;top:1040.5px;width:76px"><span>0</span></div>
<svg style="left:2825.5px;top:1049.4px" width="19" height="7" viewBox="0 0 19 7"><rect x="0.5" y="0.5" width="18" height="6" fill="#f0c97a" stroke="#b89040" stroke-width="1"/></svg>
<div class="c" style="left:2340px;top:1069.3px;width:54px"><span>5876</span></div>
<div class="c" style="left:2395px;top:1069.3px;width:101px"><span><i>上海商銀</i></span></div>
<div class="c" style="left:2497px;top:1069.3px;width:73px"><span>0.5</span></div>
<svg style="left:2497.5px;top:1075.8px" width="20" height="12" viewBox="0 0 20 12"><polygon points="0.5,11.5 19.5,11.5 10.7,0.7 9.3,0.7" fill="#5aa08c" stroke="#3d7f68" stroke-width="1"/></svg>
<div class="l" style="left:2571px;top:1069.3px;width:178px"><span><i>金融</i>-<i>銀行</i></span></div>
<div class="c" style="left:2750px;top:1069.3px;width:74px"><span>0</span></div>
<svg style="left:2750.5px;top:1078.3px" width="19" height="7" viewBox="0 0 19 7"><rect x="0.5" y="0.5" width="18" height="6" fill="#f0c97a" stroke="#b89040" stroke-width="1"/></svg>
<div class="c" style="left:2825px;top:1069.3px;width:76px"><span>0</span></div>
<svg style="left:2825.5px;top:1078.3px" width="19" height="7" viewBox="0 0 19 7"><rect x="0.5" y="0.5" width="18" height="6" fill="#f0c97a" stroke="#b89040" stroke-width="1"/></svg>
<div class="c" style="left:2340px;top:1098.2px;width:54px"><span>2427</span></div>
<div class="c" style="left:2395px;top:1098.2px;width:101px"><span><i>三商電</i></span></div>
<div class="c" style="left:2497px;top:1098.2px;width:73px"><span>-1.66</span></div>
<svg style="left:2497.5px;top:1104.7px" width="20" height="12" viewBox="0 0 20 12"><polygon points="0.5,0.5 19.5,0.5 10.7,11.3 9.3,11.3" fill="#dc5434" stroke="#a63a20" stroke-width="1"/></svg>
<div class="l" style="left:2571px;top:1098.2px;width:178px"><span><i>軟體</i>-<i>系統整合</i></span></div>
<div class="c" style="left:2750px;top:1098.2px;width:74px"><span>-0.1</span></div>
<svg style="left:2750.5px;top:1104.7px" width="20" height="12" viewBox="0 0 20 12"><polygon points="0.5,0.5 19.5,0.5 10.7,11.3 9.3,11.3" fill="#dc5434" stroke="#a63a20" stroke-width="1"/></svg>
<div class="c" style="left:2825px;top:1098.2px;width:76px"><span>0</span></div>
<svg style="left:2825.5px;top:1107.2px" width="19" height="7" viewBox="0 0 19 7"><rect x="0.5" y="0.5" width="18" height="6" fill="#f0c97a" stroke="#b89040" stroke-width="1"/></svg>
<div class="c" style="left:2340px;top:1127.1px;width:54px"><span>1907</span></div>
<div class="c" style="left:2395px;top:1127.1px;width:101px"><span><i>永豐餘</i></span></div>
<div class="c" style="left:2497px;top:1127.1px;width:73px"><span>-0.76</span></div>
<svg style="left:2497.5px;top:1133.5px" width="20" height="12" viewBox="0 0 20 12"><polygon points="0.5,0.5 19.5,0.5 10.7,11.3 9.3,11.3" fill="#dc5434" stroke="#a63a20" stroke-width="1"/></svg>
<div class="l" style="left:2571px;top:1127.1px;width:178px"><span><i>傳產</i>-<i>紙業</i></span></div>
<div class="c" style="left:2750px;top:1127.1px;width:74px"><span>0</span></div>
<svg style="left:2750.5px;top:1136.0px" width="19" height="7" viewBox="0 0 19 7"><rect x="0.5" y="0.5" width="18" height="6" fill="#f0c97a" stroke="#b89040" stroke-width="1"/></svg>
<div class="c" style="left:2825px;top:1127.1px;width:76px"><span>0</span></div>
<svg style="left:2825.5px;top:1136.0px" width="19" height="7" viewBox="0 0 19 7"><rect x="0.5" y="0.5" width="18" height="6" fill="#f0c97a" stroke="#b89040" stroke-width="1"/></svg>
<div class="c" style="left:2340px;top:1155.9px;width:54px"><span>1313</span></div>
<div class="c" style="left:2395px;top:1155.9px;width:101px"><span><i>聯成</i></span></div>
<div class="c" style="left:2497px;top:1155.9px;width:73px"><span>-2.35</span></div>
<svg style="left:2497.5px;top:1162.4px" width="20" height="12" viewBox="0 0 20 12"><polygon points="0.5,0.5 19.5,0.5 10.7,11.3 9.3,11.3" fill="#dc5434" stroke="#a63a20" stroke-width="1"/></svg>
<div class="l" style="left:2571px;top:1155.9px;width:178px"><span><i>傳產</i>-<i>塑膠</i></span></div>
<div class="c" style="left:2750px;top:1155.9px;width:74px"><span>-0.2</span></div>
<svg style="left:2750.5px;top:1162.4px" width="20" height="12" viewBox="0 0 20 12"><polygon points="0.5,0.5 19.5,0.5 10.7,11.3 9.3,11.3" fill="#dc5434" stroke="#a63a20" stroke-width="1"/></svg>
<div class="c" style="left:2825px;top:1155.9px;width:76px"><span>0</span></div>
<svg style="left:2825.5px;top:1164.9px" width="19" height="7" viewBox="0 0 19 7"><rect x="0.5" y="0.5" width="18" height="6" fill="#f0c97a" stroke="#b89040" stroke-width="1"/></svg>
<div class="c" style="left:2340px;top:1184.8px;width:54px"><span>1904</span></div>
<div class="c" style="left:2395px;top:1184.8px;width:101px"><span><i>正隆</i></span></div>
<div class="c" style="left:2497px;top:1184.8px;width:73px"><span>-1.65</span></div>
<svg style="left:2497.5px;top:1191.3px" width="20" height="12" viewBox="0 0 20 12"><polygon points="0.5,0.5 19.5,0.5 10.7,11.3 9.3,11.3" fill="#dc5434" stroke="#a63a20" stroke-width="1"/></svg>
<div class="l" style="left:2571px;top:1184.8px;width:178px"><span><i>傳產</i>-<i>紙業</i></span></div>
<div class="c" style="left:2750px;top:1184.8px;width:74px"><span>-0.1</span></div>
<svg style="left:2750.5px;top:1191.3px" width="20" height="12" viewBox="0 0 20 12"><polygon points="0.5,0.5 19.5,0.5 10.7,11.3 9.3,11.3" fill="#dc5434" stroke="#a63a20" stroke-width="1"/></svg>
<div class="c" style="left:2825px;top:1184.8px;width:76px"><span>0</span></div>
<svg style="left:2825.5px;top:1193.8px" width="19" height="7" viewBox="0 0 19 7"><rect x="0.5" y="0.5" width="18" height="6" fill="#f0c97a" stroke="#b89040" stroke-width="1"/></svg>
<div class="c" style="left:2340px;top:1213.7px;width:54px"><span>1316</span></div>
<div class="c" style="left:2395px;top:1213.7px;width:101px"><span><i>上曜</i></span></div>
<div class="c" style="left:2497px;top:1213.7px;width:73px"><span>-0.98</span></div>
<svg style="left:2497.5px;top:1220.2px" width="20" height="12" viewBox="0 0 20 12"><polygon points="0.5,0.5 19.5,0.5 10.7,11.3 9.3,11.3" fill="#dc5434" stroke="#a63a20" stroke-width="1"/></svg>
<div class="l" style="left:2571px;top:1213.7px;width:178px"><span><i>傳產</i>-<i>營建</i></span></div>
<div class="c" style="left:2750px;top:1213.7px;width:74px"><span>0.4</span></div>
<svg style="left:2750.5px;top:1220.2px" width="20" height="12" viewBox="0 0 20 12"><polygon points="0.5,11.5 19.5,11.5 10.7,0.7 9.3,0.7" fill="#5aa08c" stroke="#3d7f68" stroke-width="1"/></svg>
<div class="c" style="left:2825px;top:1213.7px;width:76px"><span>0</span></div>
<svg style="left:2825.5px;top:1222.7px" width="19" height="7" viewBox="0 0 19 7"><rect x="0.5" y="0.5" width="18" height="6" fill="#f0c97a" stroke="#b89040" stroke-width="1"/></svg>
<div class="c" style="left:2340px;top:1242.5px;width:54px"><span>1305</span></div>
<div class="c" style="left:2395px;top:1242.5px;width:101px"><span><i>華夏</i></span></div>
<div class="c" style="left:2497px;top:1242.5px;width:73px"><span>-1.75</span></div>
<svg style="left:2497.5px;top:1249.0px" width="20" height="12" viewBox="0 0 20 12"><polygon points="0.5,0.5 19.5,0.5 10.7,11.3 9.3,11.3" fill="#dc5434" stroke="#a63a20" stroke-width="1"/></svg>
<div class="l" style="left:2571px;top:1242.5px;width:178px"><span><i>傳產</i>-<i>塑膠</i></span></div>
<div class="c" style="left:2750px;top:1242.5px;width:74px"><span>-0.1</span></div>
<svg style="left:2750.5px;top:1249.0px" width="20" height="12" viewBox="0 0 20 12"><polygon points="0.5,0.5 19.5,0.5 10.7,11.3 9.3,11.3" fill="#dc5434" stroke="#a63a20" stroke-width="1"/></svg>
<div class="c" style="left:2825px;top:1242.5px;width:76px"><span>0</span></div>
<svg style="left:2825.5px;top:1251.5px" width="19" height="7" viewBox="0 0 19 7"><rect x="0.5" y="0.5" width="18" height="6" fill="#f0c97a" stroke="#b89040" stroke-width="1"/></svg>
<div style="left:0;top:0;width:1px;height:1595px;background:#9a9a9a"></div>
<div style="left:0;top:0;width:2901px;height:1px;background:#8c9098"></div>
<div style="left:0;top:1594px;width:2901px;height:1px;background:#7a7a7a"></div>
<div style="left:2900px;top:0;width:1px;height:1595px;background:#9a9a9a"></div>
</body></html>
